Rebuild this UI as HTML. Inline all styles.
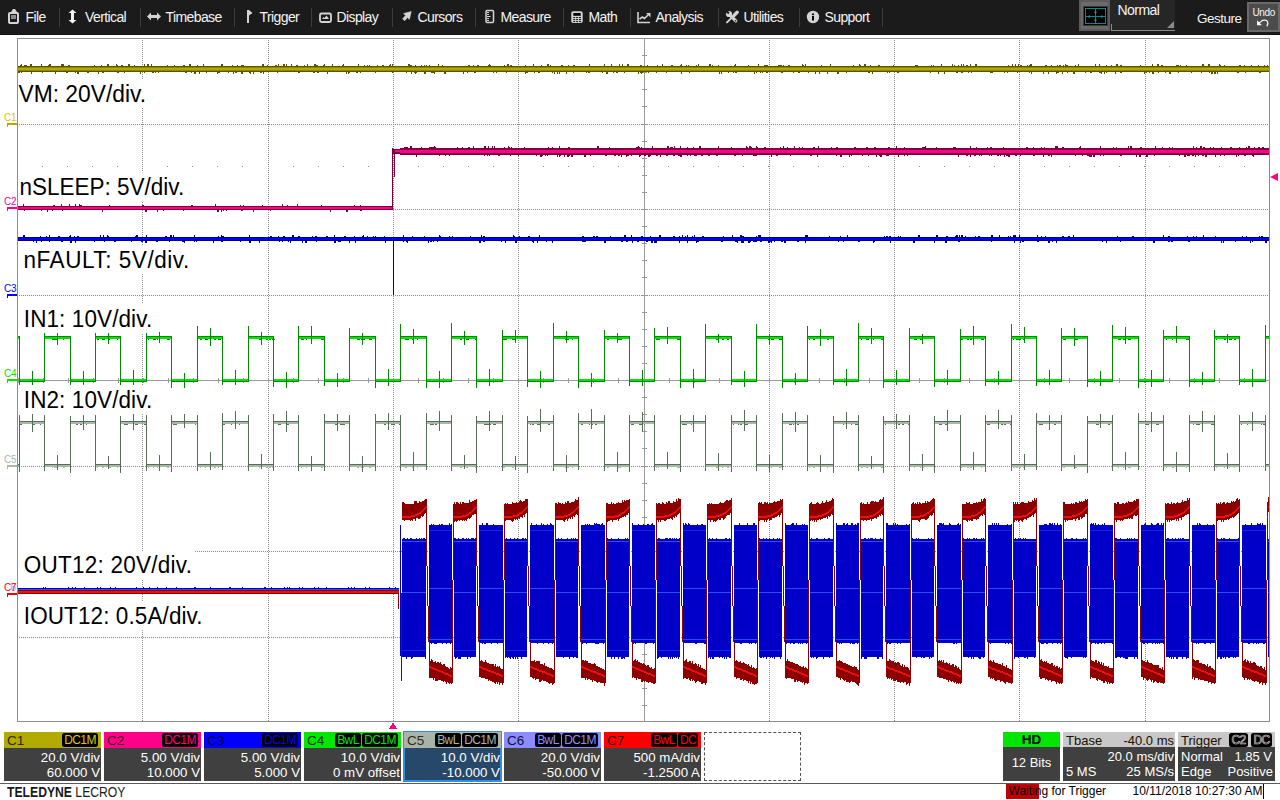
<!DOCTYPE html>
<html><head><meta charset="utf-8"><style>
*{margin:0;padding:0;box-sizing:border-box}
html,body{width:1280px;height:800px;overflow:hidden;background:#fff;font-family:"Liberation Sans",sans-serif}
#menu{position:absolute;left:0;top:0;width:1280px;height:35px;background:#1b1b1b;border-bottom:1px solid #0c1218}
.mi{position:absolute;top:10px;color:#f4f4f4;font-size:14px;line-height:14px;white-space:nowrap;letter-spacing:-0.6px}
.sep{position:absolute;top:8px;width:1px;height:19px;background:#3c3c3c}
#plot{position:absolute;left:0;top:0}
.lb{position:absolute;color:#000;line-height:1;white-space:nowrap}
.mk{position:absolute;font-size:10px;line-height:10px;left:4px;letter-spacing:-0.3px}
.box{position:absolute;top:732px;width:97px;height:49px}
.hd{position:absolute;left:0;top:0;width:100%;height:16px}
.cn{position:absolute;left:3px;top:1px;font-size:13.5px;line-height:15px}
.bd{position:absolute;top:1px;height:14px;background:#000;border-radius:2.5px;font-size:12px;line-height:14px;text-align:center;letter-spacing:-0.6px}
.v1,.v2{position:absolute;right:1px;color:#fff;font-size:13.3px;line-height:14px;white-space:nowrap}
.v1{top:18.5px} .v2{top:33.8px}
</style></head><body>
<svg id="plot" width="1280" height="800" shape-rendering="crispEdges">
<path fill="#8a8a8a" d="M142 40h1v1h-1zM142 42h1v1h-1zM142 44h1v1h-1zM142 46h1v1h-1zM142 48h1v1h-1zM142 50h1v1h-1zM142 52h1v1h-1zM142 54h1v1h-1zM142 56h1v1h-1zM142 58h1v1h-1zM142 60h1v1h-1zM142 62h1v1h-1zM142 64h1v1h-1zM142 66h1v1h-1zM142 68h1v1h-1zM142 70h1v1h-1zM142 72h1v1h-1zM142 74h1v1h-1zM142 76h1v1h-1zM142 78h1v1h-1zM142 80h1v1h-1zM142 82h1v1h-1zM142 84h1v1h-1zM142 86h1v1h-1zM142 88h1v1h-1zM142 90h1v1h-1zM142 92h1v1h-1zM142 94h1v1h-1zM142 96h1v1h-1zM142 98h1v1h-1zM142 100h1v1h-1zM142 102h1v1h-1zM142 104h1v1h-1zM142 106h1v1h-1zM142 108h1v1h-1zM142 110h1v1h-1zM142 112h1v1h-1zM142 114h1v1h-1zM142 116h1v1h-1zM142 118h1v1h-1zM142 120h1v1h-1zM142 122h1v1h-1zM142 124h1v1h-1zM142 126h1v1h-1zM142 128h1v1h-1zM142 130h1v1h-1zM142 132h1v1h-1zM142 134h1v1h-1zM142 136h1v1h-1zM142 138h1v1h-1zM142 140h1v1h-1zM142 142h1v1h-1zM142 144h1v1h-1zM142 146h1v1h-1zM142 148h1v1h-1zM142 150h1v1h-1zM142 152h1v1h-1zM142 154h1v1h-1zM142 156h1v1h-1zM142 158h1v1h-1zM142 160h1v1h-1zM142 162h1v1h-1zM142 164h1v1h-1zM142 166h1v1h-1zM142 168h1v1h-1zM142 170h1v1h-1zM142 172h1v1h-1zM142 174h1v1h-1zM142 176h1v1h-1zM142 178h1v1h-1zM142 180h1v1h-1zM142 182h1v1h-1zM142 184h1v1h-1zM142 186h1v1h-1zM142 188h1v1h-1zM142 190h1v1h-1zM142 192h1v1h-1zM142 194h1v1h-1zM142 196h1v1h-1zM142 198h1v1h-1zM142 200h1v1h-1zM142 202h1v1h-1zM142 204h1v1h-1zM142 206h1v1h-1zM142 208h1v1h-1zM142 210h1v1h-1zM142 212h1v1h-1zM142 214h1v1h-1zM142 216h1v1h-1zM142 218h1v1h-1zM142 220h1v1h-1zM142 222h1v1h-1zM142 224h1v1h-1zM142 226h1v1h-1zM142 228h1v1h-1zM142 230h1v1h-1zM142 232h1v1h-1zM142 234h1v1h-1zM142 236h1v1h-1zM142 238h1v1h-1zM142 240h1v1h-1zM142 242h1v1h-1zM142 244h1v1h-1zM142 246h1v1h-1zM142 248h1v1h-1zM142 250h1v1h-1zM142 252h1v1h-1zM142 254h1v1h-1zM142 256h1v1h-1zM142 258h1v1h-1zM142 260h1v1h-1zM142 262h1v1h-1zM142 264h1v1h-1zM142 266h1v1h-1zM142 268h1v1h-1zM142 270h1v1h-1zM142 272h1v1h-1zM142 274h1v1h-1zM142 276h1v1h-1zM142 278h1v1h-1zM142 280h1v1h-1zM142 282h1v1h-1zM142 284h1v1h-1zM142 286h1v1h-1zM142 288h1v1h-1zM142 290h1v1h-1zM142 292h1v1h-1zM142 294h1v1h-1zM142 296h1v1h-1zM142 298h1v1h-1zM142 300h1v1h-1zM142 302h1v1h-1zM142 304h1v1h-1zM142 306h1v1h-1zM142 308h1v1h-1zM142 310h1v1h-1zM142 312h1v1h-1zM142 314h1v1h-1zM142 316h1v1h-1zM142 318h1v1h-1zM142 320h1v1h-1zM142 322h1v1h-1zM142 324h1v1h-1zM142 326h1v1h-1zM142 328h1v1h-1zM142 330h1v1h-1zM142 332h1v1h-1zM142 334h1v1h-1zM142 336h1v1h-1zM142 338h1v1h-1zM142 340h1v1h-1zM142 342h1v1h-1zM142 344h1v1h-1zM142 346h1v1h-1zM142 348h1v1h-1zM142 350h1v1h-1zM142 352h1v1h-1zM142 354h1v1h-1zM142 356h1v1h-1zM142 358h1v1h-1zM142 360h1v1h-1zM142 362h1v1h-1zM142 364h1v1h-1zM142 366h1v1h-1zM142 368h1v1h-1zM142 370h1v1h-1zM142 372h1v1h-1zM142 374h1v1h-1zM142 376h1v1h-1zM142 378h1v1h-1zM142 380h1v1h-1zM142 382h1v1h-1zM142 384h1v1h-1zM142 386h1v1h-1zM142 388h1v1h-1zM142 390h1v1h-1zM142 392h1v1h-1zM142 394h1v1h-1zM142 396h1v1h-1zM142 398h1v1h-1zM142 400h1v1h-1zM142 402h1v1h-1zM142 404h1v1h-1zM142 406h1v1h-1zM142 408h1v1h-1zM142 410h1v1h-1zM142 412h1v1h-1zM142 414h1v1h-1zM142 416h1v1h-1zM142 418h1v1h-1zM142 420h1v1h-1zM142 422h1v1h-1zM142 424h1v1h-1zM142 426h1v1h-1zM142 428h1v1h-1zM142 430h1v1h-1zM142 432h1v1h-1zM142 434h1v1h-1zM142 436h1v1h-1zM142 438h1v1h-1zM142 440h1v1h-1zM142 442h1v1h-1zM142 444h1v1h-1zM142 446h1v1h-1zM142 448h1v1h-1zM142 450h1v1h-1zM142 452h1v1h-1zM142 454h1v1h-1zM142 456h1v1h-1zM142 458h1v1h-1zM142 460h1v1h-1zM142 462h1v1h-1zM142 464h1v1h-1zM142 466h1v1h-1zM142 468h1v1h-1zM142 470h1v1h-1zM142 472h1v1h-1zM142 474h1v1h-1zM142 476h1v1h-1zM142 478h1v1h-1zM142 480h1v1h-1zM142 482h1v1h-1zM142 484h1v1h-1zM142 486h1v1h-1zM142 488h1v1h-1zM142 490h1v1h-1zM142 492h1v1h-1zM142 494h1v1h-1zM142 496h1v1h-1zM142 498h1v1h-1zM142 500h1v1h-1zM142 502h1v1h-1zM142 504h1v1h-1zM142 506h1v1h-1zM142 508h1v1h-1zM142 510h1v1h-1zM142 512h1v1h-1zM142 514h1v1h-1zM142 516h1v1h-1zM142 518h1v1h-1zM142 520h1v1h-1zM142 522h1v1h-1zM142 524h1v1h-1zM142 526h1v1h-1zM142 528h1v1h-1zM142 530h1v1h-1zM142 532h1v1h-1zM142 534h1v1h-1zM142 536h1v1h-1zM142 538h1v1h-1zM142 540h1v1h-1zM142 542h1v1h-1zM142 544h1v1h-1zM142 546h1v1h-1zM142 548h1v1h-1zM142 550h1v1h-1zM142 552h1v1h-1zM142 554h1v1h-1zM142 556h1v1h-1zM142 558h1v1h-1zM142 560h1v1h-1zM142 562h1v1h-1zM142 564h1v1h-1zM142 566h1v1h-1zM142 568h1v1h-1zM142 570h1v1h-1zM142 572h1v1h-1zM142 574h1v1h-1zM142 576h1v1h-1zM142 578h1v1h-1zM142 580h1v1h-1zM142 582h1v1h-1zM142 584h1v1h-1zM142 586h1v1h-1zM142 588h1v1h-1zM142 590h1v1h-1zM142 592h1v1h-1zM142 594h1v1h-1zM142 596h1v1h-1zM142 598h1v1h-1zM142 600h1v1h-1zM142 602h1v1h-1zM142 604h1v1h-1zM142 606h1v1h-1zM142 608h1v1h-1zM142 610h1v1h-1zM142 612h1v1h-1zM142 614h1v1h-1zM142 616h1v1h-1zM142 618h1v1h-1zM142 620h1v1h-1zM142 622h1v1h-1zM142 624h1v1h-1zM142 626h1v1h-1zM142 628h1v1h-1zM142 630h1v1h-1zM142 632h1v1h-1zM142 634h1v1h-1zM142 636h1v1h-1zM142 638h1v1h-1zM142 640h1v1h-1zM142 642h1v1h-1zM142 644h1v1h-1zM142 646h1v1h-1zM142 648h1v1h-1zM142 650h1v1h-1zM142 652h1v1h-1zM142 654h1v1h-1zM142 656h1v1h-1zM142 658h1v1h-1zM142 660h1v1h-1zM142 662h1v1h-1zM142 664h1v1h-1zM142 666h1v1h-1zM142 668h1v1h-1zM142 670h1v1h-1zM142 672h1v1h-1zM142 674h1v1h-1zM142 676h1v1h-1zM142 678h1v1h-1zM142 680h1v1h-1zM142 682h1v1h-1zM142 684h1v1h-1zM142 686h1v1h-1zM142 688h1v1h-1zM142 690h1v1h-1zM142 692h1v1h-1zM142 694h1v1h-1zM142 696h1v1h-1zM142 698h1v1h-1zM142 700h1v1h-1zM142 702h1v1h-1zM142 704h1v1h-1zM142 706h1v1h-1zM142 708h1v1h-1zM142 710h1v1h-1zM142 712h1v1h-1zM142 714h1v1h-1zM142 716h1v1h-1zM142 718h1v1h-1zM142 720h1v1h-1zM268 40h1v1h-1zM268 42h1v1h-1zM268 44h1v1h-1zM268 46h1v1h-1zM268 48h1v1h-1zM268 50h1v1h-1zM268 52h1v1h-1zM268 54h1v1h-1zM268 56h1v1h-1zM268 58h1v1h-1zM268 60h1v1h-1zM268 62h1v1h-1zM268 64h1v1h-1zM268 66h1v1h-1zM268 68h1v1h-1zM268 70h1v1h-1zM268 72h1v1h-1zM268 74h1v1h-1zM268 76h1v1h-1zM268 78h1v1h-1zM268 80h1v1h-1zM268 82h1v1h-1zM268 84h1v1h-1zM268 86h1v1h-1zM268 88h1v1h-1zM268 90h1v1h-1zM268 92h1v1h-1zM268 94h1v1h-1zM268 96h1v1h-1zM268 98h1v1h-1zM268 100h1v1h-1zM268 102h1v1h-1zM268 104h1v1h-1zM268 106h1v1h-1zM268 108h1v1h-1zM268 110h1v1h-1zM268 112h1v1h-1zM268 114h1v1h-1zM268 116h1v1h-1zM268 118h1v1h-1zM268 120h1v1h-1zM268 122h1v1h-1zM268 124h1v1h-1zM268 126h1v1h-1zM268 128h1v1h-1zM268 130h1v1h-1zM268 132h1v1h-1zM268 134h1v1h-1zM268 136h1v1h-1zM268 138h1v1h-1zM268 140h1v1h-1zM268 142h1v1h-1zM268 144h1v1h-1zM268 146h1v1h-1zM268 148h1v1h-1zM268 150h1v1h-1zM268 152h1v1h-1zM268 154h1v1h-1zM268 156h1v1h-1zM268 158h1v1h-1zM268 160h1v1h-1zM268 162h1v1h-1zM268 164h1v1h-1zM268 166h1v1h-1zM268 168h1v1h-1zM268 170h1v1h-1zM268 172h1v1h-1zM268 174h1v1h-1zM268 176h1v1h-1zM268 178h1v1h-1zM268 180h1v1h-1zM268 182h1v1h-1zM268 184h1v1h-1zM268 186h1v1h-1zM268 188h1v1h-1zM268 190h1v1h-1zM268 192h1v1h-1zM268 194h1v1h-1zM268 196h1v1h-1zM268 198h1v1h-1zM268 200h1v1h-1zM268 202h1v1h-1zM268 204h1v1h-1zM268 206h1v1h-1zM268 208h1v1h-1zM268 210h1v1h-1zM268 212h1v1h-1zM268 214h1v1h-1zM268 216h1v1h-1zM268 218h1v1h-1zM268 220h1v1h-1zM268 222h1v1h-1zM268 224h1v1h-1zM268 226h1v1h-1zM268 228h1v1h-1zM268 230h1v1h-1zM268 232h1v1h-1zM268 234h1v1h-1zM268 236h1v1h-1zM268 238h1v1h-1zM268 240h1v1h-1zM268 242h1v1h-1zM268 244h1v1h-1zM268 246h1v1h-1zM268 248h1v1h-1zM268 250h1v1h-1zM268 252h1v1h-1zM268 254h1v1h-1zM268 256h1v1h-1zM268 258h1v1h-1zM268 260h1v1h-1zM268 262h1v1h-1zM268 264h1v1h-1zM268 266h1v1h-1zM268 268h1v1h-1zM268 270h1v1h-1zM268 272h1v1h-1zM268 274h1v1h-1zM268 276h1v1h-1zM268 278h1v1h-1zM268 280h1v1h-1zM268 282h1v1h-1zM268 284h1v1h-1zM268 286h1v1h-1zM268 288h1v1h-1zM268 290h1v1h-1zM268 292h1v1h-1zM268 294h1v1h-1zM268 296h1v1h-1zM268 298h1v1h-1zM268 300h1v1h-1zM268 302h1v1h-1zM268 304h1v1h-1zM268 306h1v1h-1zM268 308h1v1h-1zM268 310h1v1h-1zM268 312h1v1h-1zM268 314h1v1h-1zM268 316h1v1h-1zM268 318h1v1h-1zM268 320h1v1h-1zM268 322h1v1h-1zM268 324h1v1h-1zM268 326h1v1h-1zM268 328h1v1h-1zM268 330h1v1h-1zM268 332h1v1h-1zM268 334h1v1h-1zM268 336h1v1h-1zM268 338h1v1h-1zM268 340h1v1h-1zM268 342h1v1h-1zM268 344h1v1h-1zM268 346h1v1h-1zM268 348h1v1h-1zM268 350h1v1h-1zM268 352h1v1h-1zM268 354h1v1h-1zM268 356h1v1h-1zM268 358h1v1h-1zM268 360h1v1h-1zM268 362h1v1h-1zM268 364h1v1h-1zM268 366h1v1h-1zM268 368h1v1h-1zM268 370h1v1h-1zM268 372h1v1h-1zM268 374h1v1h-1zM268 376h1v1h-1zM268 378h1v1h-1zM268 380h1v1h-1zM268 382h1v1h-1zM268 384h1v1h-1zM268 386h1v1h-1zM268 388h1v1h-1zM268 390h1v1h-1zM268 392h1v1h-1zM268 394h1v1h-1zM268 396h1v1h-1zM268 398h1v1h-1zM268 400h1v1h-1zM268 402h1v1h-1zM268 404h1v1h-1zM268 406h1v1h-1zM268 408h1v1h-1zM268 410h1v1h-1zM268 412h1v1h-1zM268 414h1v1h-1zM268 416h1v1h-1zM268 418h1v1h-1zM268 420h1v1h-1zM268 422h1v1h-1zM268 424h1v1h-1zM268 426h1v1h-1zM268 428h1v1h-1zM268 430h1v1h-1zM268 432h1v1h-1zM268 434h1v1h-1zM268 436h1v1h-1zM268 438h1v1h-1zM268 440h1v1h-1zM268 442h1v1h-1zM268 444h1v1h-1zM268 446h1v1h-1zM268 448h1v1h-1zM268 450h1v1h-1zM268 452h1v1h-1zM268 454h1v1h-1zM268 456h1v1h-1zM268 458h1v1h-1zM268 460h1v1h-1zM268 462h1v1h-1zM268 464h1v1h-1zM268 466h1v1h-1zM268 468h1v1h-1zM268 470h1v1h-1zM268 472h1v1h-1zM268 474h1v1h-1zM268 476h1v1h-1zM268 478h1v1h-1zM268 480h1v1h-1zM268 482h1v1h-1zM268 484h1v1h-1zM268 486h1v1h-1zM268 488h1v1h-1zM268 490h1v1h-1zM268 492h1v1h-1zM268 494h1v1h-1zM268 496h1v1h-1zM268 498h1v1h-1zM268 500h1v1h-1zM268 502h1v1h-1zM268 504h1v1h-1zM268 506h1v1h-1zM268 508h1v1h-1zM268 510h1v1h-1zM268 512h1v1h-1zM268 514h1v1h-1zM268 516h1v1h-1zM268 518h1v1h-1zM268 520h1v1h-1zM268 522h1v1h-1zM268 524h1v1h-1zM268 526h1v1h-1zM268 528h1v1h-1zM268 530h1v1h-1zM268 532h1v1h-1zM268 534h1v1h-1zM268 536h1v1h-1zM268 538h1v1h-1zM268 540h1v1h-1zM268 542h1v1h-1zM268 544h1v1h-1zM268 546h1v1h-1zM268 548h1v1h-1zM268 550h1v1h-1zM268 552h1v1h-1zM268 554h1v1h-1zM268 556h1v1h-1zM268 558h1v1h-1zM268 560h1v1h-1zM268 562h1v1h-1zM268 564h1v1h-1zM268 566h1v1h-1zM268 568h1v1h-1zM268 570h1v1h-1zM268 572h1v1h-1zM268 574h1v1h-1zM268 576h1v1h-1zM268 578h1v1h-1zM268 580h1v1h-1zM268 582h1v1h-1zM268 584h1v1h-1zM268 586h1v1h-1zM268 588h1v1h-1zM268 590h1v1h-1zM268 592h1v1h-1zM268 594h1v1h-1zM268 596h1v1h-1zM268 598h1v1h-1zM268 600h1v1h-1zM268 602h1v1h-1zM268 604h1v1h-1zM268 606h1v1h-1zM268 608h1v1h-1zM268 610h1v1h-1zM268 612h1v1h-1zM268 614h1v1h-1zM268 616h1v1h-1zM268 618h1v1h-1zM268 620h1v1h-1zM268 622h1v1h-1zM268 624h1v1h-1zM268 626h1v1h-1zM268 628h1v1h-1zM268 630h1v1h-1zM268 632h1v1h-1zM268 634h1v1h-1zM268 636h1v1h-1zM268 638h1v1h-1zM268 640h1v1h-1zM268 642h1v1h-1zM268 644h1v1h-1zM268 646h1v1h-1zM268 648h1v1h-1zM268 650h1v1h-1zM268 652h1v1h-1zM268 654h1v1h-1zM268 656h1v1h-1zM268 658h1v1h-1zM268 660h1v1h-1zM268 662h1v1h-1zM268 664h1v1h-1zM268 666h1v1h-1zM268 668h1v1h-1zM268 670h1v1h-1zM268 672h1v1h-1zM268 674h1v1h-1zM268 676h1v1h-1zM268 678h1v1h-1zM268 680h1v1h-1zM268 682h1v1h-1zM268 684h1v1h-1zM268 686h1v1h-1zM268 688h1v1h-1zM268 690h1v1h-1zM268 692h1v1h-1zM268 694h1v1h-1zM268 696h1v1h-1zM268 698h1v1h-1zM268 700h1v1h-1zM268 702h1v1h-1zM268 704h1v1h-1zM268 706h1v1h-1zM268 708h1v1h-1zM268 710h1v1h-1zM268 712h1v1h-1zM268 714h1v1h-1zM268 716h1v1h-1zM268 718h1v1h-1zM268 720h1v1h-1zM393 40h1v1h-1zM393 42h1v1h-1zM393 44h1v1h-1zM393 46h1v1h-1zM393 48h1v1h-1zM393 50h1v1h-1zM393 52h1v1h-1zM393 54h1v1h-1zM393 56h1v1h-1zM393 58h1v1h-1zM393 60h1v1h-1zM393 62h1v1h-1zM393 64h1v1h-1zM393 66h1v1h-1zM393 68h1v1h-1zM393 70h1v1h-1zM393 72h1v1h-1zM393 74h1v1h-1zM393 76h1v1h-1zM393 78h1v1h-1zM393 80h1v1h-1zM393 82h1v1h-1zM393 84h1v1h-1zM393 86h1v1h-1zM393 88h1v1h-1zM393 90h1v1h-1zM393 92h1v1h-1zM393 94h1v1h-1zM393 96h1v1h-1zM393 98h1v1h-1zM393 100h1v1h-1zM393 102h1v1h-1zM393 104h1v1h-1zM393 106h1v1h-1zM393 108h1v1h-1zM393 110h1v1h-1zM393 112h1v1h-1zM393 114h1v1h-1zM393 116h1v1h-1zM393 118h1v1h-1zM393 120h1v1h-1zM393 122h1v1h-1zM393 124h1v1h-1zM393 126h1v1h-1zM393 128h1v1h-1zM393 130h1v1h-1zM393 132h1v1h-1zM393 134h1v1h-1zM393 136h1v1h-1zM393 138h1v1h-1zM393 140h1v1h-1zM393 142h1v1h-1zM393 144h1v1h-1zM393 146h1v1h-1zM393 148h1v1h-1zM393 150h1v1h-1zM393 152h1v1h-1zM393 154h1v1h-1zM393 156h1v1h-1zM393 158h1v1h-1zM393 160h1v1h-1zM393 162h1v1h-1zM393 164h1v1h-1zM393 166h1v1h-1zM393 168h1v1h-1zM393 170h1v1h-1zM393 172h1v1h-1zM393 174h1v1h-1zM393 176h1v1h-1zM393 178h1v1h-1zM393 180h1v1h-1zM393 182h1v1h-1zM393 184h1v1h-1zM393 186h1v1h-1zM393 188h1v1h-1zM393 190h1v1h-1zM393 192h1v1h-1zM393 194h1v1h-1zM393 196h1v1h-1zM393 198h1v1h-1zM393 200h1v1h-1zM393 202h1v1h-1zM393 204h1v1h-1zM393 206h1v1h-1zM393 208h1v1h-1zM393 210h1v1h-1zM393 212h1v1h-1zM393 214h1v1h-1zM393 216h1v1h-1zM393 218h1v1h-1zM393 220h1v1h-1zM393 222h1v1h-1zM393 224h1v1h-1zM393 226h1v1h-1zM393 228h1v1h-1zM393 230h1v1h-1zM393 232h1v1h-1zM393 234h1v1h-1zM393 236h1v1h-1zM393 238h1v1h-1zM393 240h1v1h-1zM393 242h1v1h-1zM393 244h1v1h-1zM393 246h1v1h-1zM393 248h1v1h-1zM393 250h1v1h-1zM393 252h1v1h-1zM393 254h1v1h-1zM393 256h1v1h-1zM393 258h1v1h-1zM393 260h1v1h-1zM393 262h1v1h-1zM393 264h1v1h-1zM393 266h1v1h-1zM393 268h1v1h-1zM393 270h1v1h-1zM393 272h1v1h-1zM393 274h1v1h-1zM393 276h1v1h-1zM393 278h1v1h-1zM393 280h1v1h-1zM393 282h1v1h-1zM393 284h1v1h-1zM393 286h1v1h-1zM393 288h1v1h-1zM393 290h1v1h-1zM393 292h1v1h-1zM393 294h1v1h-1zM393 296h1v1h-1zM393 298h1v1h-1zM393 300h1v1h-1zM393 302h1v1h-1zM393 304h1v1h-1zM393 306h1v1h-1zM393 308h1v1h-1zM393 310h1v1h-1zM393 312h1v1h-1zM393 314h1v1h-1zM393 316h1v1h-1zM393 318h1v1h-1zM393 320h1v1h-1zM393 322h1v1h-1zM393 324h1v1h-1zM393 326h1v1h-1zM393 328h1v1h-1zM393 330h1v1h-1zM393 332h1v1h-1zM393 334h1v1h-1zM393 336h1v1h-1zM393 338h1v1h-1zM393 340h1v1h-1zM393 342h1v1h-1zM393 344h1v1h-1zM393 346h1v1h-1zM393 348h1v1h-1zM393 350h1v1h-1zM393 352h1v1h-1zM393 354h1v1h-1zM393 356h1v1h-1zM393 358h1v1h-1zM393 360h1v1h-1zM393 362h1v1h-1zM393 364h1v1h-1zM393 366h1v1h-1zM393 368h1v1h-1zM393 370h1v1h-1zM393 372h1v1h-1zM393 374h1v1h-1zM393 376h1v1h-1zM393 378h1v1h-1zM393 380h1v1h-1zM393 382h1v1h-1zM393 384h1v1h-1zM393 386h1v1h-1zM393 388h1v1h-1zM393 390h1v1h-1zM393 392h1v1h-1zM393 394h1v1h-1zM393 396h1v1h-1zM393 398h1v1h-1zM393 400h1v1h-1zM393 402h1v1h-1zM393 404h1v1h-1zM393 406h1v1h-1zM393 408h1v1h-1zM393 410h1v1h-1zM393 412h1v1h-1zM393 414h1v1h-1zM393 416h1v1h-1zM393 418h1v1h-1zM393 420h1v1h-1zM393 422h1v1h-1zM393 424h1v1h-1zM393 426h1v1h-1zM393 428h1v1h-1zM393 430h1v1h-1zM393 432h1v1h-1zM393 434h1v1h-1zM393 436h1v1h-1zM393 438h1v1h-1zM393 440h1v1h-1zM393 442h1v1h-1zM393 444h1v1h-1zM393 446h1v1h-1zM393 448h1v1h-1zM393 450h1v1h-1zM393 452h1v1h-1zM393 454h1v1h-1zM393 456h1v1h-1zM393 458h1v1h-1zM393 460h1v1h-1zM393 462h1v1h-1zM393 464h1v1h-1zM393 466h1v1h-1zM393 468h1v1h-1zM393 470h1v1h-1zM393 472h1v1h-1zM393 474h1v1h-1zM393 476h1v1h-1zM393 478h1v1h-1zM393 480h1v1h-1zM393 482h1v1h-1zM393 484h1v1h-1zM393 486h1v1h-1zM393 488h1v1h-1zM393 490h1v1h-1zM393 492h1v1h-1zM393 494h1v1h-1zM393 496h1v1h-1zM393 498h1v1h-1zM393 500h1v1h-1zM393 502h1v1h-1zM393 504h1v1h-1zM393 506h1v1h-1zM393 508h1v1h-1zM393 510h1v1h-1zM393 512h1v1h-1zM393 514h1v1h-1zM393 516h1v1h-1zM393 518h1v1h-1zM393 520h1v1h-1zM393 522h1v1h-1zM393 524h1v1h-1zM393 526h1v1h-1zM393 528h1v1h-1zM393 530h1v1h-1zM393 532h1v1h-1zM393 534h1v1h-1zM393 536h1v1h-1zM393 538h1v1h-1zM393 540h1v1h-1zM393 542h1v1h-1zM393 544h1v1h-1zM393 546h1v1h-1zM393 548h1v1h-1zM393 550h1v1h-1zM393 552h1v1h-1zM393 554h1v1h-1zM393 556h1v1h-1zM393 558h1v1h-1zM393 560h1v1h-1zM393 562h1v1h-1zM393 564h1v1h-1zM393 566h1v1h-1zM393 568h1v1h-1zM393 570h1v1h-1zM393 572h1v1h-1zM393 574h1v1h-1zM393 576h1v1h-1zM393 578h1v1h-1zM393 580h1v1h-1zM393 582h1v1h-1zM393 584h1v1h-1zM393 586h1v1h-1zM393 588h1v1h-1zM393 590h1v1h-1zM393 592h1v1h-1zM393 594h1v1h-1zM393 596h1v1h-1zM393 598h1v1h-1zM393 600h1v1h-1zM393 602h1v1h-1zM393 604h1v1h-1zM393 606h1v1h-1zM393 608h1v1h-1zM393 610h1v1h-1zM393 612h1v1h-1zM393 614h1v1h-1zM393 616h1v1h-1zM393 618h1v1h-1zM393 620h1v1h-1zM393 622h1v1h-1zM393 624h1v1h-1zM393 626h1v1h-1zM393 628h1v1h-1zM393 630h1v1h-1zM393 632h1v1h-1zM393 634h1v1h-1zM393 636h1v1h-1zM393 638h1v1h-1zM393 640h1v1h-1zM393 642h1v1h-1zM393 644h1v1h-1zM393 646h1v1h-1zM393 648h1v1h-1zM393 650h1v1h-1zM393 652h1v1h-1zM393 654h1v1h-1zM393 656h1v1h-1zM393 658h1v1h-1zM393 660h1v1h-1zM393 662h1v1h-1zM393 664h1v1h-1zM393 666h1v1h-1zM393 668h1v1h-1zM393 670h1v1h-1zM393 672h1v1h-1zM393 674h1v1h-1zM393 676h1v1h-1zM393 678h1v1h-1zM393 680h1v1h-1zM393 682h1v1h-1zM393 684h1v1h-1zM393 686h1v1h-1zM393 688h1v1h-1zM393 690h1v1h-1zM393 692h1v1h-1zM393 694h1v1h-1zM393 696h1v1h-1zM393 698h1v1h-1zM393 700h1v1h-1zM393 702h1v1h-1zM393 704h1v1h-1zM393 706h1v1h-1zM393 708h1v1h-1zM393 710h1v1h-1zM393 712h1v1h-1zM393 714h1v1h-1zM393 716h1v1h-1zM393 718h1v1h-1zM393 720h1v1h-1zM518 40h1v1h-1zM518 42h1v1h-1zM518 44h1v1h-1zM518 46h1v1h-1zM518 48h1v1h-1zM518 50h1v1h-1zM518 52h1v1h-1zM518 54h1v1h-1zM518 56h1v1h-1zM518 58h1v1h-1zM518 60h1v1h-1zM518 62h1v1h-1zM518 64h1v1h-1zM518 66h1v1h-1zM518 68h1v1h-1zM518 70h1v1h-1zM518 72h1v1h-1zM518 74h1v1h-1zM518 76h1v1h-1zM518 78h1v1h-1zM518 80h1v1h-1zM518 82h1v1h-1zM518 84h1v1h-1zM518 86h1v1h-1zM518 88h1v1h-1zM518 90h1v1h-1zM518 92h1v1h-1zM518 94h1v1h-1zM518 96h1v1h-1zM518 98h1v1h-1zM518 100h1v1h-1zM518 102h1v1h-1zM518 104h1v1h-1zM518 106h1v1h-1zM518 108h1v1h-1zM518 110h1v1h-1zM518 112h1v1h-1zM518 114h1v1h-1zM518 116h1v1h-1zM518 118h1v1h-1zM518 120h1v1h-1zM518 122h1v1h-1zM518 124h1v1h-1zM518 126h1v1h-1zM518 128h1v1h-1zM518 130h1v1h-1zM518 132h1v1h-1zM518 134h1v1h-1zM518 136h1v1h-1zM518 138h1v1h-1zM518 140h1v1h-1zM518 142h1v1h-1zM518 144h1v1h-1zM518 146h1v1h-1zM518 148h1v1h-1zM518 150h1v1h-1zM518 152h1v1h-1zM518 154h1v1h-1zM518 156h1v1h-1zM518 158h1v1h-1zM518 160h1v1h-1zM518 162h1v1h-1zM518 164h1v1h-1zM518 166h1v1h-1zM518 168h1v1h-1zM518 170h1v1h-1zM518 172h1v1h-1zM518 174h1v1h-1zM518 176h1v1h-1zM518 178h1v1h-1zM518 180h1v1h-1zM518 182h1v1h-1zM518 184h1v1h-1zM518 186h1v1h-1zM518 188h1v1h-1zM518 190h1v1h-1zM518 192h1v1h-1zM518 194h1v1h-1zM518 196h1v1h-1zM518 198h1v1h-1zM518 200h1v1h-1zM518 202h1v1h-1zM518 204h1v1h-1zM518 206h1v1h-1zM518 208h1v1h-1zM518 210h1v1h-1zM518 212h1v1h-1zM518 214h1v1h-1zM518 216h1v1h-1zM518 218h1v1h-1zM518 220h1v1h-1zM518 222h1v1h-1zM518 224h1v1h-1zM518 226h1v1h-1zM518 228h1v1h-1zM518 230h1v1h-1zM518 232h1v1h-1zM518 234h1v1h-1zM518 236h1v1h-1zM518 238h1v1h-1zM518 240h1v1h-1zM518 242h1v1h-1zM518 244h1v1h-1zM518 246h1v1h-1zM518 248h1v1h-1zM518 250h1v1h-1zM518 252h1v1h-1zM518 254h1v1h-1zM518 256h1v1h-1zM518 258h1v1h-1zM518 260h1v1h-1zM518 262h1v1h-1zM518 264h1v1h-1zM518 266h1v1h-1zM518 268h1v1h-1zM518 270h1v1h-1zM518 272h1v1h-1zM518 274h1v1h-1zM518 276h1v1h-1zM518 278h1v1h-1zM518 280h1v1h-1zM518 282h1v1h-1zM518 284h1v1h-1zM518 286h1v1h-1zM518 288h1v1h-1zM518 290h1v1h-1zM518 292h1v1h-1zM518 294h1v1h-1zM518 296h1v1h-1zM518 298h1v1h-1zM518 300h1v1h-1zM518 302h1v1h-1zM518 304h1v1h-1zM518 306h1v1h-1zM518 308h1v1h-1zM518 310h1v1h-1zM518 312h1v1h-1zM518 314h1v1h-1zM518 316h1v1h-1zM518 318h1v1h-1zM518 320h1v1h-1zM518 322h1v1h-1zM518 324h1v1h-1zM518 326h1v1h-1zM518 328h1v1h-1zM518 330h1v1h-1zM518 332h1v1h-1zM518 334h1v1h-1zM518 336h1v1h-1zM518 338h1v1h-1zM518 340h1v1h-1zM518 342h1v1h-1zM518 344h1v1h-1zM518 346h1v1h-1zM518 348h1v1h-1zM518 350h1v1h-1zM518 352h1v1h-1zM518 354h1v1h-1zM518 356h1v1h-1zM518 358h1v1h-1zM518 360h1v1h-1zM518 362h1v1h-1zM518 364h1v1h-1zM518 366h1v1h-1zM518 368h1v1h-1zM518 370h1v1h-1zM518 372h1v1h-1zM518 374h1v1h-1zM518 376h1v1h-1zM518 378h1v1h-1zM518 380h1v1h-1zM518 382h1v1h-1zM518 384h1v1h-1zM518 386h1v1h-1zM518 388h1v1h-1zM518 390h1v1h-1zM518 392h1v1h-1zM518 394h1v1h-1zM518 396h1v1h-1zM518 398h1v1h-1zM518 400h1v1h-1zM518 402h1v1h-1zM518 404h1v1h-1zM518 406h1v1h-1zM518 408h1v1h-1zM518 410h1v1h-1zM518 412h1v1h-1zM518 414h1v1h-1zM518 416h1v1h-1zM518 418h1v1h-1zM518 420h1v1h-1zM518 422h1v1h-1zM518 424h1v1h-1zM518 426h1v1h-1zM518 428h1v1h-1zM518 430h1v1h-1zM518 432h1v1h-1zM518 434h1v1h-1zM518 436h1v1h-1zM518 438h1v1h-1zM518 440h1v1h-1zM518 442h1v1h-1zM518 444h1v1h-1zM518 446h1v1h-1zM518 448h1v1h-1zM518 450h1v1h-1zM518 452h1v1h-1zM518 454h1v1h-1zM518 456h1v1h-1zM518 458h1v1h-1zM518 460h1v1h-1zM518 462h1v1h-1zM518 464h1v1h-1zM518 466h1v1h-1zM518 468h1v1h-1zM518 470h1v1h-1zM518 472h1v1h-1zM518 474h1v1h-1zM518 476h1v1h-1zM518 478h1v1h-1zM518 480h1v1h-1zM518 482h1v1h-1zM518 484h1v1h-1zM518 486h1v1h-1zM518 488h1v1h-1zM518 490h1v1h-1zM518 492h1v1h-1zM518 494h1v1h-1zM518 496h1v1h-1zM518 498h1v1h-1zM518 500h1v1h-1zM518 502h1v1h-1zM518 504h1v1h-1zM518 506h1v1h-1zM518 508h1v1h-1zM518 510h1v1h-1zM518 512h1v1h-1zM518 514h1v1h-1zM518 516h1v1h-1zM518 518h1v1h-1zM518 520h1v1h-1zM518 522h1v1h-1zM518 524h1v1h-1zM518 526h1v1h-1zM518 528h1v1h-1zM518 530h1v1h-1zM518 532h1v1h-1zM518 534h1v1h-1zM518 536h1v1h-1zM518 538h1v1h-1zM518 540h1v1h-1zM518 542h1v1h-1zM518 544h1v1h-1zM518 546h1v1h-1zM518 548h1v1h-1zM518 550h1v1h-1zM518 552h1v1h-1zM518 554h1v1h-1zM518 556h1v1h-1zM518 558h1v1h-1zM518 560h1v1h-1zM518 562h1v1h-1zM518 564h1v1h-1zM518 566h1v1h-1zM518 568h1v1h-1zM518 570h1v1h-1zM518 572h1v1h-1zM518 574h1v1h-1zM518 576h1v1h-1zM518 578h1v1h-1zM518 580h1v1h-1zM518 582h1v1h-1zM518 584h1v1h-1zM518 586h1v1h-1zM518 588h1v1h-1zM518 590h1v1h-1zM518 592h1v1h-1zM518 594h1v1h-1zM518 596h1v1h-1zM518 598h1v1h-1zM518 600h1v1h-1zM518 602h1v1h-1zM518 604h1v1h-1zM518 606h1v1h-1zM518 608h1v1h-1zM518 610h1v1h-1zM518 612h1v1h-1zM518 614h1v1h-1zM518 616h1v1h-1zM518 618h1v1h-1zM518 620h1v1h-1zM518 622h1v1h-1zM518 624h1v1h-1zM518 626h1v1h-1zM518 628h1v1h-1zM518 630h1v1h-1zM518 632h1v1h-1zM518 634h1v1h-1zM518 636h1v1h-1zM518 638h1v1h-1zM518 640h1v1h-1zM518 642h1v1h-1zM518 644h1v1h-1zM518 646h1v1h-1zM518 648h1v1h-1zM518 650h1v1h-1zM518 652h1v1h-1zM518 654h1v1h-1zM518 656h1v1h-1zM518 658h1v1h-1zM518 660h1v1h-1zM518 662h1v1h-1zM518 664h1v1h-1zM518 666h1v1h-1zM518 668h1v1h-1zM518 670h1v1h-1zM518 672h1v1h-1zM518 674h1v1h-1zM518 676h1v1h-1zM518 678h1v1h-1zM518 680h1v1h-1zM518 682h1v1h-1zM518 684h1v1h-1zM518 686h1v1h-1zM518 688h1v1h-1zM518 690h1v1h-1zM518 692h1v1h-1zM518 694h1v1h-1zM518 696h1v1h-1zM518 698h1v1h-1zM518 700h1v1h-1zM518 702h1v1h-1zM518 704h1v1h-1zM518 706h1v1h-1zM518 708h1v1h-1zM518 710h1v1h-1zM518 712h1v1h-1zM518 714h1v1h-1zM518 716h1v1h-1zM518 718h1v1h-1zM518 720h1v1h-1zM769 40h1v1h-1zM769 42h1v1h-1zM769 44h1v1h-1zM769 46h1v1h-1zM769 48h1v1h-1zM769 50h1v1h-1zM769 52h1v1h-1zM769 54h1v1h-1zM769 56h1v1h-1zM769 58h1v1h-1zM769 60h1v1h-1zM769 62h1v1h-1zM769 64h1v1h-1zM769 66h1v1h-1zM769 68h1v1h-1zM769 70h1v1h-1zM769 72h1v1h-1zM769 74h1v1h-1zM769 76h1v1h-1zM769 78h1v1h-1zM769 80h1v1h-1zM769 82h1v1h-1zM769 84h1v1h-1zM769 86h1v1h-1zM769 88h1v1h-1zM769 90h1v1h-1zM769 92h1v1h-1zM769 94h1v1h-1zM769 96h1v1h-1zM769 98h1v1h-1zM769 100h1v1h-1zM769 102h1v1h-1zM769 104h1v1h-1zM769 106h1v1h-1zM769 108h1v1h-1zM769 110h1v1h-1zM769 112h1v1h-1zM769 114h1v1h-1zM769 116h1v1h-1zM769 118h1v1h-1zM769 120h1v1h-1zM769 122h1v1h-1zM769 124h1v1h-1zM769 126h1v1h-1zM769 128h1v1h-1zM769 130h1v1h-1zM769 132h1v1h-1zM769 134h1v1h-1zM769 136h1v1h-1zM769 138h1v1h-1zM769 140h1v1h-1zM769 142h1v1h-1zM769 144h1v1h-1zM769 146h1v1h-1zM769 148h1v1h-1zM769 150h1v1h-1zM769 152h1v1h-1zM769 154h1v1h-1zM769 156h1v1h-1zM769 158h1v1h-1zM769 160h1v1h-1zM769 162h1v1h-1zM769 164h1v1h-1zM769 166h1v1h-1zM769 168h1v1h-1zM769 170h1v1h-1zM769 172h1v1h-1zM769 174h1v1h-1zM769 176h1v1h-1zM769 178h1v1h-1zM769 180h1v1h-1zM769 182h1v1h-1zM769 184h1v1h-1zM769 186h1v1h-1zM769 188h1v1h-1zM769 190h1v1h-1zM769 192h1v1h-1zM769 194h1v1h-1zM769 196h1v1h-1zM769 198h1v1h-1zM769 200h1v1h-1zM769 202h1v1h-1zM769 204h1v1h-1zM769 206h1v1h-1zM769 208h1v1h-1zM769 210h1v1h-1zM769 212h1v1h-1zM769 214h1v1h-1zM769 216h1v1h-1zM769 218h1v1h-1zM769 220h1v1h-1zM769 222h1v1h-1zM769 224h1v1h-1zM769 226h1v1h-1zM769 228h1v1h-1zM769 230h1v1h-1zM769 232h1v1h-1zM769 234h1v1h-1zM769 236h1v1h-1zM769 238h1v1h-1zM769 240h1v1h-1zM769 242h1v1h-1zM769 244h1v1h-1zM769 246h1v1h-1zM769 248h1v1h-1zM769 250h1v1h-1zM769 252h1v1h-1zM769 254h1v1h-1zM769 256h1v1h-1zM769 258h1v1h-1zM769 260h1v1h-1zM769 262h1v1h-1zM769 264h1v1h-1zM769 266h1v1h-1zM769 268h1v1h-1zM769 270h1v1h-1zM769 272h1v1h-1zM769 274h1v1h-1zM769 276h1v1h-1zM769 278h1v1h-1zM769 280h1v1h-1zM769 282h1v1h-1zM769 284h1v1h-1zM769 286h1v1h-1zM769 288h1v1h-1zM769 290h1v1h-1zM769 292h1v1h-1zM769 294h1v1h-1zM769 296h1v1h-1zM769 298h1v1h-1zM769 300h1v1h-1zM769 302h1v1h-1zM769 304h1v1h-1zM769 306h1v1h-1zM769 308h1v1h-1zM769 310h1v1h-1zM769 312h1v1h-1zM769 314h1v1h-1zM769 316h1v1h-1zM769 318h1v1h-1zM769 320h1v1h-1zM769 322h1v1h-1zM769 324h1v1h-1zM769 326h1v1h-1zM769 328h1v1h-1zM769 330h1v1h-1zM769 332h1v1h-1zM769 334h1v1h-1zM769 336h1v1h-1zM769 338h1v1h-1zM769 340h1v1h-1zM769 342h1v1h-1zM769 344h1v1h-1zM769 346h1v1h-1zM769 348h1v1h-1zM769 350h1v1h-1zM769 352h1v1h-1zM769 354h1v1h-1zM769 356h1v1h-1zM769 358h1v1h-1zM769 360h1v1h-1zM769 362h1v1h-1zM769 364h1v1h-1zM769 366h1v1h-1zM769 368h1v1h-1zM769 370h1v1h-1zM769 372h1v1h-1zM769 374h1v1h-1zM769 376h1v1h-1zM769 378h1v1h-1zM769 380h1v1h-1zM769 382h1v1h-1zM769 384h1v1h-1zM769 386h1v1h-1zM769 388h1v1h-1zM769 390h1v1h-1zM769 392h1v1h-1zM769 394h1v1h-1zM769 396h1v1h-1zM769 398h1v1h-1zM769 400h1v1h-1zM769 402h1v1h-1zM769 404h1v1h-1zM769 406h1v1h-1zM769 408h1v1h-1zM769 410h1v1h-1zM769 412h1v1h-1zM769 414h1v1h-1zM769 416h1v1h-1zM769 418h1v1h-1zM769 420h1v1h-1zM769 422h1v1h-1zM769 424h1v1h-1zM769 426h1v1h-1zM769 428h1v1h-1zM769 430h1v1h-1zM769 432h1v1h-1zM769 434h1v1h-1zM769 436h1v1h-1zM769 438h1v1h-1zM769 440h1v1h-1zM769 442h1v1h-1zM769 444h1v1h-1zM769 446h1v1h-1zM769 448h1v1h-1zM769 450h1v1h-1zM769 452h1v1h-1zM769 454h1v1h-1zM769 456h1v1h-1zM769 458h1v1h-1zM769 460h1v1h-1zM769 462h1v1h-1zM769 464h1v1h-1zM769 466h1v1h-1zM769 468h1v1h-1zM769 470h1v1h-1zM769 472h1v1h-1zM769 474h1v1h-1zM769 476h1v1h-1zM769 478h1v1h-1zM769 480h1v1h-1zM769 482h1v1h-1zM769 484h1v1h-1zM769 486h1v1h-1zM769 488h1v1h-1zM769 490h1v1h-1zM769 492h1v1h-1zM769 494h1v1h-1zM769 496h1v1h-1zM769 498h1v1h-1zM769 500h1v1h-1zM769 502h1v1h-1zM769 504h1v1h-1zM769 506h1v1h-1zM769 508h1v1h-1zM769 510h1v1h-1zM769 512h1v1h-1zM769 514h1v1h-1zM769 516h1v1h-1zM769 518h1v1h-1zM769 520h1v1h-1zM769 522h1v1h-1zM769 524h1v1h-1zM769 526h1v1h-1zM769 528h1v1h-1zM769 530h1v1h-1zM769 532h1v1h-1zM769 534h1v1h-1zM769 536h1v1h-1zM769 538h1v1h-1zM769 540h1v1h-1zM769 542h1v1h-1zM769 544h1v1h-1zM769 546h1v1h-1zM769 548h1v1h-1zM769 550h1v1h-1zM769 552h1v1h-1zM769 554h1v1h-1zM769 556h1v1h-1zM769 558h1v1h-1zM769 560h1v1h-1zM769 562h1v1h-1zM769 564h1v1h-1zM769 566h1v1h-1zM769 568h1v1h-1zM769 570h1v1h-1zM769 572h1v1h-1zM769 574h1v1h-1zM769 576h1v1h-1zM769 578h1v1h-1zM769 580h1v1h-1zM769 582h1v1h-1zM769 584h1v1h-1zM769 586h1v1h-1zM769 588h1v1h-1zM769 590h1v1h-1zM769 592h1v1h-1zM769 594h1v1h-1zM769 596h1v1h-1zM769 598h1v1h-1zM769 600h1v1h-1zM769 602h1v1h-1zM769 604h1v1h-1zM769 606h1v1h-1zM769 608h1v1h-1zM769 610h1v1h-1zM769 612h1v1h-1zM769 614h1v1h-1zM769 616h1v1h-1zM769 618h1v1h-1zM769 620h1v1h-1zM769 622h1v1h-1zM769 624h1v1h-1zM769 626h1v1h-1zM769 628h1v1h-1zM769 630h1v1h-1zM769 632h1v1h-1zM769 634h1v1h-1zM769 636h1v1h-1zM769 638h1v1h-1zM769 640h1v1h-1zM769 642h1v1h-1zM769 644h1v1h-1zM769 646h1v1h-1zM769 648h1v1h-1zM769 650h1v1h-1zM769 652h1v1h-1zM769 654h1v1h-1zM769 656h1v1h-1zM769 658h1v1h-1zM769 660h1v1h-1zM769 662h1v1h-1zM769 664h1v1h-1zM769 666h1v1h-1zM769 668h1v1h-1zM769 670h1v1h-1zM769 672h1v1h-1zM769 674h1v1h-1zM769 676h1v1h-1zM769 678h1v1h-1zM769 680h1v1h-1zM769 682h1v1h-1zM769 684h1v1h-1zM769 686h1v1h-1zM769 688h1v1h-1zM769 690h1v1h-1zM769 692h1v1h-1zM769 694h1v1h-1zM769 696h1v1h-1zM769 698h1v1h-1zM769 700h1v1h-1zM769 702h1v1h-1zM769 704h1v1h-1zM769 706h1v1h-1zM769 708h1v1h-1zM769 710h1v1h-1zM769 712h1v1h-1zM769 714h1v1h-1zM769 716h1v1h-1zM769 718h1v1h-1zM769 720h1v1h-1zM894 40h1v1h-1zM894 42h1v1h-1zM894 44h1v1h-1zM894 46h1v1h-1zM894 48h1v1h-1zM894 50h1v1h-1zM894 52h1v1h-1zM894 54h1v1h-1zM894 56h1v1h-1zM894 58h1v1h-1zM894 60h1v1h-1zM894 62h1v1h-1zM894 64h1v1h-1zM894 66h1v1h-1zM894 68h1v1h-1zM894 70h1v1h-1zM894 72h1v1h-1zM894 74h1v1h-1zM894 76h1v1h-1zM894 78h1v1h-1zM894 80h1v1h-1zM894 82h1v1h-1zM894 84h1v1h-1zM894 86h1v1h-1zM894 88h1v1h-1zM894 90h1v1h-1zM894 92h1v1h-1zM894 94h1v1h-1zM894 96h1v1h-1zM894 98h1v1h-1zM894 100h1v1h-1zM894 102h1v1h-1zM894 104h1v1h-1zM894 106h1v1h-1zM894 108h1v1h-1zM894 110h1v1h-1zM894 112h1v1h-1zM894 114h1v1h-1zM894 116h1v1h-1zM894 118h1v1h-1zM894 120h1v1h-1zM894 122h1v1h-1zM894 124h1v1h-1zM894 126h1v1h-1zM894 128h1v1h-1zM894 130h1v1h-1zM894 132h1v1h-1zM894 134h1v1h-1zM894 136h1v1h-1zM894 138h1v1h-1zM894 140h1v1h-1zM894 142h1v1h-1zM894 144h1v1h-1zM894 146h1v1h-1zM894 148h1v1h-1zM894 150h1v1h-1zM894 152h1v1h-1zM894 154h1v1h-1zM894 156h1v1h-1zM894 158h1v1h-1zM894 160h1v1h-1zM894 162h1v1h-1zM894 164h1v1h-1zM894 166h1v1h-1zM894 168h1v1h-1zM894 170h1v1h-1zM894 172h1v1h-1zM894 174h1v1h-1zM894 176h1v1h-1zM894 178h1v1h-1zM894 180h1v1h-1zM894 182h1v1h-1zM894 184h1v1h-1zM894 186h1v1h-1zM894 188h1v1h-1zM894 190h1v1h-1zM894 192h1v1h-1zM894 194h1v1h-1zM894 196h1v1h-1zM894 198h1v1h-1zM894 200h1v1h-1zM894 202h1v1h-1zM894 204h1v1h-1zM894 206h1v1h-1zM894 208h1v1h-1zM894 210h1v1h-1zM894 212h1v1h-1zM894 214h1v1h-1zM894 216h1v1h-1zM894 218h1v1h-1zM894 220h1v1h-1zM894 222h1v1h-1zM894 224h1v1h-1zM894 226h1v1h-1zM894 228h1v1h-1zM894 230h1v1h-1zM894 232h1v1h-1zM894 234h1v1h-1zM894 236h1v1h-1zM894 238h1v1h-1zM894 240h1v1h-1zM894 242h1v1h-1zM894 244h1v1h-1zM894 246h1v1h-1zM894 248h1v1h-1zM894 250h1v1h-1zM894 252h1v1h-1zM894 254h1v1h-1zM894 256h1v1h-1zM894 258h1v1h-1zM894 260h1v1h-1zM894 262h1v1h-1zM894 264h1v1h-1zM894 266h1v1h-1zM894 268h1v1h-1zM894 270h1v1h-1zM894 272h1v1h-1zM894 274h1v1h-1zM894 276h1v1h-1zM894 278h1v1h-1zM894 280h1v1h-1zM894 282h1v1h-1zM894 284h1v1h-1zM894 286h1v1h-1zM894 288h1v1h-1zM894 290h1v1h-1zM894 292h1v1h-1zM894 294h1v1h-1zM894 296h1v1h-1zM894 298h1v1h-1zM894 300h1v1h-1zM894 302h1v1h-1zM894 304h1v1h-1zM894 306h1v1h-1zM894 308h1v1h-1zM894 310h1v1h-1zM894 312h1v1h-1zM894 314h1v1h-1zM894 316h1v1h-1zM894 318h1v1h-1zM894 320h1v1h-1zM894 322h1v1h-1zM894 324h1v1h-1zM894 326h1v1h-1zM894 328h1v1h-1zM894 330h1v1h-1zM894 332h1v1h-1zM894 334h1v1h-1zM894 336h1v1h-1zM894 338h1v1h-1zM894 340h1v1h-1zM894 342h1v1h-1zM894 344h1v1h-1zM894 346h1v1h-1zM894 348h1v1h-1zM894 350h1v1h-1zM894 352h1v1h-1zM894 354h1v1h-1zM894 356h1v1h-1zM894 358h1v1h-1zM894 360h1v1h-1zM894 362h1v1h-1zM894 364h1v1h-1zM894 366h1v1h-1zM894 368h1v1h-1zM894 370h1v1h-1zM894 372h1v1h-1zM894 374h1v1h-1zM894 376h1v1h-1zM894 378h1v1h-1zM894 380h1v1h-1zM894 382h1v1h-1zM894 384h1v1h-1zM894 386h1v1h-1zM894 388h1v1h-1zM894 390h1v1h-1zM894 392h1v1h-1zM894 394h1v1h-1zM894 396h1v1h-1zM894 398h1v1h-1zM894 400h1v1h-1zM894 402h1v1h-1zM894 404h1v1h-1zM894 406h1v1h-1zM894 408h1v1h-1zM894 410h1v1h-1zM894 412h1v1h-1zM894 414h1v1h-1zM894 416h1v1h-1zM894 418h1v1h-1zM894 420h1v1h-1zM894 422h1v1h-1zM894 424h1v1h-1zM894 426h1v1h-1zM894 428h1v1h-1zM894 430h1v1h-1zM894 432h1v1h-1zM894 434h1v1h-1zM894 436h1v1h-1zM894 438h1v1h-1zM894 440h1v1h-1zM894 442h1v1h-1zM894 444h1v1h-1zM894 446h1v1h-1zM894 448h1v1h-1zM894 450h1v1h-1zM894 452h1v1h-1zM894 454h1v1h-1zM894 456h1v1h-1zM894 458h1v1h-1zM894 460h1v1h-1zM894 462h1v1h-1zM894 464h1v1h-1zM894 466h1v1h-1zM894 468h1v1h-1zM894 470h1v1h-1zM894 472h1v1h-1zM894 474h1v1h-1zM894 476h1v1h-1zM894 478h1v1h-1zM894 480h1v1h-1zM894 482h1v1h-1zM894 484h1v1h-1zM894 486h1v1h-1zM894 488h1v1h-1zM894 490h1v1h-1zM894 492h1v1h-1zM894 494h1v1h-1zM894 496h1v1h-1zM894 498h1v1h-1zM894 500h1v1h-1zM894 502h1v1h-1zM894 504h1v1h-1zM894 506h1v1h-1zM894 508h1v1h-1zM894 510h1v1h-1zM894 512h1v1h-1zM894 514h1v1h-1zM894 516h1v1h-1zM894 518h1v1h-1zM894 520h1v1h-1zM894 522h1v1h-1zM894 524h1v1h-1zM894 526h1v1h-1zM894 528h1v1h-1zM894 530h1v1h-1zM894 532h1v1h-1zM894 534h1v1h-1zM894 536h1v1h-1zM894 538h1v1h-1zM894 540h1v1h-1zM894 542h1v1h-1zM894 544h1v1h-1zM894 546h1v1h-1zM894 548h1v1h-1zM894 550h1v1h-1zM894 552h1v1h-1zM894 554h1v1h-1zM894 556h1v1h-1zM894 558h1v1h-1zM894 560h1v1h-1zM894 562h1v1h-1zM894 564h1v1h-1zM894 566h1v1h-1zM894 568h1v1h-1zM894 570h1v1h-1zM894 572h1v1h-1zM894 574h1v1h-1zM894 576h1v1h-1zM894 578h1v1h-1zM894 580h1v1h-1zM894 582h1v1h-1zM894 584h1v1h-1zM894 586h1v1h-1zM894 588h1v1h-1zM894 590h1v1h-1zM894 592h1v1h-1zM894 594h1v1h-1zM894 596h1v1h-1zM894 598h1v1h-1zM894 600h1v1h-1zM894 602h1v1h-1zM894 604h1v1h-1zM894 606h1v1h-1zM894 608h1v1h-1zM894 610h1v1h-1zM894 612h1v1h-1zM894 614h1v1h-1zM894 616h1v1h-1zM894 618h1v1h-1zM894 620h1v1h-1zM894 622h1v1h-1zM894 624h1v1h-1zM894 626h1v1h-1zM894 628h1v1h-1zM894 630h1v1h-1zM894 632h1v1h-1zM894 634h1v1h-1zM894 636h1v1h-1zM894 638h1v1h-1zM894 640h1v1h-1zM894 642h1v1h-1zM894 644h1v1h-1zM894 646h1v1h-1zM894 648h1v1h-1zM894 650h1v1h-1zM894 652h1v1h-1zM894 654h1v1h-1zM894 656h1v1h-1zM894 658h1v1h-1zM894 660h1v1h-1zM894 662h1v1h-1zM894 664h1v1h-1zM894 666h1v1h-1zM894 668h1v1h-1zM894 670h1v1h-1zM894 672h1v1h-1zM894 674h1v1h-1zM894 676h1v1h-1zM894 678h1v1h-1zM894 680h1v1h-1zM894 682h1v1h-1zM894 684h1v1h-1zM894 686h1v1h-1zM894 688h1v1h-1zM894 690h1v1h-1zM894 692h1v1h-1zM894 694h1v1h-1zM894 696h1v1h-1zM894 698h1v1h-1zM894 700h1v1h-1zM894 702h1v1h-1zM894 704h1v1h-1zM894 706h1v1h-1zM894 708h1v1h-1zM894 710h1v1h-1zM894 712h1v1h-1zM894 714h1v1h-1zM894 716h1v1h-1zM894 718h1v1h-1zM894 720h1v1h-1zM1019 40h1v1h-1zM1019 42h1v1h-1zM1019 44h1v1h-1zM1019 46h1v1h-1zM1019 48h1v1h-1zM1019 50h1v1h-1zM1019 52h1v1h-1zM1019 54h1v1h-1zM1019 56h1v1h-1zM1019 58h1v1h-1zM1019 60h1v1h-1zM1019 62h1v1h-1zM1019 64h1v1h-1zM1019 66h1v1h-1zM1019 68h1v1h-1zM1019 70h1v1h-1zM1019 72h1v1h-1zM1019 74h1v1h-1zM1019 76h1v1h-1zM1019 78h1v1h-1zM1019 80h1v1h-1zM1019 82h1v1h-1zM1019 84h1v1h-1zM1019 86h1v1h-1zM1019 88h1v1h-1zM1019 90h1v1h-1zM1019 92h1v1h-1zM1019 94h1v1h-1zM1019 96h1v1h-1zM1019 98h1v1h-1zM1019 100h1v1h-1zM1019 102h1v1h-1zM1019 104h1v1h-1zM1019 106h1v1h-1zM1019 108h1v1h-1zM1019 110h1v1h-1zM1019 112h1v1h-1zM1019 114h1v1h-1zM1019 116h1v1h-1zM1019 118h1v1h-1zM1019 120h1v1h-1zM1019 122h1v1h-1zM1019 124h1v1h-1zM1019 126h1v1h-1zM1019 128h1v1h-1zM1019 130h1v1h-1zM1019 132h1v1h-1zM1019 134h1v1h-1zM1019 136h1v1h-1zM1019 138h1v1h-1zM1019 140h1v1h-1zM1019 142h1v1h-1zM1019 144h1v1h-1zM1019 146h1v1h-1zM1019 148h1v1h-1zM1019 150h1v1h-1zM1019 152h1v1h-1zM1019 154h1v1h-1zM1019 156h1v1h-1zM1019 158h1v1h-1zM1019 160h1v1h-1zM1019 162h1v1h-1zM1019 164h1v1h-1zM1019 166h1v1h-1zM1019 168h1v1h-1zM1019 170h1v1h-1zM1019 172h1v1h-1zM1019 174h1v1h-1zM1019 176h1v1h-1zM1019 178h1v1h-1zM1019 180h1v1h-1zM1019 182h1v1h-1zM1019 184h1v1h-1zM1019 186h1v1h-1zM1019 188h1v1h-1zM1019 190h1v1h-1zM1019 192h1v1h-1zM1019 194h1v1h-1zM1019 196h1v1h-1zM1019 198h1v1h-1zM1019 200h1v1h-1zM1019 202h1v1h-1zM1019 204h1v1h-1zM1019 206h1v1h-1zM1019 208h1v1h-1zM1019 210h1v1h-1zM1019 212h1v1h-1zM1019 214h1v1h-1zM1019 216h1v1h-1zM1019 218h1v1h-1zM1019 220h1v1h-1zM1019 222h1v1h-1zM1019 224h1v1h-1zM1019 226h1v1h-1zM1019 228h1v1h-1zM1019 230h1v1h-1zM1019 232h1v1h-1zM1019 234h1v1h-1zM1019 236h1v1h-1zM1019 238h1v1h-1zM1019 240h1v1h-1zM1019 242h1v1h-1zM1019 244h1v1h-1zM1019 246h1v1h-1zM1019 248h1v1h-1zM1019 250h1v1h-1zM1019 252h1v1h-1zM1019 254h1v1h-1zM1019 256h1v1h-1zM1019 258h1v1h-1zM1019 260h1v1h-1zM1019 262h1v1h-1zM1019 264h1v1h-1zM1019 266h1v1h-1zM1019 268h1v1h-1zM1019 270h1v1h-1zM1019 272h1v1h-1zM1019 274h1v1h-1zM1019 276h1v1h-1zM1019 278h1v1h-1zM1019 280h1v1h-1zM1019 282h1v1h-1zM1019 284h1v1h-1zM1019 286h1v1h-1zM1019 288h1v1h-1zM1019 290h1v1h-1zM1019 292h1v1h-1zM1019 294h1v1h-1zM1019 296h1v1h-1zM1019 298h1v1h-1zM1019 300h1v1h-1zM1019 302h1v1h-1zM1019 304h1v1h-1zM1019 306h1v1h-1zM1019 308h1v1h-1zM1019 310h1v1h-1zM1019 312h1v1h-1zM1019 314h1v1h-1zM1019 316h1v1h-1zM1019 318h1v1h-1zM1019 320h1v1h-1zM1019 322h1v1h-1zM1019 324h1v1h-1zM1019 326h1v1h-1zM1019 328h1v1h-1zM1019 330h1v1h-1zM1019 332h1v1h-1zM1019 334h1v1h-1zM1019 336h1v1h-1zM1019 338h1v1h-1zM1019 340h1v1h-1zM1019 342h1v1h-1zM1019 344h1v1h-1zM1019 346h1v1h-1zM1019 348h1v1h-1zM1019 350h1v1h-1zM1019 352h1v1h-1zM1019 354h1v1h-1zM1019 356h1v1h-1zM1019 358h1v1h-1zM1019 360h1v1h-1zM1019 362h1v1h-1zM1019 364h1v1h-1zM1019 366h1v1h-1zM1019 368h1v1h-1zM1019 370h1v1h-1zM1019 372h1v1h-1zM1019 374h1v1h-1zM1019 376h1v1h-1zM1019 378h1v1h-1zM1019 380h1v1h-1zM1019 382h1v1h-1zM1019 384h1v1h-1zM1019 386h1v1h-1zM1019 388h1v1h-1zM1019 390h1v1h-1zM1019 392h1v1h-1zM1019 394h1v1h-1zM1019 396h1v1h-1zM1019 398h1v1h-1zM1019 400h1v1h-1zM1019 402h1v1h-1zM1019 404h1v1h-1zM1019 406h1v1h-1zM1019 408h1v1h-1zM1019 410h1v1h-1zM1019 412h1v1h-1zM1019 414h1v1h-1zM1019 416h1v1h-1zM1019 418h1v1h-1zM1019 420h1v1h-1zM1019 422h1v1h-1zM1019 424h1v1h-1zM1019 426h1v1h-1zM1019 428h1v1h-1zM1019 430h1v1h-1zM1019 432h1v1h-1zM1019 434h1v1h-1zM1019 436h1v1h-1zM1019 438h1v1h-1zM1019 440h1v1h-1zM1019 442h1v1h-1zM1019 444h1v1h-1zM1019 446h1v1h-1zM1019 448h1v1h-1zM1019 450h1v1h-1zM1019 452h1v1h-1zM1019 454h1v1h-1zM1019 456h1v1h-1zM1019 458h1v1h-1zM1019 460h1v1h-1zM1019 462h1v1h-1zM1019 464h1v1h-1zM1019 466h1v1h-1zM1019 468h1v1h-1zM1019 470h1v1h-1zM1019 472h1v1h-1zM1019 474h1v1h-1zM1019 476h1v1h-1zM1019 478h1v1h-1zM1019 480h1v1h-1zM1019 482h1v1h-1zM1019 484h1v1h-1zM1019 486h1v1h-1zM1019 488h1v1h-1zM1019 490h1v1h-1zM1019 492h1v1h-1zM1019 494h1v1h-1zM1019 496h1v1h-1zM1019 498h1v1h-1zM1019 500h1v1h-1zM1019 502h1v1h-1zM1019 504h1v1h-1zM1019 506h1v1h-1zM1019 508h1v1h-1zM1019 510h1v1h-1zM1019 512h1v1h-1zM1019 514h1v1h-1zM1019 516h1v1h-1zM1019 518h1v1h-1zM1019 520h1v1h-1zM1019 522h1v1h-1zM1019 524h1v1h-1zM1019 526h1v1h-1zM1019 528h1v1h-1zM1019 530h1v1h-1zM1019 532h1v1h-1zM1019 534h1v1h-1zM1019 536h1v1h-1zM1019 538h1v1h-1zM1019 540h1v1h-1zM1019 542h1v1h-1zM1019 544h1v1h-1zM1019 546h1v1h-1zM1019 548h1v1h-1zM1019 550h1v1h-1zM1019 552h1v1h-1zM1019 554h1v1h-1zM1019 556h1v1h-1zM1019 558h1v1h-1zM1019 560h1v1h-1zM1019 562h1v1h-1zM1019 564h1v1h-1zM1019 566h1v1h-1zM1019 568h1v1h-1zM1019 570h1v1h-1zM1019 572h1v1h-1zM1019 574h1v1h-1zM1019 576h1v1h-1zM1019 578h1v1h-1zM1019 580h1v1h-1zM1019 582h1v1h-1zM1019 584h1v1h-1zM1019 586h1v1h-1zM1019 588h1v1h-1zM1019 590h1v1h-1zM1019 592h1v1h-1zM1019 594h1v1h-1zM1019 596h1v1h-1zM1019 598h1v1h-1zM1019 600h1v1h-1zM1019 602h1v1h-1zM1019 604h1v1h-1zM1019 606h1v1h-1zM1019 608h1v1h-1zM1019 610h1v1h-1zM1019 612h1v1h-1zM1019 614h1v1h-1zM1019 616h1v1h-1zM1019 618h1v1h-1zM1019 620h1v1h-1zM1019 622h1v1h-1zM1019 624h1v1h-1zM1019 626h1v1h-1zM1019 628h1v1h-1zM1019 630h1v1h-1zM1019 632h1v1h-1zM1019 634h1v1h-1zM1019 636h1v1h-1zM1019 638h1v1h-1zM1019 640h1v1h-1zM1019 642h1v1h-1zM1019 644h1v1h-1zM1019 646h1v1h-1zM1019 648h1v1h-1zM1019 650h1v1h-1zM1019 652h1v1h-1zM1019 654h1v1h-1zM1019 656h1v1h-1zM1019 658h1v1h-1zM1019 660h1v1h-1zM1019 662h1v1h-1zM1019 664h1v1h-1zM1019 666h1v1h-1zM1019 668h1v1h-1zM1019 670h1v1h-1zM1019 672h1v1h-1zM1019 674h1v1h-1zM1019 676h1v1h-1zM1019 678h1v1h-1zM1019 680h1v1h-1zM1019 682h1v1h-1zM1019 684h1v1h-1zM1019 686h1v1h-1zM1019 688h1v1h-1zM1019 690h1v1h-1zM1019 692h1v1h-1zM1019 694h1v1h-1zM1019 696h1v1h-1zM1019 698h1v1h-1zM1019 700h1v1h-1zM1019 702h1v1h-1zM1019 704h1v1h-1zM1019 706h1v1h-1zM1019 708h1v1h-1zM1019 710h1v1h-1zM1019 712h1v1h-1zM1019 714h1v1h-1zM1019 716h1v1h-1zM1019 718h1v1h-1zM1019 720h1v1h-1zM1145 40h1v1h-1zM1145 42h1v1h-1zM1145 44h1v1h-1zM1145 46h1v1h-1zM1145 48h1v1h-1zM1145 50h1v1h-1zM1145 52h1v1h-1zM1145 54h1v1h-1zM1145 56h1v1h-1zM1145 58h1v1h-1zM1145 60h1v1h-1zM1145 62h1v1h-1zM1145 64h1v1h-1zM1145 66h1v1h-1zM1145 68h1v1h-1zM1145 70h1v1h-1zM1145 72h1v1h-1zM1145 74h1v1h-1zM1145 76h1v1h-1zM1145 78h1v1h-1zM1145 80h1v1h-1zM1145 82h1v1h-1zM1145 84h1v1h-1zM1145 86h1v1h-1zM1145 88h1v1h-1zM1145 90h1v1h-1zM1145 92h1v1h-1zM1145 94h1v1h-1zM1145 96h1v1h-1zM1145 98h1v1h-1zM1145 100h1v1h-1zM1145 102h1v1h-1zM1145 104h1v1h-1zM1145 106h1v1h-1zM1145 108h1v1h-1zM1145 110h1v1h-1zM1145 112h1v1h-1zM1145 114h1v1h-1zM1145 116h1v1h-1zM1145 118h1v1h-1zM1145 120h1v1h-1zM1145 122h1v1h-1zM1145 124h1v1h-1zM1145 126h1v1h-1zM1145 128h1v1h-1zM1145 130h1v1h-1zM1145 132h1v1h-1zM1145 134h1v1h-1zM1145 136h1v1h-1zM1145 138h1v1h-1zM1145 140h1v1h-1zM1145 142h1v1h-1zM1145 144h1v1h-1zM1145 146h1v1h-1zM1145 148h1v1h-1zM1145 150h1v1h-1zM1145 152h1v1h-1zM1145 154h1v1h-1zM1145 156h1v1h-1zM1145 158h1v1h-1zM1145 160h1v1h-1zM1145 162h1v1h-1zM1145 164h1v1h-1zM1145 166h1v1h-1zM1145 168h1v1h-1zM1145 170h1v1h-1zM1145 172h1v1h-1zM1145 174h1v1h-1zM1145 176h1v1h-1zM1145 178h1v1h-1zM1145 180h1v1h-1zM1145 182h1v1h-1zM1145 184h1v1h-1zM1145 186h1v1h-1zM1145 188h1v1h-1zM1145 190h1v1h-1zM1145 192h1v1h-1zM1145 194h1v1h-1zM1145 196h1v1h-1zM1145 198h1v1h-1zM1145 200h1v1h-1zM1145 202h1v1h-1zM1145 204h1v1h-1zM1145 206h1v1h-1zM1145 208h1v1h-1zM1145 210h1v1h-1zM1145 212h1v1h-1zM1145 214h1v1h-1zM1145 216h1v1h-1zM1145 218h1v1h-1zM1145 220h1v1h-1zM1145 222h1v1h-1zM1145 224h1v1h-1zM1145 226h1v1h-1zM1145 228h1v1h-1zM1145 230h1v1h-1zM1145 232h1v1h-1zM1145 234h1v1h-1zM1145 236h1v1h-1zM1145 238h1v1h-1zM1145 240h1v1h-1zM1145 242h1v1h-1zM1145 244h1v1h-1zM1145 246h1v1h-1zM1145 248h1v1h-1zM1145 250h1v1h-1zM1145 252h1v1h-1zM1145 254h1v1h-1zM1145 256h1v1h-1zM1145 258h1v1h-1zM1145 260h1v1h-1zM1145 262h1v1h-1zM1145 264h1v1h-1zM1145 266h1v1h-1zM1145 268h1v1h-1zM1145 270h1v1h-1zM1145 272h1v1h-1zM1145 274h1v1h-1zM1145 276h1v1h-1zM1145 278h1v1h-1zM1145 280h1v1h-1zM1145 282h1v1h-1zM1145 284h1v1h-1zM1145 286h1v1h-1zM1145 288h1v1h-1zM1145 290h1v1h-1zM1145 292h1v1h-1zM1145 294h1v1h-1zM1145 296h1v1h-1zM1145 298h1v1h-1zM1145 300h1v1h-1zM1145 302h1v1h-1zM1145 304h1v1h-1zM1145 306h1v1h-1zM1145 308h1v1h-1zM1145 310h1v1h-1zM1145 312h1v1h-1zM1145 314h1v1h-1zM1145 316h1v1h-1zM1145 318h1v1h-1zM1145 320h1v1h-1zM1145 322h1v1h-1zM1145 324h1v1h-1zM1145 326h1v1h-1zM1145 328h1v1h-1zM1145 330h1v1h-1zM1145 332h1v1h-1zM1145 334h1v1h-1zM1145 336h1v1h-1zM1145 338h1v1h-1zM1145 340h1v1h-1zM1145 342h1v1h-1zM1145 344h1v1h-1zM1145 346h1v1h-1zM1145 348h1v1h-1zM1145 350h1v1h-1zM1145 352h1v1h-1zM1145 354h1v1h-1zM1145 356h1v1h-1zM1145 358h1v1h-1zM1145 360h1v1h-1zM1145 362h1v1h-1zM1145 364h1v1h-1zM1145 366h1v1h-1zM1145 368h1v1h-1zM1145 370h1v1h-1zM1145 372h1v1h-1zM1145 374h1v1h-1zM1145 376h1v1h-1zM1145 378h1v1h-1zM1145 380h1v1h-1zM1145 382h1v1h-1zM1145 384h1v1h-1zM1145 386h1v1h-1zM1145 388h1v1h-1zM1145 390h1v1h-1zM1145 392h1v1h-1zM1145 394h1v1h-1zM1145 396h1v1h-1zM1145 398h1v1h-1zM1145 400h1v1h-1zM1145 402h1v1h-1zM1145 404h1v1h-1zM1145 406h1v1h-1zM1145 408h1v1h-1zM1145 410h1v1h-1zM1145 412h1v1h-1zM1145 414h1v1h-1zM1145 416h1v1h-1zM1145 418h1v1h-1zM1145 420h1v1h-1zM1145 422h1v1h-1zM1145 424h1v1h-1zM1145 426h1v1h-1zM1145 428h1v1h-1zM1145 430h1v1h-1zM1145 432h1v1h-1zM1145 434h1v1h-1zM1145 436h1v1h-1zM1145 438h1v1h-1zM1145 440h1v1h-1zM1145 442h1v1h-1zM1145 444h1v1h-1zM1145 446h1v1h-1zM1145 448h1v1h-1zM1145 450h1v1h-1zM1145 452h1v1h-1zM1145 454h1v1h-1zM1145 456h1v1h-1zM1145 458h1v1h-1zM1145 460h1v1h-1zM1145 462h1v1h-1zM1145 464h1v1h-1zM1145 466h1v1h-1zM1145 468h1v1h-1zM1145 470h1v1h-1zM1145 472h1v1h-1zM1145 474h1v1h-1zM1145 476h1v1h-1zM1145 478h1v1h-1zM1145 480h1v1h-1zM1145 482h1v1h-1zM1145 484h1v1h-1zM1145 486h1v1h-1zM1145 488h1v1h-1zM1145 490h1v1h-1zM1145 492h1v1h-1zM1145 494h1v1h-1zM1145 496h1v1h-1zM1145 498h1v1h-1zM1145 500h1v1h-1zM1145 502h1v1h-1zM1145 504h1v1h-1zM1145 506h1v1h-1zM1145 508h1v1h-1zM1145 510h1v1h-1zM1145 512h1v1h-1zM1145 514h1v1h-1zM1145 516h1v1h-1zM1145 518h1v1h-1zM1145 520h1v1h-1zM1145 522h1v1h-1zM1145 524h1v1h-1zM1145 526h1v1h-1zM1145 528h1v1h-1zM1145 530h1v1h-1zM1145 532h1v1h-1zM1145 534h1v1h-1zM1145 536h1v1h-1zM1145 538h1v1h-1zM1145 540h1v1h-1zM1145 542h1v1h-1zM1145 544h1v1h-1zM1145 546h1v1h-1zM1145 548h1v1h-1zM1145 550h1v1h-1zM1145 552h1v1h-1zM1145 554h1v1h-1zM1145 556h1v1h-1zM1145 558h1v1h-1zM1145 560h1v1h-1zM1145 562h1v1h-1zM1145 564h1v1h-1zM1145 566h1v1h-1zM1145 568h1v1h-1zM1145 570h1v1h-1zM1145 572h1v1h-1zM1145 574h1v1h-1zM1145 576h1v1h-1zM1145 578h1v1h-1zM1145 580h1v1h-1zM1145 582h1v1h-1zM1145 584h1v1h-1zM1145 586h1v1h-1zM1145 588h1v1h-1zM1145 590h1v1h-1zM1145 592h1v1h-1zM1145 594h1v1h-1zM1145 596h1v1h-1zM1145 598h1v1h-1zM1145 600h1v1h-1zM1145 602h1v1h-1zM1145 604h1v1h-1zM1145 606h1v1h-1zM1145 608h1v1h-1zM1145 610h1v1h-1zM1145 612h1v1h-1zM1145 614h1v1h-1zM1145 616h1v1h-1zM1145 618h1v1h-1zM1145 620h1v1h-1zM1145 622h1v1h-1zM1145 624h1v1h-1zM1145 626h1v1h-1zM1145 628h1v1h-1zM1145 630h1v1h-1zM1145 632h1v1h-1zM1145 634h1v1h-1zM1145 636h1v1h-1zM1145 638h1v1h-1zM1145 640h1v1h-1zM1145 642h1v1h-1zM1145 644h1v1h-1zM1145 646h1v1h-1zM1145 648h1v1h-1zM1145 650h1v1h-1zM1145 652h1v1h-1zM1145 654h1v1h-1zM1145 656h1v1h-1zM1145 658h1v1h-1zM1145 660h1v1h-1zM1145 662h1v1h-1zM1145 664h1v1h-1zM1145 666h1v1h-1zM1145 668h1v1h-1zM1145 670h1v1h-1zM1145 672h1v1h-1zM1145 674h1v1h-1zM1145 676h1v1h-1zM1145 678h1v1h-1zM1145 680h1v1h-1zM1145 682h1v1h-1zM1145 684h1v1h-1zM1145 686h1v1h-1zM1145 688h1v1h-1zM1145 690h1v1h-1zM1145 692h1v1h-1zM1145 694h1v1h-1zM1145 696h1v1h-1zM1145 698h1v1h-1zM1145 700h1v1h-1zM1145 702h1v1h-1zM1145 704h1v1h-1zM1145 706h1v1h-1zM1145 708h1v1h-1zM1145 710h1v1h-1zM1145 712h1v1h-1zM1145 714h1v1h-1zM1145 716h1v1h-1zM1145 718h1v1h-1zM1145 720h1v1h-1zM19 124h1v1h-1zM21 124h1v1h-1zM23 124h1v1h-1zM25 124h1v1h-1zM27 124h1v1h-1zM29 124h1v1h-1zM31 124h1v1h-1zM33 124h1v1h-1zM35 124h1v1h-1zM37 124h1v1h-1zM39 124h1v1h-1zM41 124h1v1h-1zM43 124h1v1h-1zM45 124h1v1h-1zM47 124h1v1h-1zM49 124h1v1h-1zM51 124h1v1h-1zM53 124h1v1h-1zM55 124h1v1h-1zM57 124h1v1h-1zM59 124h1v1h-1zM61 124h1v1h-1zM63 124h1v1h-1zM65 124h1v1h-1zM67 124h1v1h-1zM69 124h1v1h-1zM71 124h1v1h-1zM73 124h1v1h-1zM75 124h1v1h-1zM77 124h1v1h-1zM79 124h1v1h-1zM81 124h1v1h-1zM83 124h1v1h-1zM85 124h1v1h-1zM87 124h1v1h-1zM89 124h1v1h-1zM91 124h1v1h-1zM93 124h1v1h-1zM95 124h1v1h-1zM97 124h1v1h-1zM99 124h1v1h-1zM101 124h1v1h-1zM103 124h1v1h-1zM105 124h1v1h-1zM107 124h1v1h-1zM109 124h1v1h-1zM111 124h1v1h-1zM113 124h1v1h-1zM115 124h1v1h-1zM117 124h1v1h-1zM119 124h1v1h-1zM121 124h1v1h-1zM123 124h1v1h-1zM125 124h1v1h-1zM127 124h1v1h-1zM129 124h1v1h-1zM131 124h1v1h-1zM133 124h1v1h-1zM135 124h1v1h-1zM137 124h1v1h-1zM139 124h1v1h-1zM141 124h1v1h-1zM143 124h1v1h-1zM145 124h1v1h-1zM147 124h1v1h-1zM149 124h1v1h-1zM151 124h1v1h-1zM153 124h1v1h-1zM155 124h1v1h-1zM157 124h1v1h-1zM159 124h1v1h-1zM161 124h1v1h-1zM163 124h1v1h-1zM165 124h1v1h-1zM167 124h1v1h-1zM169 124h1v1h-1zM171 124h1v1h-1zM173 124h1v1h-1zM175 124h1v1h-1zM177 124h1v1h-1zM179 124h1v1h-1zM181 124h1v1h-1zM183 124h1v1h-1zM185 124h1v1h-1zM187 124h1v1h-1zM189 124h1v1h-1zM191 124h1v1h-1zM193 124h1v1h-1zM195 124h1v1h-1zM197 124h1v1h-1zM199 124h1v1h-1zM201 124h1v1h-1zM203 124h1v1h-1zM205 124h1v1h-1zM207 124h1v1h-1zM209 124h1v1h-1zM211 124h1v1h-1zM213 124h1v1h-1zM215 124h1v1h-1zM217 124h1v1h-1zM219 124h1v1h-1zM221 124h1v1h-1zM223 124h1v1h-1zM225 124h1v1h-1zM227 124h1v1h-1zM229 124h1v1h-1zM231 124h1v1h-1zM233 124h1v1h-1zM235 124h1v1h-1zM237 124h1v1h-1zM239 124h1v1h-1zM241 124h1v1h-1zM243 124h1v1h-1zM245 124h1v1h-1zM247 124h1v1h-1zM249 124h1v1h-1zM251 124h1v1h-1zM253 124h1v1h-1zM255 124h1v1h-1zM257 124h1v1h-1zM259 124h1v1h-1zM261 124h1v1h-1zM263 124h1v1h-1zM265 124h1v1h-1zM267 124h1v1h-1zM269 124h1v1h-1zM271 124h1v1h-1zM273 124h1v1h-1zM275 124h1v1h-1zM277 124h1v1h-1zM279 124h1v1h-1zM281 124h1v1h-1zM283 124h1v1h-1zM285 124h1v1h-1zM287 124h1v1h-1zM289 124h1v1h-1zM291 124h1v1h-1zM293 124h1v1h-1zM295 124h1v1h-1zM297 124h1v1h-1zM299 124h1v1h-1zM301 124h1v1h-1zM303 124h1v1h-1zM305 124h1v1h-1zM307 124h1v1h-1zM309 124h1v1h-1zM311 124h1v1h-1zM313 124h1v1h-1zM315 124h1v1h-1zM317 124h1v1h-1zM319 124h1v1h-1zM321 124h1v1h-1zM323 124h1v1h-1zM325 124h1v1h-1zM327 124h1v1h-1zM329 124h1v1h-1zM331 124h1v1h-1zM333 124h1v1h-1zM335 124h1v1h-1zM337 124h1v1h-1zM339 124h1v1h-1zM341 124h1v1h-1zM343 124h1v1h-1zM345 124h1v1h-1zM347 124h1v1h-1zM349 124h1v1h-1zM351 124h1v1h-1zM353 124h1v1h-1zM355 124h1v1h-1zM357 124h1v1h-1zM359 124h1v1h-1zM361 124h1v1h-1zM363 124h1v1h-1zM365 124h1v1h-1zM367 124h1v1h-1zM369 124h1v1h-1zM371 124h1v1h-1zM373 124h1v1h-1zM375 124h1v1h-1zM377 124h1v1h-1zM379 124h1v1h-1zM381 124h1v1h-1zM383 124h1v1h-1zM385 124h1v1h-1zM387 124h1v1h-1zM389 124h1v1h-1zM391 124h1v1h-1zM393 124h1v1h-1zM395 124h1v1h-1zM397 124h1v1h-1zM399 124h1v1h-1zM401 124h1v1h-1zM403 124h1v1h-1zM405 124h1v1h-1zM407 124h1v1h-1zM409 124h1v1h-1zM411 124h1v1h-1zM413 124h1v1h-1zM415 124h1v1h-1zM417 124h1v1h-1zM419 124h1v1h-1zM421 124h1v1h-1zM423 124h1v1h-1zM425 124h1v1h-1zM427 124h1v1h-1zM429 124h1v1h-1zM431 124h1v1h-1zM433 124h1v1h-1zM435 124h1v1h-1zM437 124h1v1h-1zM439 124h1v1h-1zM441 124h1v1h-1zM443 124h1v1h-1zM445 124h1v1h-1zM447 124h1v1h-1zM449 124h1v1h-1zM451 124h1v1h-1zM453 124h1v1h-1zM455 124h1v1h-1zM457 124h1v1h-1zM459 124h1v1h-1zM461 124h1v1h-1zM463 124h1v1h-1zM465 124h1v1h-1zM467 124h1v1h-1zM469 124h1v1h-1zM471 124h1v1h-1zM473 124h1v1h-1zM475 124h1v1h-1zM477 124h1v1h-1zM479 124h1v1h-1zM481 124h1v1h-1zM483 124h1v1h-1zM485 124h1v1h-1zM487 124h1v1h-1zM489 124h1v1h-1zM491 124h1v1h-1zM493 124h1v1h-1zM495 124h1v1h-1zM497 124h1v1h-1zM499 124h1v1h-1zM501 124h1v1h-1zM503 124h1v1h-1zM505 124h1v1h-1zM507 124h1v1h-1zM509 124h1v1h-1zM511 124h1v1h-1zM513 124h1v1h-1zM515 124h1v1h-1zM517 124h1v1h-1zM519 124h1v1h-1zM521 124h1v1h-1zM523 124h1v1h-1zM525 124h1v1h-1zM527 124h1v1h-1zM529 124h1v1h-1zM531 124h1v1h-1zM533 124h1v1h-1zM535 124h1v1h-1zM537 124h1v1h-1zM539 124h1v1h-1zM541 124h1v1h-1zM543 124h1v1h-1zM545 124h1v1h-1zM547 124h1v1h-1zM549 124h1v1h-1zM551 124h1v1h-1zM553 124h1v1h-1zM555 124h1v1h-1zM557 124h1v1h-1zM559 124h1v1h-1zM561 124h1v1h-1zM563 124h1v1h-1zM565 124h1v1h-1zM567 124h1v1h-1zM569 124h1v1h-1zM571 124h1v1h-1zM573 124h1v1h-1zM575 124h1v1h-1zM577 124h1v1h-1zM579 124h1v1h-1zM581 124h1v1h-1zM583 124h1v1h-1zM585 124h1v1h-1zM587 124h1v1h-1zM589 124h1v1h-1zM591 124h1v1h-1zM593 124h1v1h-1zM595 124h1v1h-1zM597 124h1v1h-1zM599 124h1v1h-1zM601 124h1v1h-1zM603 124h1v1h-1zM605 124h1v1h-1zM607 124h1v1h-1zM609 124h1v1h-1zM611 124h1v1h-1zM613 124h1v1h-1zM615 124h1v1h-1zM617 124h1v1h-1zM619 124h1v1h-1zM621 124h1v1h-1zM623 124h1v1h-1zM625 124h1v1h-1zM627 124h1v1h-1zM629 124h1v1h-1zM631 124h1v1h-1zM633 124h1v1h-1zM635 124h1v1h-1zM637 124h1v1h-1zM639 124h1v1h-1zM641 124h1v1h-1zM643 124h1v1h-1zM645 124h1v1h-1zM647 124h1v1h-1zM649 124h1v1h-1zM651 124h1v1h-1zM653 124h1v1h-1zM655 124h1v1h-1zM657 124h1v1h-1zM659 124h1v1h-1zM661 124h1v1h-1zM663 124h1v1h-1zM665 124h1v1h-1zM667 124h1v1h-1zM669 124h1v1h-1zM671 124h1v1h-1zM673 124h1v1h-1zM675 124h1v1h-1zM677 124h1v1h-1zM679 124h1v1h-1zM681 124h1v1h-1zM683 124h1v1h-1zM685 124h1v1h-1zM687 124h1v1h-1zM689 124h1v1h-1zM691 124h1v1h-1zM693 124h1v1h-1zM695 124h1v1h-1zM697 124h1v1h-1zM699 124h1v1h-1zM701 124h1v1h-1zM703 124h1v1h-1zM705 124h1v1h-1zM707 124h1v1h-1zM709 124h1v1h-1zM711 124h1v1h-1zM713 124h1v1h-1zM715 124h1v1h-1zM717 124h1v1h-1zM719 124h1v1h-1zM721 124h1v1h-1zM723 124h1v1h-1zM725 124h1v1h-1zM727 124h1v1h-1zM729 124h1v1h-1zM731 124h1v1h-1zM733 124h1v1h-1zM735 124h1v1h-1zM737 124h1v1h-1zM739 124h1v1h-1zM741 124h1v1h-1zM743 124h1v1h-1zM745 124h1v1h-1zM747 124h1v1h-1zM749 124h1v1h-1zM751 124h1v1h-1zM753 124h1v1h-1zM755 124h1v1h-1zM757 124h1v1h-1zM759 124h1v1h-1zM761 124h1v1h-1zM763 124h1v1h-1zM765 124h1v1h-1zM767 124h1v1h-1zM769 124h1v1h-1zM771 124h1v1h-1zM773 124h1v1h-1zM775 124h1v1h-1zM777 124h1v1h-1zM779 124h1v1h-1zM781 124h1v1h-1zM783 124h1v1h-1zM785 124h1v1h-1zM787 124h1v1h-1zM789 124h1v1h-1zM791 124h1v1h-1zM793 124h1v1h-1zM795 124h1v1h-1zM797 124h1v1h-1zM799 124h1v1h-1zM801 124h1v1h-1zM803 124h1v1h-1zM805 124h1v1h-1zM807 124h1v1h-1zM809 124h1v1h-1zM811 124h1v1h-1zM813 124h1v1h-1zM815 124h1v1h-1zM817 124h1v1h-1zM819 124h1v1h-1zM821 124h1v1h-1zM823 124h1v1h-1zM825 124h1v1h-1zM827 124h1v1h-1zM829 124h1v1h-1zM831 124h1v1h-1zM833 124h1v1h-1zM835 124h1v1h-1zM837 124h1v1h-1zM839 124h1v1h-1zM841 124h1v1h-1zM843 124h1v1h-1zM845 124h1v1h-1zM847 124h1v1h-1zM849 124h1v1h-1zM851 124h1v1h-1zM853 124h1v1h-1zM855 124h1v1h-1zM857 124h1v1h-1zM859 124h1v1h-1zM861 124h1v1h-1zM863 124h1v1h-1zM865 124h1v1h-1zM867 124h1v1h-1zM869 124h1v1h-1zM871 124h1v1h-1zM873 124h1v1h-1zM875 124h1v1h-1zM877 124h1v1h-1zM879 124h1v1h-1zM881 124h1v1h-1zM883 124h1v1h-1zM885 124h1v1h-1zM887 124h1v1h-1zM889 124h1v1h-1zM891 124h1v1h-1zM893 124h1v1h-1zM895 124h1v1h-1zM897 124h1v1h-1zM899 124h1v1h-1zM901 124h1v1h-1zM903 124h1v1h-1zM905 124h1v1h-1zM907 124h1v1h-1zM909 124h1v1h-1zM911 124h1v1h-1zM913 124h1v1h-1zM915 124h1v1h-1zM917 124h1v1h-1zM919 124h1v1h-1zM921 124h1v1h-1zM923 124h1v1h-1zM925 124h1v1h-1zM927 124h1v1h-1zM929 124h1v1h-1zM931 124h1v1h-1zM933 124h1v1h-1zM935 124h1v1h-1zM937 124h1v1h-1zM939 124h1v1h-1zM941 124h1v1h-1zM943 124h1v1h-1zM945 124h1v1h-1zM947 124h1v1h-1zM949 124h1v1h-1zM951 124h1v1h-1zM953 124h1v1h-1zM955 124h1v1h-1zM957 124h1v1h-1zM959 124h1v1h-1zM961 124h1v1h-1zM963 124h1v1h-1zM965 124h1v1h-1zM967 124h1v1h-1zM969 124h1v1h-1zM971 124h1v1h-1zM973 124h1v1h-1zM975 124h1v1h-1zM977 124h1v1h-1zM979 124h1v1h-1zM981 124h1v1h-1zM983 124h1v1h-1zM985 124h1v1h-1zM987 124h1v1h-1zM989 124h1v1h-1zM991 124h1v1h-1zM993 124h1v1h-1zM995 124h1v1h-1zM997 124h1v1h-1zM999 124h1v1h-1zM1001 124h1v1h-1zM1003 124h1v1h-1zM1005 124h1v1h-1zM1007 124h1v1h-1zM1009 124h1v1h-1zM1011 124h1v1h-1zM1013 124h1v1h-1zM1015 124h1v1h-1zM1017 124h1v1h-1zM1019 124h1v1h-1zM1021 124h1v1h-1zM1023 124h1v1h-1zM1025 124h1v1h-1zM1027 124h1v1h-1zM1029 124h1v1h-1zM1031 124h1v1h-1zM1033 124h1v1h-1zM1035 124h1v1h-1zM1037 124h1v1h-1zM1039 124h1v1h-1zM1041 124h1v1h-1zM1043 124h1v1h-1zM1045 124h1v1h-1zM1047 124h1v1h-1zM1049 124h1v1h-1zM1051 124h1v1h-1zM1053 124h1v1h-1zM1055 124h1v1h-1zM1057 124h1v1h-1zM1059 124h1v1h-1zM1061 124h1v1h-1zM1063 124h1v1h-1zM1065 124h1v1h-1zM1067 124h1v1h-1zM1069 124h1v1h-1zM1071 124h1v1h-1zM1073 124h1v1h-1zM1075 124h1v1h-1zM1077 124h1v1h-1zM1079 124h1v1h-1zM1081 124h1v1h-1zM1083 124h1v1h-1zM1085 124h1v1h-1zM1087 124h1v1h-1zM1089 124h1v1h-1zM1091 124h1v1h-1zM1093 124h1v1h-1zM1095 124h1v1h-1zM1097 124h1v1h-1zM1099 124h1v1h-1zM1101 124h1v1h-1zM1103 124h1v1h-1zM1105 124h1v1h-1zM1107 124h1v1h-1zM1109 124h1v1h-1zM1111 124h1v1h-1zM1113 124h1v1h-1zM1115 124h1v1h-1zM1117 124h1v1h-1zM1119 124h1v1h-1zM1121 124h1v1h-1zM1123 124h1v1h-1zM1125 124h1v1h-1zM1127 124h1v1h-1zM1129 124h1v1h-1zM1131 124h1v1h-1zM1133 124h1v1h-1zM1135 124h1v1h-1zM1137 124h1v1h-1zM1139 124h1v1h-1zM1141 124h1v1h-1zM1143 124h1v1h-1zM1145 124h1v1h-1zM1147 124h1v1h-1zM1149 124h1v1h-1zM1151 124h1v1h-1zM1153 124h1v1h-1zM1155 124h1v1h-1zM1157 124h1v1h-1zM1159 124h1v1h-1zM1161 124h1v1h-1zM1163 124h1v1h-1zM1165 124h1v1h-1zM1167 124h1v1h-1zM1169 124h1v1h-1zM1171 124h1v1h-1zM1173 124h1v1h-1zM1175 124h1v1h-1zM1177 124h1v1h-1zM1179 124h1v1h-1zM1181 124h1v1h-1zM1183 124h1v1h-1zM1185 124h1v1h-1zM1187 124h1v1h-1zM1189 124h1v1h-1zM1191 124h1v1h-1zM1193 124h1v1h-1zM1195 124h1v1h-1zM1197 124h1v1h-1zM1199 124h1v1h-1zM1201 124h1v1h-1zM1203 124h1v1h-1zM1205 124h1v1h-1zM1207 124h1v1h-1zM1209 124h1v1h-1zM1211 124h1v1h-1zM1213 124h1v1h-1zM1215 124h1v1h-1zM1217 124h1v1h-1zM1219 124h1v1h-1zM1221 124h1v1h-1zM1223 124h1v1h-1zM1225 124h1v1h-1zM1227 124h1v1h-1zM1229 124h1v1h-1zM1231 124h1v1h-1zM1233 124h1v1h-1zM1235 124h1v1h-1zM1237 124h1v1h-1zM1239 124h1v1h-1zM1241 124h1v1h-1zM1243 124h1v1h-1zM1245 124h1v1h-1zM1247 124h1v1h-1zM1249 124h1v1h-1zM1251 124h1v1h-1zM1253 124h1v1h-1zM1255 124h1v1h-1zM1257 124h1v1h-1zM1259 124h1v1h-1zM1261 124h1v1h-1zM1263 124h1v1h-1zM1265 124h1v1h-1zM1267 124h1v1h-1zM19 209h1v1h-1zM21 209h1v1h-1zM23 209h1v1h-1zM25 209h1v1h-1zM27 209h1v1h-1zM29 209h1v1h-1zM31 209h1v1h-1zM33 209h1v1h-1zM35 209h1v1h-1zM37 209h1v1h-1zM39 209h1v1h-1zM41 209h1v1h-1zM43 209h1v1h-1zM45 209h1v1h-1zM47 209h1v1h-1zM49 209h1v1h-1zM51 209h1v1h-1zM53 209h1v1h-1zM55 209h1v1h-1zM57 209h1v1h-1zM59 209h1v1h-1zM61 209h1v1h-1zM63 209h1v1h-1zM65 209h1v1h-1zM67 209h1v1h-1zM69 209h1v1h-1zM71 209h1v1h-1zM73 209h1v1h-1zM75 209h1v1h-1zM77 209h1v1h-1zM79 209h1v1h-1zM81 209h1v1h-1zM83 209h1v1h-1zM85 209h1v1h-1zM87 209h1v1h-1zM89 209h1v1h-1zM91 209h1v1h-1zM93 209h1v1h-1zM95 209h1v1h-1zM97 209h1v1h-1zM99 209h1v1h-1zM101 209h1v1h-1zM103 209h1v1h-1zM105 209h1v1h-1zM107 209h1v1h-1zM109 209h1v1h-1zM111 209h1v1h-1zM113 209h1v1h-1zM115 209h1v1h-1zM117 209h1v1h-1zM119 209h1v1h-1zM121 209h1v1h-1zM123 209h1v1h-1zM125 209h1v1h-1zM127 209h1v1h-1zM129 209h1v1h-1zM131 209h1v1h-1zM133 209h1v1h-1zM135 209h1v1h-1zM137 209h1v1h-1zM139 209h1v1h-1zM141 209h1v1h-1zM143 209h1v1h-1zM145 209h1v1h-1zM147 209h1v1h-1zM149 209h1v1h-1zM151 209h1v1h-1zM153 209h1v1h-1zM155 209h1v1h-1zM157 209h1v1h-1zM159 209h1v1h-1zM161 209h1v1h-1zM163 209h1v1h-1zM165 209h1v1h-1zM167 209h1v1h-1zM169 209h1v1h-1zM171 209h1v1h-1zM173 209h1v1h-1zM175 209h1v1h-1zM177 209h1v1h-1zM179 209h1v1h-1zM181 209h1v1h-1zM183 209h1v1h-1zM185 209h1v1h-1zM187 209h1v1h-1zM189 209h1v1h-1zM191 209h1v1h-1zM193 209h1v1h-1zM195 209h1v1h-1zM197 209h1v1h-1zM199 209h1v1h-1zM201 209h1v1h-1zM203 209h1v1h-1zM205 209h1v1h-1zM207 209h1v1h-1zM209 209h1v1h-1zM211 209h1v1h-1zM213 209h1v1h-1zM215 209h1v1h-1zM217 209h1v1h-1zM219 209h1v1h-1zM221 209h1v1h-1zM223 209h1v1h-1zM225 209h1v1h-1zM227 209h1v1h-1zM229 209h1v1h-1zM231 209h1v1h-1zM233 209h1v1h-1zM235 209h1v1h-1zM237 209h1v1h-1zM239 209h1v1h-1zM241 209h1v1h-1zM243 209h1v1h-1zM245 209h1v1h-1zM247 209h1v1h-1zM249 209h1v1h-1zM251 209h1v1h-1zM253 209h1v1h-1zM255 209h1v1h-1zM257 209h1v1h-1zM259 209h1v1h-1zM261 209h1v1h-1zM263 209h1v1h-1zM265 209h1v1h-1zM267 209h1v1h-1zM269 209h1v1h-1zM271 209h1v1h-1zM273 209h1v1h-1zM275 209h1v1h-1zM277 209h1v1h-1zM279 209h1v1h-1zM281 209h1v1h-1zM283 209h1v1h-1zM285 209h1v1h-1zM287 209h1v1h-1zM289 209h1v1h-1zM291 209h1v1h-1zM293 209h1v1h-1zM295 209h1v1h-1zM297 209h1v1h-1zM299 209h1v1h-1zM301 209h1v1h-1zM303 209h1v1h-1zM305 209h1v1h-1zM307 209h1v1h-1zM309 209h1v1h-1zM311 209h1v1h-1zM313 209h1v1h-1zM315 209h1v1h-1zM317 209h1v1h-1zM319 209h1v1h-1zM321 209h1v1h-1zM323 209h1v1h-1zM325 209h1v1h-1zM327 209h1v1h-1zM329 209h1v1h-1zM331 209h1v1h-1zM333 209h1v1h-1zM335 209h1v1h-1zM337 209h1v1h-1zM339 209h1v1h-1zM341 209h1v1h-1zM343 209h1v1h-1zM345 209h1v1h-1zM347 209h1v1h-1zM349 209h1v1h-1zM351 209h1v1h-1zM353 209h1v1h-1zM355 209h1v1h-1zM357 209h1v1h-1zM359 209h1v1h-1zM361 209h1v1h-1zM363 209h1v1h-1zM365 209h1v1h-1zM367 209h1v1h-1zM369 209h1v1h-1zM371 209h1v1h-1zM373 209h1v1h-1zM375 209h1v1h-1zM377 209h1v1h-1zM379 209h1v1h-1zM381 209h1v1h-1zM383 209h1v1h-1zM385 209h1v1h-1zM387 209h1v1h-1zM389 209h1v1h-1zM391 209h1v1h-1zM393 209h1v1h-1zM395 209h1v1h-1zM397 209h1v1h-1zM399 209h1v1h-1zM401 209h1v1h-1zM403 209h1v1h-1zM405 209h1v1h-1zM407 209h1v1h-1zM409 209h1v1h-1zM411 209h1v1h-1zM413 209h1v1h-1zM415 209h1v1h-1zM417 209h1v1h-1zM419 209h1v1h-1zM421 209h1v1h-1zM423 209h1v1h-1zM425 209h1v1h-1zM427 209h1v1h-1zM429 209h1v1h-1zM431 209h1v1h-1zM433 209h1v1h-1zM435 209h1v1h-1zM437 209h1v1h-1zM439 209h1v1h-1zM441 209h1v1h-1zM443 209h1v1h-1zM445 209h1v1h-1zM447 209h1v1h-1zM449 209h1v1h-1zM451 209h1v1h-1zM453 209h1v1h-1zM455 209h1v1h-1zM457 209h1v1h-1zM459 209h1v1h-1zM461 209h1v1h-1zM463 209h1v1h-1zM465 209h1v1h-1zM467 209h1v1h-1zM469 209h1v1h-1zM471 209h1v1h-1zM473 209h1v1h-1zM475 209h1v1h-1zM477 209h1v1h-1zM479 209h1v1h-1zM481 209h1v1h-1zM483 209h1v1h-1zM485 209h1v1h-1zM487 209h1v1h-1zM489 209h1v1h-1zM491 209h1v1h-1zM493 209h1v1h-1zM495 209h1v1h-1zM497 209h1v1h-1zM499 209h1v1h-1zM501 209h1v1h-1zM503 209h1v1h-1zM505 209h1v1h-1zM507 209h1v1h-1zM509 209h1v1h-1zM511 209h1v1h-1zM513 209h1v1h-1zM515 209h1v1h-1zM517 209h1v1h-1zM519 209h1v1h-1zM521 209h1v1h-1zM523 209h1v1h-1zM525 209h1v1h-1zM527 209h1v1h-1zM529 209h1v1h-1zM531 209h1v1h-1zM533 209h1v1h-1zM535 209h1v1h-1zM537 209h1v1h-1zM539 209h1v1h-1zM541 209h1v1h-1zM543 209h1v1h-1zM545 209h1v1h-1zM547 209h1v1h-1zM549 209h1v1h-1zM551 209h1v1h-1zM553 209h1v1h-1zM555 209h1v1h-1zM557 209h1v1h-1zM559 209h1v1h-1zM561 209h1v1h-1zM563 209h1v1h-1zM565 209h1v1h-1zM567 209h1v1h-1zM569 209h1v1h-1zM571 209h1v1h-1zM573 209h1v1h-1zM575 209h1v1h-1zM577 209h1v1h-1zM579 209h1v1h-1zM581 209h1v1h-1zM583 209h1v1h-1zM585 209h1v1h-1zM587 209h1v1h-1zM589 209h1v1h-1zM591 209h1v1h-1zM593 209h1v1h-1zM595 209h1v1h-1zM597 209h1v1h-1zM599 209h1v1h-1zM601 209h1v1h-1zM603 209h1v1h-1zM605 209h1v1h-1zM607 209h1v1h-1zM609 209h1v1h-1zM611 209h1v1h-1zM613 209h1v1h-1zM615 209h1v1h-1zM617 209h1v1h-1zM619 209h1v1h-1zM621 209h1v1h-1zM623 209h1v1h-1zM625 209h1v1h-1zM627 209h1v1h-1zM629 209h1v1h-1zM631 209h1v1h-1zM633 209h1v1h-1zM635 209h1v1h-1zM637 209h1v1h-1zM639 209h1v1h-1zM641 209h1v1h-1zM643 209h1v1h-1zM645 209h1v1h-1zM647 209h1v1h-1zM649 209h1v1h-1zM651 209h1v1h-1zM653 209h1v1h-1zM655 209h1v1h-1zM657 209h1v1h-1zM659 209h1v1h-1zM661 209h1v1h-1zM663 209h1v1h-1zM665 209h1v1h-1zM667 209h1v1h-1zM669 209h1v1h-1zM671 209h1v1h-1zM673 209h1v1h-1zM675 209h1v1h-1zM677 209h1v1h-1zM679 209h1v1h-1zM681 209h1v1h-1zM683 209h1v1h-1zM685 209h1v1h-1zM687 209h1v1h-1zM689 209h1v1h-1zM691 209h1v1h-1zM693 209h1v1h-1zM695 209h1v1h-1zM697 209h1v1h-1zM699 209h1v1h-1zM701 209h1v1h-1zM703 209h1v1h-1zM705 209h1v1h-1zM707 209h1v1h-1zM709 209h1v1h-1zM711 209h1v1h-1zM713 209h1v1h-1zM715 209h1v1h-1zM717 209h1v1h-1zM719 209h1v1h-1zM721 209h1v1h-1zM723 209h1v1h-1zM725 209h1v1h-1zM727 209h1v1h-1zM729 209h1v1h-1zM731 209h1v1h-1zM733 209h1v1h-1zM735 209h1v1h-1zM737 209h1v1h-1zM739 209h1v1h-1zM741 209h1v1h-1zM743 209h1v1h-1zM745 209h1v1h-1zM747 209h1v1h-1zM749 209h1v1h-1zM751 209h1v1h-1zM753 209h1v1h-1zM755 209h1v1h-1zM757 209h1v1h-1zM759 209h1v1h-1zM761 209h1v1h-1zM763 209h1v1h-1zM765 209h1v1h-1zM767 209h1v1h-1zM769 209h1v1h-1zM771 209h1v1h-1zM773 209h1v1h-1zM775 209h1v1h-1zM777 209h1v1h-1zM779 209h1v1h-1zM781 209h1v1h-1zM783 209h1v1h-1zM785 209h1v1h-1zM787 209h1v1h-1zM789 209h1v1h-1zM791 209h1v1h-1zM793 209h1v1h-1zM795 209h1v1h-1zM797 209h1v1h-1zM799 209h1v1h-1zM801 209h1v1h-1zM803 209h1v1h-1zM805 209h1v1h-1zM807 209h1v1h-1zM809 209h1v1h-1zM811 209h1v1h-1zM813 209h1v1h-1zM815 209h1v1h-1zM817 209h1v1h-1zM819 209h1v1h-1zM821 209h1v1h-1zM823 209h1v1h-1zM825 209h1v1h-1zM827 209h1v1h-1zM829 209h1v1h-1zM831 209h1v1h-1zM833 209h1v1h-1zM835 209h1v1h-1zM837 209h1v1h-1zM839 209h1v1h-1zM841 209h1v1h-1zM843 209h1v1h-1zM845 209h1v1h-1zM847 209h1v1h-1zM849 209h1v1h-1zM851 209h1v1h-1zM853 209h1v1h-1zM855 209h1v1h-1zM857 209h1v1h-1zM859 209h1v1h-1zM861 209h1v1h-1zM863 209h1v1h-1zM865 209h1v1h-1zM867 209h1v1h-1zM869 209h1v1h-1zM871 209h1v1h-1zM873 209h1v1h-1zM875 209h1v1h-1zM877 209h1v1h-1zM879 209h1v1h-1zM881 209h1v1h-1zM883 209h1v1h-1zM885 209h1v1h-1zM887 209h1v1h-1zM889 209h1v1h-1zM891 209h1v1h-1zM893 209h1v1h-1zM895 209h1v1h-1zM897 209h1v1h-1zM899 209h1v1h-1zM901 209h1v1h-1zM903 209h1v1h-1zM905 209h1v1h-1zM907 209h1v1h-1zM909 209h1v1h-1zM911 209h1v1h-1zM913 209h1v1h-1zM915 209h1v1h-1zM917 209h1v1h-1zM919 209h1v1h-1zM921 209h1v1h-1zM923 209h1v1h-1zM925 209h1v1h-1zM927 209h1v1h-1zM929 209h1v1h-1zM931 209h1v1h-1zM933 209h1v1h-1zM935 209h1v1h-1zM937 209h1v1h-1zM939 209h1v1h-1zM941 209h1v1h-1zM943 209h1v1h-1zM945 209h1v1h-1zM947 209h1v1h-1zM949 209h1v1h-1zM951 209h1v1h-1zM953 209h1v1h-1zM955 209h1v1h-1zM957 209h1v1h-1zM959 209h1v1h-1zM961 209h1v1h-1zM963 209h1v1h-1zM965 209h1v1h-1zM967 209h1v1h-1zM969 209h1v1h-1zM971 209h1v1h-1zM973 209h1v1h-1zM975 209h1v1h-1zM977 209h1v1h-1zM979 209h1v1h-1zM981 209h1v1h-1zM983 209h1v1h-1zM985 209h1v1h-1zM987 209h1v1h-1zM989 209h1v1h-1zM991 209h1v1h-1zM993 209h1v1h-1zM995 209h1v1h-1zM997 209h1v1h-1zM999 209h1v1h-1zM1001 209h1v1h-1zM1003 209h1v1h-1zM1005 209h1v1h-1zM1007 209h1v1h-1zM1009 209h1v1h-1zM1011 209h1v1h-1zM1013 209h1v1h-1zM1015 209h1v1h-1zM1017 209h1v1h-1zM1019 209h1v1h-1zM1021 209h1v1h-1zM1023 209h1v1h-1zM1025 209h1v1h-1zM1027 209h1v1h-1zM1029 209h1v1h-1zM1031 209h1v1h-1zM1033 209h1v1h-1zM1035 209h1v1h-1zM1037 209h1v1h-1zM1039 209h1v1h-1zM1041 209h1v1h-1zM1043 209h1v1h-1zM1045 209h1v1h-1zM1047 209h1v1h-1zM1049 209h1v1h-1zM1051 209h1v1h-1zM1053 209h1v1h-1zM1055 209h1v1h-1zM1057 209h1v1h-1zM1059 209h1v1h-1zM1061 209h1v1h-1zM1063 209h1v1h-1zM1065 209h1v1h-1zM1067 209h1v1h-1zM1069 209h1v1h-1zM1071 209h1v1h-1zM1073 209h1v1h-1zM1075 209h1v1h-1zM1077 209h1v1h-1zM1079 209h1v1h-1zM1081 209h1v1h-1zM1083 209h1v1h-1zM1085 209h1v1h-1zM1087 209h1v1h-1zM1089 209h1v1h-1zM1091 209h1v1h-1zM1093 209h1v1h-1zM1095 209h1v1h-1zM1097 209h1v1h-1zM1099 209h1v1h-1zM1101 209h1v1h-1zM1103 209h1v1h-1zM1105 209h1v1h-1zM1107 209h1v1h-1zM1109 209h1v1h-1zM1111 209h1v1h-1zM1113 209h1v1h-1zM1115 209h1v1h-1zM1117 209h1v1h-1zM1119 209h1v1h-1zM1121 209h1v1h-1zM1123 209h1v1h-1zM1125 209h1v1h-1zM1127 209h1v1h-1zM1129 209h1v1h-1zM1131 209h1v1h-1zM1133 209h1v1h-1zM1135 209h1v1h-1zM1137 209h1v1h-1zM1139 209h1v1h-1zM1141 209h1v1h-1zM1143 209h1v1h-1zM1145 209h1v1h-1zM1147 209h1v1h-1zM1149 209h1v1h-1zM1151 209h1v1h-1zM1153 209h1v1h-1zM1155 209h1v1h-1zM1157 209h1v1h-1zM1159 209h1v1h-1zM1161 209h1v1h-1zM1163 209h1v1h-1zM1165 209h1v1h-1zM1167 209h1v1h-1zM1169 209h1v1h-1zM1171 209h1v1h-1zM1173 209h1v1h-1zM1175 209h1v1h-1zM1177 209h1v1h-1zM1179 209h1v1h-1zM1181 209h1v1h-1zM1183 209h1v1h-1zM1185 209h1v1h-1zM1187 209h1v1h-1zM1189 209h1v1h-1zM1191 209h1v1h-1zM1193 209h1v1h-1zM1195 209h1v1h-1zM1197 209h1v1h-1zM1199 209h1v1h-1zM1201 209h1v1h-1zM1203 209h1v1h-1zM1205 209h1v1h-1zM1207 209h1v1h-1zM1209 209h1v1h-1zM1211 209h1v1h-1zM1213 209h1v1h-1zM1215 209h1v1h-1zM1217 209h1v1h-1zM1219 209h1v1h-1zM1221 209h1v1h-1zM1223 209h1v1h-1zM1225 209h1v1h-1zM1227 209h1v1h-1zM1229 209h1v1h-1zM1231 209h1v1h-1zM1233 209h1v1h-1zM1235 209h1v1h-1zM1237 209h1v1h-1zM1239 209h1v1h-1zM1241 209h1v1h-1zM1243 209h1v1h-1zM1245 209h1v1h-1zM1247 209h1v1h-1zM1249 209h1v1h-1zM1251 209h1v1h-1zM1253 209h1v1h-1zM1255 209h1v1h-1zM1257 209h1v1h-1zM1259 209h1v1h-1zM1261 209h1v1h-1zM1263 209h1v1h-1zM1265 209h1v1h-1zM1267 209h1v1h-1zM19 295h1v1h-1zM21 295h1v1h-1zM23 295h1v1h-1zM25 295h1v1h-1zM27 295h1v1h-1zM29 295h1v1h-1zM31 295h1v1h-1zM33 295h1v1h-1zM35 295h1v1h-1zM37 295h1v1h-1zM39 295h1v1h-1zM41 295h1v1h-1zM43 295h1v1h-1zM45 295h1v1h-1zM47 295h1v1h-1zM49 295h1v1h-1zM51 295h1v1h-1zM53 295h1v1h-1zM55 295h1v1h-1zM57 295h1v1h-1zM59 295h1v1h-1zM61 295h1v1h-1zM63 295h1v1h-1zM65 295h1v1h-1zM67 295h1v1h-1zM69 295h1v1h-1zM71 295h1v1h-1zM73 295h1v1h-1zM75 295h1v1h-1zM77 295h1v1h-1zM79 295h1v1h-1zM81 295h1v1h-1zM83 295h1v1h-1zM85 295h1v1h-1zM87 295h1v1h-1zM89 295h1v1h-1zM91 295h1v1h-1zM93 295h1v1h-1zM95 295h1v1h-1zM97 295h1v1h-1zM99 295h1v1h-1zM101 295h1v1h-1zM103 295h1v1h-1zM105 295h1v1h-1zM107 295h1v1h-1zM109 295h1v1h-1zM111 295h1v1h-1zM113 295h1v1h-1zM115 295h1v1h-1zM117 295h1v1h-1zM119 295h1v1h-1zM121 295h1v1h-1zM123 295h1v1h-1zM125 295h1v1h-1zM127 295h1v1h-1zM129 295h1v1h-1zM131 295h1v1h-1zM133 295h1v1h-1zM135 295h1v1h-1zM137 295h1v1h-1zM139 295h1v1h-1zM141 295h1v1h-1zM143 295h1v1h-1zM145 295h1v1h-1zM147 295h1v1h-1zM149 295h1v1h-1zM151 295h1v1h-1zM153 295h1v1h-1zM155 295h1v1h-1zM157 295h1v1h-1zM159 295h1v1h-1zM161 295h1v1h-1zM163 295h1v1h-1zM165 295h1v1h-1zM167 295h1v1h-1zM169 295h1v1h-1zM171 295h1v1h-1zM173 295h1v1h-1zM175 295h1v1h-1zM177 295h1v1h-1zM179 295h1v1h-1zM181 295h1v1h-1zM183 295h1v1h-1zM185 295h1v1h-1zM187 295h1v1h-1zM189 295h1v1h-1zM191 295h1v1h-1zM193 295h1v1h-1zM195 295h1v1h-1zM197 295h1v1h-1zM199 295h1v1h-1zM201 295h1v1h-1zM203 295h1v1h-1zM205 295h1v1h-1zM207 295h1v1h-1zM209 295h1v1h-1zM211 295h1v1h-1zM213 295h1v1h-1zM215 295h1v1h-1zM217 295h1v1h-1zM219 295h1v1h-1zM221 295h1v1h-1zM223 295h1v1h-1zM225 295h1v1h-1zM227 295h1v1h-1zM229 295h1v1h-1zM231 295h1v1h-1zM233 295h1v1h-1zM235 295h1v1h-1zM237 295h1v1h-1zM239 295h1v1h-1zM241 295h1v1h-1zM243 295h1v1h-1zM245 295h1v1h-1zM247 295h1v1h-1zM249 295h1v1h-1zM251 295h1v1h-1zM253 295h1v1h-1zM255 295h1v1h-1zM257 295h1v1h-1zM259 295h1v1h-1zM261 295h1v1h-1zM263 295h1v1h-1zM265 295h1v1h-1zM267 295h1v1h-1zM269 295h1v1h-1zM271 295h1v1h-1zM273 295h1v1h-1zM275 295h1v1h-1zM277 295h1v1h-1zM279 295h1v1h-1zM281 295h1v1h-1zM283 295h1v1h-1zM285 295h1v1h-1zM287 295h1v1h-1zM289 295h1v1h-1zM291 295h1v1h-1zM293 295h1v1h-1zM295 295h1v1h-1zM297 295h1v1h-1zM299 295h1v1h-1zM301 295h1v1h-1zM303 295h1v1h-1zM305 295h1v1h-1zM307 295h1v1h-1zM309 295h1v1h-1zM311 295h1v1h-1zM313 295h1v1h-1zM315 295h1v1h-1zM317 295h1v1h-1zM319 295h1v1h-1zM321 295h1v1h-1zM323 295h1v1h-1zM325 295h1v1h-1zM327 295h1v1h-1zM329 295h1v1h-1zM331 295h1v1h-1zM333 295h1v1h-1zM335 295h1v1h-1zM337 295h1v1h-1zM339 295h1v1h-1zM341 295h1v1h-1zM343 295h1v1h-1zM345 295h1v1h-1zM347 295h1v1h-1zM349 295h1v1h-1zM351 295h1v1h-1zM353 295h1v1h-1zM355 295h1v1h-1zM357 295h1v1h-1zM359 295h1v1h-1zM361 295h1v1h-1zM363 295h1v1h-1zM365 295h1v1h-1zM367 295h1v1h-1zM369 295h1v1h-1zM371 295h1v1h-1zM373 295h1v1h-1zM375 295h1v1h-1zM377 295h1v1h-1zM379 295h1v1h-1zM381 295h1v1h-1zM383 295h1v1h-1zM385 295h1v1h-1zM387 295h1v1h-1zM389 295h1v1h-1zM391 295h1v1h-1zM393 295h1v1h-1zM395 295h1v1h-1zM397 295h1v1h-1zM399 295h1v1h-1zM401 295h1v1h-1zM403 295h1v1h-1zM405 295h1v1h-1zM407 295h1v1h-1zM409 295h1v1h-1zM411 295h1v1h-1zM413 295h1v1h-1zM415 295h1v1h-1zM417 295h1v1h-1zM419 295h1v1h-1zM421 295h1v1h-1zM423 295h1v1h-1zM425 295h1v1h-1zM427 295h1v1h-1zM429 295h1v1h-1zM431 295h1v1h-1zM433 295h1v1h-1zM435 295h1v1h-1zM437 295h1v1h-1zM439 295h1v1h-1zM441 295h1v1h-1zM443 295h1v1h-1zM445 295h1v1h-1zM447 295h1v1h-1zM449 295h1v1h-1zM451 295h1v1h-1zM453 295h1v1h-1zM455 295h1v1h-1zM457 295h1v1h-1zM459 295h1v1h-1zM461 295h1v1h-1zM463 295h1v1h-1zM465 295h1v1h-1zM467 295h1v1h-1zM469 295h1v1h-1zM471 295h1v1h-1zM473 295h1v1h-1zM475 295h1v1h-1zM477 295h1v1h-1zM479 295h1v1h-1zM481 295h1v1h-1zM483 295h1v1h-1zM485 295h1v1h-1zM487 295h1v1h-1zM489 295h1v1h-1zM491 295h1v1h-1zM493 295h1v1h-1zM495 295h1v1h-1zM497 295h1v1h-1zM499 295h1v1h-1zM501 295h1v1h-1zM503 295h1v1h-1zM505 295h1v1h-1zM507 295h1v1h-1zM509 295h1v1h-1zM511 295h1v1h-1zM513 295h1v1h-1zM515 295h1v1h-1zM517 295h1v1h-1zM519 295h1v1h-1zM521 295h1v1h-1zM523 295h1v1h-1zM525 295h1v1h-1zM527 295h1v1h-1zM529 295h1v1h-1zM531 295h1v1h-1zM533 295h1v1h-1zM535 295h1v1h-1zM537 295h1v1h-1zM539 295h1v1h-1zM541 295h1v1h-1zM543 295h1v1h-1zM545 295h1v1h-1zM547 295h1v1h-1zM549 295h1v1h-1zM551 295h1v1h-1zM553 295h1v1h-1zM555 295h1v1h-1zM557 295h1v1h-1zM559 295h1v1h-1zM561 295h1v1h-1zM563 295h1v1h-1zM565 295h1v1h-1zM567 295h1v1h-1zM569 295h1v1h-1zM571 295h1v1h-1zM573 295h1v1h-1zM575 295h1v1h-1zM577 295h1v1h-1zM579 295h1v1h-1zM581 295h1v1h-1zM583 295h1v1h-1zM585 295h1v1h-1zM587 295h1v1h-1zM589 295h1v1h-1zM591 295h1v1h-1zM593 295h1v1h-1zM595 295h1v1h-1zM597 295h1v1h-1zM599 295h1v1h-1zM601 295h1v1h-1zM603 295h1v1h-1zM605 295h1v1h-1zM607 295h1v1h-1zM609 295h1v1h-1zM611 295h1v1h-1zM613 295h1v1h-1zM615 295h1v1h-1zM617 295h1v1h-1zM619 295h1v1h-1zM621 295h1v1h-1zM623 295h1v1h-1zM625 295h1v1h-1zM627 295h1v1h-1zM629 295h1v1h-1zM631 295h1v1h-1zM633 295h1v1h-1zM635 295h1v1h-1zM637 295h1v1h-1zM639 295h1v1h-1zM641 295h1v1h-1zM643 295h1v1h-1zM645 295h1v1h-1zM647 295h1v1h-1zM649 295h1v1h-1zM651 295h1v1h-1zM653 295h1v1h-1zM655 295h1v1h-1zM657 295h1v1h-1zM659 295h1v1h-1zM661 295h1v1h-1zM663 295h1v1h-1zM665 295h1v1h-1zM667 295h1v1h-1zM669 295h1v1h-1zM671 295h1v1h-1zM673 295h1v1h-1zM675 295h1v1h-1zM677 295h1v1h-1zM679 295h1v1h-1zM681 295h1v1h-1zM683 295h1v1h-1zM685 295h1v1h-1zM687 295h1v1h-1zM689 295h1v1h-1zM691 295h1v1h-1zM693 295h1v1h-1zM695 295h1v1h-1zM697 295h1v1h-1zM699 295h1v1h-1zM701 295h1v1h-1zM703 295h1v1h-1zM705 295h1v1h-1zM707 295h1v1h-1zM709 295h1v1h-1zM711 295h1v1h-1zM713 295h1v1h-1zM715 295h1v1h-1zM717 295h1v1h-1zM719 295h1v1h-1zM721 295h1v1h-1zM723 295h1v1h-1zM725 295h1v1h-1zM727 295h1v1h-1zM729 295h1v1h-1zM731 295h1v1h-1zM733 295h1v1h-1zM735 295h1v1h-1zM737 295h1v1h-1zM739 295h1v1h-1zM741 295h1v1h-1zM743 295h1v1h-1zM745 295h1v1h-1zM747 295h1v1h-1zM749 295h1v1h-1zM751 295h1v1h-1zM753 295h1v1h-1zM755 295h1v1h-1zM757 295h1v1h-1zM759 295h1v1h-1zM761 295h1v1h-1zM763 295h1v1h-1zM765 295h1v1h-1zM767 295h1v1h-1zM769 295h1v1h-1zM771 295h1v1h-1zM773 295h1v1h-1zM775 295h1v1h-1zM777 295h1v1h-1zM779 295h1v1h-1zM781 295h1v1h-1zM783 295h1v1h-1zM785 295h1v1h-1zM787 295h1v1h-1zM789 295h1v1h-1zM791 295h1v1h-1zM793 295h1v1h-1zM795 295h1v1h-1zM797 295h1v1h-1zM799 295h1v1h-1zM801 295h1v1h-1zM803 295h1v1h-1zM805 295h1v1h-1zM807 295h1v1h-1zM809 295h1v1h-1zM811 295h1v1h-1zM813 295h1v1h-1zM815 295h1v1h-1zM817 295h1v1h-1zM819 295h1v1h-1zM821 295h1v1h-1zM823 295h1v1h-1zM825 295h1v1h-1zM827 295h1v1h-1zM829 295h1v1h-1zM831 295h1v1h-1zM833 295h1v1h-1zM835 295h1v1h-1zM837 295h1v1h-1zM839 295h1v1h-1zM841 295h1v1h-1zM843 295h1v1h-1zM845 295h1v1h-1zM847 295h1v1h-1zM849 295h1v1h-1zM851 295h1v1h-1zM853 295h1v1h-1zM855 295h1v1h-1zM857 295h1v1h-1zM859 295h1v1h-1zM861 295h1v1h-1zM863 295h1v1h-1zM865 295h1v1h-1zM867 295h1v1h-1zM869 295h1v1h-1zM871 295h1v1h-1zM873 295h1v1h-1zM875 295h1v1h-1zM877 295h1v1h-1zM879 295h1v1h-1zM881 295h1v1h-1zM883 295h1v1h-1zM885 295h1v1h-1zM887 295h1v1h-1zM889 295h1v1h-1zM891 295h1v1h-1zM893 295h1v1h-1zM895 295h1v1h-1zM897 295h1v1h-1zM899 295h1v1h-1zM901 295h1v1h-1zM903 295h1v1h-1zM905 295h1v1h-1zM907 295h1v1h-1zM909 295h1v1h-1zM911 295h1v1h-1zM913 295h1v1h-1zM915 295h1v1h-1zM917 295h1v1h-1zM919 295h1v1h-1zM921 295h1v1h-1zM923 295h1v1h-1zM925 295h1v1h-1zM927 295h1v1h-1zM929 295h1v1h-1zM931 295h1v1h-1zM933 295h1v1h-1zM935 295h1v1h-1zM937 295h1v1h-1zM939 295h1v1h-1zM941 295h1v1h-1zM943 295h1v1h-1zM945 295h1v1h-1zM947 295h1v1h-1zM949 295h1v1h-1zM951 295h1v1h-1zM953 295h1v1h-1zM955 295h1v1h-1zM957 295h1v1h-1zM959 295h1v1h-1zM961 295h1v1h-1zM963 295h1v1h-1zM965 295h1v1h-1zM967 295h1v1h-1zM969 295h1v1h-1zM971 295h1v1h-1zM973 295h1v1h-1zM975 295h1v1h-1zM977 295h1v1h-1zM979 295h1v1h-1zM981 295h1v1h-1zM983 295h1v1h-1zM985 295h1v1h-1zM987 295h1v1h-1zM989 295h1v1h-1zM991 295h1v1h-1zM993 295h1v1h-1zM995 295h1v1h-1zM997 295h1v1h-1zM999 295h1v1h-1zM1001 295h1v1h-1zM1003 295h1v1h-1zM1005 295h1v1h-1zM1007 295h1v1h-1zM1009 295h1v1h-1zM1011 295h1v1h-1zM1013 295h1v1h-1zM1015 295h1v1h-1zM1017 295h1v1h-1zM1019 295h1v1h-1zM1021 295h1v1h-1zM1023 295h1v1h-1zM1025 295h1v1h-1zM1027 295h1v1h-1zM1029 295h1v1h-1zM1031 295h1v1h-1zM1033 295h1v1h-1zM1035 295h1v1h-1zM1037 295h1v1h-1zM1039 295h1v1h-1zM1041 295h1v1h-1zM1043 295h1v1h-1zM1045 295h1v1h-1zM1047 295h1v1h-1zM1049 295h1v1h-1zM1051 295h1v1h-1zM1053 295h1v1h-1zM1055 295h1v1h-1zM1057 295h1v1h-1zM1059 295h1v1h-1zM1061 295h1v1h-1zM1063 295h1v1h-1zM1065 295h1v1h-1zM1067 295h1v1h-1zM1069 295h1v1h-1zM1071 295h1v1h-1zM1073 295h1v1h-1zM1075 295h1v1h-1zM1077 295h1v1h-1zM1079 295h1v1h-1zM1081 295h1v1h-1zM1083 295h1v1h-1zM1085 295h1v1h-1zM1087 295h1v1h-1zM1089 295h1v1h-1zM1091 295h1v1h-1zM1093 295h1v1h-1zM1095 295h1v1h-1zM1097 295h1v1h-1zM1099 295h1v1h-1zM1101 295h1v1h-1zM1103 295h1v1h-1zM1105 295h1v1h-1zM1107 295h1v1h-1zM1109 295h1v1h-1zM1111 295h1v1h-1zM1113 295h1v1h-1zM1115 295h1v1h-1zM1117 295h1v1h-1zM1119 295h1v1h-1zM1121 295h1v1h-1zM1123 295h1v1h-1zM1125 295h1v1h-1zM1127 295h1v1h-1zM1129 295h1v1h-1zM1131 295h1v1h-1zM1133 295h1v1h-1zM1135 295h1v1h-1zM1137 295h1v1h-1zM1139 295h1v1h-1zM1141 295h1v1h-1zM1143 295h1v1h-1zM1145 295h1v1h-1zM1147 295h1v1h-1zM1149 295h1v1h-1zM1151 295h1v1h-1zM1153 295h1v1h-1zM1155 295h1v1h-1zM1157 295h1v1h-1zM1159 295h1v1h-1zM1161 295h1v1h-1zM1163 295h1v1h-1zM1165 295h1v1h-1zM1167 295h1v1h-1zM1169 295h1v1h-1zM1171 295h1v1h-1zM1173 295h1v1h-1zM1175 295h1v1h-1zM1177 295h1v1h-1zM1179 295h1v1h-1zM1181 295h1v1h-1zM1183 295h1v1h-1zM1185 295h1v1h-1zM1187 295h1v1h-1zM1189 295h1v1h-1zM1191 295h1v1h-1zM1193 295h1v1h-1zM1195 295h1v1h-1zM1197 295h1v1h-1zM1199 295h1v1h-1zM1201 295h1v1h-1zM1203 295h1v1h-1zM1205 295h1v1h-1zM1207 295h1v1h-1zM1209 295h1v1h-1zM1211 295h1v1h-1zM1213 295h1v1h-1zM1215 295h1v1h-1zM1217 295h1v1h-1zM1219 295h1v1h-1zM1221 295h1v1h-1zM1223 295h1v1h-1zM1225 295h1v1h-1zM1227 295h1v1h-1zM1229 295h1v1h-1zM1231 295h1v1h-1zM1233 295h1v1h-1zM1235 295h1v1h-1zM1237 295h1v1h-1zM1239 295h1v1h-1zM1241 295h1v1h-1zM1243 295h1v1h-1zM1245 295h1v1h-1zM1247 295h1v1h-1zM1249 295h1v1h-1zM1251 295h1v1h-1zM1253 295h1v1h-1zM1255 295h1v1h-1zM1257 295h1v1h-1zM1259 295h1v1h-1zM1261 295h1v1h-1zM1263 295h1v1h-1zM1265 295h1v1h-1zM1267 295h1v1h-1zM19 466h1v1h-1zM21 466h1v1h-1zM23 466h1v1h-1zM25 466h1v1h-1zM27 466h1v1h-1zM29 466h1v1h-1zM31 466h1v1h-1zM33 466h1v1h-1zM35 466h1v1h-1zM37 466h1v1h-1zM39 466h1v1h-1zM41 466h1v1h-1zM43 466h1v1h-1zM45 466h1v1h-1zM47 466h1v1h-1zM49 466h1v1h-1zM51 466h1v1h-1zM53 466h1v1h-1zM55 466h1v1h-1zM57 466h1v1h-1zM59 466h1v1h-1zM61 466h1v1h-1zM63 466h1v1h-1zM65 466h1v1h-1zM67 466h1v1h-1zM69 466h1v1h-1zM71 466h1v1h-1zM73 466h1v1h-1zM75 466h1v1h-1zM77 466h1v1h-1zM79 466h1v1h-1zM81 466h1v1h-1zM83 466h1v1h-1zM85 466h1v1h-1zM87 466h1v1h-1zM89 466h1v1h-1zM91 466h1v1h-1zM93 466h1v1h-1zM95 466h1v1h-1zM97 466h1v1h-1zM99 466h1v1h-1zM101 466h1v1h-1zM103 466h1v1h-1zM105 466h1v1h-1zM107 466h1v1h-1zM109 466h1v1h-1zM111 466h1v1h-1zM113 466h1v1h-1zM115 466h1v1h-1zM117 466h1v1h-1zM119 466h1v1h-1zM121 466h1v1h-1zM123 466h1v1h-1zM125 466h1v1h-1zM127 466h1v1h-1zM129 466h1v1h-1zM131 466h1v1h-1zM133 466h1v1h-1zM135 466h1v1h-1zM137 466h1v1h-1zM139 466h1v1h-1zM141 466h1v1h-1zM143 466h1v1h-1zM145 466h1v1h-1zM147 466h1v1h-1zM149 466h1v1h-1zM151 466h1v1h-1zM153 466h1v1h-1zM155 466h1v1h-1zM157 466h1v1h-1zM159 466h1v1h-1zM161 466h1v1h-1zM163 466h1v1h-1zM165 466h1v1h-1zM167 466h1v1h-1zM169 466h1v1h-1zM171 466h1v1h-1zM173 466h1v1h-1zM175 466h1v1h-1zM177 466h1v1h-1zM179 466h1v1h-1zM181 466h1v1h-1zM183 466h1v1h-1zM185 466h1v1h-1zM187 466h1v1h-1zM189 466h1v1h-1zM191 466h1v1h-1zM193 466h1v1h-1zM195 466h1v1h-1zM197 466h1v1h-1zM199 466h1v1h-1zM201 466h1v1h-1zM203 466h1v1h-1zM205 466h1v1h-1zM207 466h1v1h-1zM209 466h1v1h-1zM211 466h1v1h-1zM213 466h1v1h-1zM215 466h1v1h-1zM217 466h1v1h-1zM219 466h1v1h-1zM221 466h1v1h-1zM223 466h1v1h-1zM225 466h1v1h-1zM227 466h1v1h-1zM229 466h1v1h-1zM231 466h1v1h-1zM233 466h1v1h-1zM235 466h1v1h-1zM237 466h1v1h-1zM239 466h1v1h-1zM241 466h1v1h-1zM243 466h1v1h-1zM245 466h1v1h-1zM247 466h1v1h-1zM249 466h1v1h-1zM251 466h1v1h-1zM253 466h1v1h-1zM255 466h1v1h-1zM257 466h1v1h-1zM259 466h1v1h-1zM261 466h1v1h-1zM263 466h1v1h-1zM265 466h1v1h-1zM267 466h1v1h-1zM269 466h1v1h-1zM271 466h1v1h-1zM273 466h1v1h-1zM275 466h1v1h-1zM277 466h1v1h-1zM279 466h1v1h-1zM281 466h1v1h-1zM283 466h1v1h-1zM285 466h1v1h-1zM287 466h1v1h-1zM289 466h1v1h-1zM291 466h1v1h-1zM293 466h1v1h-1zM295 466h1v1h-1zM297 466h1v1h-1zM299 466h1v1h-1zM301 466h1v1h-1zM303 466h1v1h-1zM305 466h1v1h-1zM307 466h1v1h-1zM309 466h1v1h-1zM311 466h1v1h-1zM313 466h1v1h-1zM315 466h1v1h-1zM317 466h1v1h-1zM319 466h1v1h-1zM321 466h1v1h-1zM323 466h1v1h-1zM325 466h1v1h-1zM327 466h1v1h-1zM329 466h1v1h-1zM331 466h1v1h-1zM333 466h1v1h-1zM335 466h1v1h-1zM337 466h1v1h-1zM339 466h1v1h-1zM341 466h1v1h-1zM343 466h1v1h-1zM345 466h1v1h-1zM347 466h1v1h-1zM349 466h1v1h-1zM351 466h1v1h-1zM353 466h1v1h-1zM355 466h1v1h-1zM357 466h1v1h-1zM359 466h1v1h-1zM361 466h1v1h-1zM363 466h1v1h-1zM365 466h1v1h-1zM367 466h1v1h-1zM369 466h1v1h-1zM371 466h1v1h-1zM373 466h1v1h-1zM375 466h1v1h-1zM377 466h1v1h-1zM379 466h1v1h-1zM381 466h1v1h-1zM383 466h1v1h-1zM385 466h1v1h-1zM387 466h1v1h-1zM389 466h1v1h-1zM391 466h1v1h-1zM393 466h1v1h-1zM395 466h1v1h-1zM397 466h1v1h-1zM399 466h1v1h-1zM401 466h1v1h-1zM403 466h1v1h-1zM405 466h1v1h-1zM407 466h1v1h-1zM409 466h1v1h-1zM411 466h1v1h-1zM413 466h1v1h-1zM415 466h1v1h-1zM417 466h1v1h-1zM419 466h1v1h-1zM421 466h1v1h-1zM423 466h1v1h-1zM425 466h1v1h-1zM427 466h1v1h-1zM429 466h1v1h-1zM431 466h1v1h-1zM433 466h1v1h-1zM435 466h1v1h-1zM437 466h1v1h-1zM439 466h1v1h-1zM441 466h1v1h-1zM443 466h1v1h-1zM445 466h1v1h-1zM447 466h1v1h-1zM449 466h1v1h-1zM451 466h1v1h-1zM453 466h1v1h-1zM455 466h1v1h-1zM457 466h1v1h-1zM459 466h1v1h-1zM461 466h1v1h-1zM463 466h1v1h-1zM465 466h1v1h-1zM467 466h1v1h-1zM469 466h1v1h-1zM471 466h1v1h-1zM473 466h1v1h-1zM475 466h1v1h-1zM477 466h1v1h-1zM479 466h1v1h-1zM481 466h1v1h-1zM483 466h1v1h-1zM485 466h1v1h-1zM487 466h1v1h-1zM489 466h1v1h-1zM491 466h1v1h-1zM493 466h1v1h-1zM495 466h1v1h-1zM497 466h1v1h-1zM499 466h1v1h-1zM501 466h1v1h-1zM503 466h1v1h-1zM505 466h1v1h-1zM507 466h1v1h-1zM509 466h1v1h-1zM511 466h1v1h-1zM513 466h1v1h-1zM515 466h1v1h-1zM517 466h1v1h-1zM519 466h1v1h-1zM521 466h1v1h-1zM523 466h1v1h-1zM525 466h1v1h-1zM527 466h1v1h-1zM529 466h1v1h-1zM531 466h1v1h-1zM533 466h1v1h-1zM535 466h1v1h-1zM537 466h1v1h-1zM539 466h1v1h-1zM541 466h1v1h-1zM543 466h1v1h-1zM545 466h1v1h-1zM547 466h1v1h-1zM549 466h1v1h-1zM551 466h1v1h-1zM553 466h1v1h-1zM555 466h1v1h-1zM557 466h1v1h-1zM559 466h1v1h-1zM561 466h1v1h-1zM563 466h1v1h-1zM565 466h1v1h-1zM567 466h1v1h-1zM569 466h1v1h-1zM571 466h1v1h-1zM573 466h1v1h-1zM575 466h1v1h-1zM577 466h1v1h-1zM579 466h1v1h-1zM581 466h1v1h-1zM583 466h1v1h-1zM585 466h1v1h-1zM587 466h1v1h-1zM589 466h1v1h-1zM591 466h1v1h-1zM593 466h1v1h-1zM595 466h1v1h-1zM597 466h1v1h-1zM599 466h1v1h-1zM601 466h1v1h-1zM603 466h1v1h-1zM605 466h1v1h-1zM607 466h1v1h-1zM609 466h1v1h-1zM611 466h1v1h-1zM613 466h1v1h-1zM615 466h1v1h-1zM617 466h1v1h-1zM619 466h1v1h-1zM621 466h1v1h-1zM623 466h1v1h-1zM625 466h1v1h-1zM627 466h1v1h-1zM629 466h1v1h-1zM631 466h1v1h-1zM633 466h1v1h-1zM635 466h1v1h-1zM637 466h1v1h-1zM639 466h1v1h-1zM641 466h1v1h-1zM643 466h1v1h-1zM645 466h1v1h-1zM647 466h1v1h-1zM649 466h1v1h-1zM651 466h1v1h-1zM653 466h1v1h-1zM655 466h1v1h-1zM657 466h1v1h-1zM659 466h1v1h-1zM661 466h1v1h-1zM663 466h1v1h-1zM665 466h1v1h-1zM667 466h1v1h-1zM669 466h1v1h-1zM671 466h1v1h-1zM673 466h1v1h-1zM675 466h1v1h-1zM677 466h1v1h-1zM679 466h1v1h-1zM681 466h1v1h-1zM683 466h1v1h-1zM685 466h1v1h-1zM687 466h1v1h-1zM689 466h1v1h-1zM691 466h1v1h-1zM693 466h1v1h-1zM695 466h1v1h-1zM697 466h1v1h-1zM699 466h1v1h-1zM701 466h1v1h-1zM703 466h1v1h-1zM705 466h1v1h-1zM707 466h1v1h-1zM709 466h1v1h-1zM711 466h1v1h-1zM713 466h1v1h-1zM715 466h1v1h-1zM717 466h1v1h-1zM719 466h1v1h-1zM721 466h1v1h-1zM723 466h1v1h-1zM725 466h1v1h-1zM727 466h1v1h-1zM729 466h1v1h-1zM731 466h1v1h-1zM733 466h1v1h-1zM735 466h1v1h-1zM737 466h1v1h-1zM739 466h1v1h-1zM741 466h1v1h-1zM743 466h1v1h-1zM745 466h1v1h-1zM747 466h1v1h-1zM749 466h1v1h-1zM751 466h1v1h-1zM753 466h1v1h-1zM755 466h1v1h-1zM757 466h1v1h-1zM759 466h1v1h-1zM761 466h1v1h-1zM763 466h1v1h-1zM765 466h1v1h-1zM767 466h1v1h-1zM769 466h1v1h-1zM771 466h1v1h-1zM773 466h1v1h-1zM775 466h1v1h-1zM777 466h1v1h-1zM779 466h1v1h-1zM781 466h1v1h-1zM783 466h1v1h-1zM785 466h1v1h-1zM787 466h1v1h-1zM789 466h1v1h-1zM791 466h1v1h-1zM793 466h1v1h-1zM795 466h1v1h-1zM797 466h1v1h-1zM799 466h1v1h-1zM801 466h1v1h-1zM803 466h1v1h-1zM805 466h1v1h-1zM807 466h1v1h-1zM809 466h1v1h-1zM811 466h1v1h-1zM813 466h1v1h-1zM815 466h1v1h-1zM817 466h1v1h-1zM819 466h1v1h-1zM821 466h1v1h-1zM823 466h1v1h-1zM825 466h1v1h-1zM827 466h1v1h-1zM829 466h1v1h-1zM831 466h1v1h-1zM833 466h1v1h-1zM835 466h1v1h-1zM837 466h1v1h-1zM839 466h1v1h-1zM841 466h1v1h-1zM843 466h1v1h-1zM845 466h1v1h-1zM847 466h1v1h-1zM849 466h1v1h-1zM851 466h1v1h-1zM853 466h1v1h-1zM855 466h1v1h-1zM857 466h1v1h-1zM859 466h1v1h-1zM861 466h1v1h-1zM863 466h1v1h-1zM865 466h1v1h-1zM867 466h1v1h-1zM869 466h1v1h-1zM871 466h1v1h-1zM873 466h1v1h-1zM875 466h1v1h-1zM877 466h1v1h-1zM879 466h1v1h-1zM881 466h1v1h-1zM883 466h1v1h-1zM885 466h1v1h-1zM887 466h1v1h-1zM889 466h1v1h-1zM891 466h1v1h-1zM893 466h1v1h-1zM895 466h1v1h-1zM897 466h1v1h-1zM899 466h1v1h-1zM901 466h1v1h-1zM903 466h1v1h-1zM905 466h1v1h-1zM907 466h1v1h-1zM909 466h1v1h-1zM911 466h1v1h-1zM913 466h1v1h-1zM915 466h1v1h-1zM917 466h1v1h-1zM919 466h1v1h-1zM921 466h1v1h-1zM923 466h1v1h-1zM925 466h1v1h-1zM927 466h1v1h-1zM929 466h1v1h-1zM931 466h1v1h-1zM933 466h1v1h-1zM935 466h1v1h-1zM937 466h1v1h-1zM939 466h1v1h-1zM941 466h1v1h-1zM943 466h1v1h-1zM945 466h1v1h-1zM947 466h1v1h-1zM949 466h1v1h-1zM951 466h1v1h-1zM953 466h1v1h-1zM955 466h1v1h-1zM957 466h1v1h-1zM959 466h1v1h-1zM961 466h1v1h-1zM963 466h1v1h-1zM965 466h1v1h-1zM967 466h1v1h-1zM969 466h1v1h-1zM971 466h1v1h-1zM973 466h1v1h-1zM975 466h1v1h-1zM977 466h1v1h-1zM979 466h1v1h-1zM981 466h1v1h-1zM983 466h1v1h-1zM985 466h1v1h-1zM987 466h1v1h-1zM989 466h1v1h-1zM991 466h1v1h-1zM993 466h1v1h-1zM995 466h1v1h-1zM997 466h1v1h-1zM999 466h1v1h-1zM1001 466h1v1h-1zM1003 466h1v1h-1zM1005 466h1v1h-1zM1007 466h1v1h-1zM1009 466h1v1h-1zM1011 466h1v1h-1zM1013 466h1v1h-1zM1015 466h1v1h-1zM1017 466h1v1h-1zM1019 466h1v1h-1zM1021 466h1v1h-1zM1023 466h1v1h-1zM1025 466h1v1h-1zM1027 466h1v1h-1zM1029 466h1v1h-1zM1031 466h1v1h-1zM1033 466h1v1h-1zM1035 466h1v1h-1zM1037 466h1v1h-1zM1039 466h1v1h-1zM1041 466h1v1h-1zM1043 466h1v1h-1zM1045 466h1v1h-1zM1047 466h1v1h-1zM1049 466h1v1h-1zM1051 466h1v1h-1zM1053 466h1v1h-1zM1055 466h1v1h-1zM1057 466h1v1h-1zM1059 466h1v1h-1zM1061 466h1v1h-1zM1063 466h1v1h-1zM1065 466h1v1h-1zM1067 466h1v1h-1zM1069 466h1v1h-1zM1071 466h1v1h-1zM1073 466h1v1h-1zM1075 466h1v1h-1zM1077 466h1v1h-1zM1079 466h1v1h-1zM1081 466h1v1h-1zM1083 466h1v1h-1zM1085 466h1v1h-1zM1087 466h1v1h-1zM1089 466h1v1h-1zM1091 466h1v1h-1zM1093 466h1v1h-1zM1095 466h1v1h-1zM1097 466h1v1h-1zM1099 466h1v1h-1zM1101 466h1v1h-1zM1103 466h1v1h-1zM1105 466h1v1h-1zM1107 466h1v1h-1zM1109 466h1v1h-1zM1111 466h1v1h-1zM1113 466h1v1h-1zM1115 466h1v1h-1zM1117 466h1v1h-1zM1119 466h1v1h-1zM1121 466h1v1h-1zM1123 466h1v1h-1zM1125 466h1v1h-1zM1127 466h1v1h-1zM1129 466h1v1h-1zM1131 466h1v1h-1zM1133 466h1v1h-1zM1135 466h1v1h-1zM1137 466h1v1h-1zM1139 466h1v1h-1zM1141 466h1v1h-1zM1143 466h1v1h-1zM1145 466h1v1h-1zM1147 466h1v1h-1zM1149 466h1v1h-1zM1151 466h1v1h-1zM1153 466h1v1h-1zM1155 466h1v1h-1zM1157 466h1v1h-1zM1159 466h1v1h-1zM1161 466h1v1h-1zM1163 466h1v1h-1zM1165 466h1v1h-1zM1167 466h1v1h-1zM1169 466h1v1h-1zM1171 466h1v1h-1zM1173 466h1v1h-1zM1175 466h1v1h-1zM1177 466h1v1h-1zM1179 466h1v1h-1zM1181 466h1v1h-1zM1183 466h1v1h-1zM1185 466h1v1h-1zM1187 466h1v1h-1zM1189 466h1v1h-1zM1191 466h1v1h-1zM1193 466h1v1h-1zM1195 466h1v1h-1zM1197 466h1v1h-1zM1199 466h1v1h-1zM1201 466h1v1h-1zM1203 466h1v1h-1zM1205 466h1v1h-1zM1207 466h1v1h-1zM1209 466h1v1h-1zM1211 466h1v1h-1zM1213 466h1v1h-1zM1215 466h1v1h-1zM1217 466h1v1h-1zM1219 466h1v1h-1zM1221 466h1v1h-1zM1223 466h1v1h-1zM1225 466h1v1h-1zM1227 466h1v1h-1zM1229 466h1v1h-1zM1231 466h1v1h-1zM1233 466h1v1h-1zM1235 466h1v1h-1zM1237 466h1v1h-1zM1239 466h1v1h-1zM1241 466h1v1h-1zM1243 466h1v1h-1zM1245 466h1v1h-1zM1247 466h1v1h-1zM1249 466h1v1h-1zM1251 466h1v1h-1zM1253 466h1v1h-1zM1255 466h1v1h-1zM1257 466h1v1h-1zM1259 466h1v1h-1zM1261 466h1v1h-1zM1263 466h1v1h-1zM1265 466h1v1h-1zM1267 466h1v1h-1zM19 551h1v1h-1zM21 551h1v1h-1zM23 551h1v1h-1zM25 551h1v1h-1zM27 551h1v1h-1zM29 551h1v1h-1zM31 551h1v1h-1zM33 551h1v1h-1zM35 551h1v1h-1zM37 551h1v1h-1zM39 551h1v1h-1zM41 551h1v1h-1zM43 551h1v1h-1zM45 551h1v1h-1zM47 551h1v1h-1zM49 551h1v1h-1zM51 551h1v1h-1zM53 551h1v1h-1zM55 551h1v1h-1zM57 551h1v1h-1zM59 551h1v1h-1zM61 551h1v1h-1zM63 551h1v1h-1zM65 551h1v1h-1zM67 551h1v1h-1zM69 551h1v1h-1zM71 551h1v1h-1zM73 551h1v1h-1zM75 551h1v1h-1zM77 551h1v1h-1zM79 551h1v1h-1zM81 551h1v1h-1zM83 551h1v1h-1zM85 551h1v1h-1zM87 551h1v1h-1zM89 551h1v1h-1zM91 551h1v1h-1zM93 551h1v1h-1zM95 551h1v1h-1zM97 551h1v1h-1zM99 551h1v1h-1zM101 551h1v1h-1zM103 551h1v1h-1zM105 551h1v1h-1zM107 551h1v1h-1zM109 551h1v1h-1zM111 551h1v1h-1zM113 551h1v1h-1zM115 551h1v1h-1zM117 551h1v1h-1zM119 551h1v1h-1zM121 551h1v1h-1zM123 551h1v1h-1zM125 551h1v1h-1zM127 551h1v1h-1zM129 551h1v1h-1zM131 551h1v1h-1zM133 551h1v1h-1zM135 551h1v1h-1zM137 551h1v1h-1zM139 551h1v1h-1zM141 551h1v1h-1zM143 551h1v1h-1zM145 551h1v1h-1zM147 551h1v1h-1zM149 551h1v1h-1zM151 551h1v1h-1zM153 551h1v1h-1zM155 551h1v1h-1zM157 551h1v1h-1zM159 551h1v1h-1zM161 551h1v1h-1zM163 551h1v1h-1zM165 551h1v1h-1zM167 551h1v1h-1zM169 551h1v1h-1zM171 551h1v1h-1zM173 551h1v1h-1zM175 551h1v1h-1zM177 551h1v1h-1zM179 551h1v1h-1zM181 551h1v1h-1zM183 551h1v1h-1zM185 551h1v1h-1zM187 551h1v1h-1zM189 551h1v1h-1zM191 551h1v1h-1zM193 551h1v1h-1zM195 551h1v1h-1zM197 551h1v1h-1zM199 551h1v1h-1zM201 551h1v1h-1zM203 551h1v1h-1zM205 551h1v1h-1zM207 551h1v1h-1zM209 551h1v1h-1zM211 551h1v1h-1zM213 551h1v1h-1zM215 551h1v1h-1zM217 551h1v1h-1zM219 551h1v1h-1zM221 551h1v1h-1zM223 551h1v1h-1zM225 551h1v1h-1zM227 551h1v1h-1zM229 551h1v1h-1zM231 551h1v1h-1zM233 551h1v1h-1zM235 551h1v1h-1zM237 551h1v1h-1zM239 551h1v1h-1zM241 551h1v1h-1zM243 551h1v1h-1zM245 551h1v1h-1zM247 551h1v1h-1zM249 551h1v1h-1zM251 551h1v1h-1zM253 551h1v1h-1zM255 551h1v1h-1zM257 551h1v1h-1zM259 551h1v1h-1zM261 551h1v1h-1zM263 551h1v1h-1zM265 551h1v1h-1zM267 551h1v1h-1zM269 551h1v1h-1zM271 551h1v1h-1zM273 551h1v1h-1zM275 551h1v1h-1zM277 551h1v1h-1zM279 551h1v1h-1zM281 551h1v1h-1zM283 551h1v1h-1zM285 551h1v1h-1zM287 551h1v1h-1zM289 551h1v1h-1zM291 551h1v1h-1zM293 551h1v1h-1zM295 551h1v1h-1zM297 551h1v1h-1zM299 551h1v1h-1zM301 551h1v1h-1zM303 551h1v1h-1zM305 551h1v1h-1zM307 551h1v1h-1zM309 551h1v1h-1zM311 551h1v1h-1zM313 551h1v1h-1zM315 551h1v1h-1zM317 551h1v1h-1zM319 551h1v1h-1zM321 551h1v1h-1zM323 551h1v1h-1zM325 551h1v1h-1zM327 551h1v1h-1zM329 551h1v1h-1zM331 551h1v1h-1zM333 551h1v1h-1zM335 551h1v1h-1zM337 551h1v1h-1zM339 551h1v1h-1zM341 551h1v1h-1zM343 551h1v1h-1zM345 551h1v1h-1zM347 551h1v1h-1zM349 551h1v1h-1zM351 551h1v1h-1zM353 551h1v1h-1zM355 551h1v1h-1zM357 551h1v1h-1zM359 551h1v1h-1zM361 551h1v1h-1zM363 551h1v1h-1zM365 551h1v1h-1zM367 551h1v1h-1zM369 551h1v1h-1zM371 551h1v1h-1zM373 551h1v1h-1zM375 551h1v1h-1zM377 551h1v1h-1zM379 551h1v1h-1zM381 551h1v1h-1zM383 551h1v1h-1zM385 551h1v1h-1zM387 551h1v1h-1zM389 551h1v1h-1zM391 551h1v1h-1zM393 551h1v1h-1zM395 551h1v1h-1zM397 551h1v1h-1zM399 551h1v1h-1zM401 551h1v1h-1zM403 551h1v1h-1zM405 551h1v1h-1zM407 551h1v1h-1zM409 551h1v1h-1zM411 551h1v1h-1zM413 551h1v1h-1zM415 551h1v1h-1zM417 551h1v1h-1zM419 551h1v1h-1zM421 551h1v1h-1zM423 551h1v1h-1zM425 551h1v1h-1zM427 551h1v1h-1zM429 551h1v1h-1zM431 551h1v1h-1zM433 551h1v1h-1zM435 551h1v1h-1zM437 551h1v1h-1zM439 551h1v1h-1zM441 551h1v1h-1zM443 551h1v1h-1zM445 551h1v1h-1zM447 551h1v1h-1zM449 551h1v1h-1zM451 551h1v1h-1zM453 551h1v1h-1zM455 551h1v1h-1zM457 551h1v1h-1zM459 551h1v1h-1zM461 551h1v1h-1zM463 551h1v1h-1zM465 551h1v1h-1zM467 551h1v1h-1zM469 551h1v1h-1zM471 551h1v1h-1zM473 551h1v1h-1zM475 551h1v1h-1zM477 551h1v1h-1zM479 551h1v1h-1zM481 551h1v1h-1zM483 551h1v1h-1zM485 551h1v1h-1zM487 551h1v1h-1zM489 551h1v1h-1zM491 551h1v1h-1zM493 551h1v1h-1zM495 551h1v1h-1zM497 551h1v1h-1zM499 551h1v1h-1zM501 551h1v1h-1zM503 551h1v1h-1zM505 551h1v1h-1zM507 551h1v1h-1zM509 551h1v1h-1zM511 551h1v1h-1zM513 551h1v1h-1zM515 551h1v1h-1zM517 551h1v1h-1zM519 551h1v1h-1zM521 551h1v1h-1zM523 551h1v1h-1zM525 551h1v1h-1zM527 551h1v1h-1zM529 551h1v1h-1zM531 551h1v1h-1zM533 551h1v1h-1zM535 551h1v1h-1zM537 551h1v1h-1zM539 551h1v1h-1zM541 551h1v1h-1zM543 551h1v1h-1zM545 551h1v1h-1zM547 551h1v1h-1zM549 551h1v1h-1zM551 551h1v1h-1zM553 551h1v1h-1zM555 551h1v1h-1zM557 551h1v1h-1zM559 551h1v1h-1zM561 551h1v1h-1zM563 551h1v1h-1zM565 551h1v1h-1zM567 551h1v1h-1zM569 551h1v1h-1zM571 551h1v1h-1zM573 551h1v1h-1zM575 551h1v1h-1zM577 551h1v1h-1zM579 551h1v1h-1zM581 551h1v1h-1zM583 551h1v1h-1zM585 551h1v1h-1zM587 551h1v1h-1zM589 551h1v1h-1zM591 551h1v1h-1zM593 551h1v1h-1zM595 551h1v1h-1zM597 551h1v1h-1zM599 551h1v1h-1zM601 551h1v1h-1zM603 551h1v1h-1zM605 551h1v1h-1zM607 551h1v1h-1zM609 551h1v1h-1zM611 551h1v1h-1zM613 551h1v1h-1zM615 551h1v1h-1zM617 551h1v1h-1zM619 551h1v1h-1zM621 551h1v1h-1zM623 551h1v1h-1zM625 551h1v1h-1zM627 551h1v1h-1zM629 551h1v1h-1zM631 551h1v1h-1zM633 551h1v1h-1zM635 551h1v1h-1zM637 551h1v1h-1zM639 551h1v1h-1zM641 551h1v1h-1zM643 551h1v1h-1zM645 551h1v1h-1zM647 551h1v1h-1zM649 551h1v1h-1zM651 551h1v1h-1zM653 551h1v1h-1zM655 551h1v1h-1zM657 551h1v1h-1zM659 551h1v1h-1zM661 551h1v1h-1zM663 551h1v1h-1zM665 551h1v1h-1zM667 551h1v1h-1zM669 551h1v1h-1zM671 551h1v1h-1zM673 551h1v1h-1zM675 551h1v1h-1zM677 551h1v1h-1zM679 551h1v1h-1zM681 551h1v1h-1zM683 551h1v1h-1zM685 551h1v1h-1zM687 551h1v1h-1zM689 551h1v1h-1zM691 551h1v1h-1zM693 551h1v1h-1zM695 551h1v1h-1zM697 551h1v1h-1zM699 551h1v1h-1zM701 551h1v1h-1zM703 551h1v1h-1zM705 551h1v1h-1zM707 551h1v1h-1zM709 551h1v1h-1zM711 551h1v1h-1zM713 551h1v1h-1zM715 551h1v1h-1zM717 551h1v1h-1zM719 551h1v1h-1zM721 551h1v1h-1zM723 551h1v1h-1zM725 551h1v1h-1zM727 551h1v1h-1zM729 551h1v1h-1zM731 551h1v1h-1zM733 551h1v1h-1zM735 551h1v1h-1zM737 551h1v1h-1zM739 551h1v1h-1zM741 551h1v1h-1zM743 551h1v1h-1zM745 551h1v1h-1zM747 551h1v1h-1zM749 551h1v1h-1zM751 551h1v1h-1zM753 551h1v1h-1zM755 551h1v1h-1zM757 551h1v1h-1zM759 551h1v1h-1zM761 551h1v1h-1zM763 551h1v1h-1zM765 551h1v1h-1zM767 551h1v1h-1zM769 551h1v1h-1zM771 551h1v1h-1zM773 551h1v1h-1zM775 551h1v1h-1zM777 551h1v1h-1zM779 551h1v1h-1zM781 551h1v1h-1zM783 551h1v1h-1zM785 551h1v1h-1zM787 551h1v1h-1zM789 551h1v1h-1zM791 551h1v1h-1zM793 551h1v1h-1zM795 551h1v1h-1zM797 551h1v1h-1zM799 551h1v1h-1zM801 551h1v1h-1zM803 551h1v1h-1zM805 551h1v1h-1zM807 551h1v1h-1zM809 551h1v1h-1zM811 551h1v1h-1zM813 551h1v1h-1zM815 551h1v1h-1zM817 551h1v1h-1zM819 551h1v1h-1zM821 551h1v1h-1zM823 551h1v1h-1zM825 551h1v1h-1zM827 551h1v1h-1zM829 551h1v1h-1zM831 551h1v1h-1zM833 551h1v1h-1zM835 551h1v1h-1zM837 551h1v1h-1zM839 551h1v1h-1zM841 551h1v1h-1zM843 551h1v1h-1zM845 551h1v1h-1zM847 551h1v1h-1zM849 551h1v1h-1zM851 551h1v1h-1zM853 551h1v1h-1zM855 551h1v1h-1zM857 551h1v1h-1zM859 551h1v1h-1zM861 551h1v1h-1zM863 551h1v1h-1zM865 551h1v1h-1zM867 551h1v1h-1zM869 551h1v1h-1zM871 551h1v1h-1zM873 551h1v1h-1zM875 551h1v1h-1zM877 551h1v1h-1zM879 551h1v1h-1zM881 551h1v1h-1zM883 551h1v1h-1zM885 551h1v1h-1zM887 551h1v1h-1zM889 551h1v1h-1zM891 551h1v1h-1zM893 551h1v1h-1zM895 551h1v1h-1zM897 551h1v1h-1zM899 551h1v1h-1zM901 551h1v1h-1zM903 551h1v1h-1zM905 551h1v1h-1zM907 551h1v1h-1zM909 551h1v1h-1zM911 551h1v1h-1zM913 551h1v1h-1zM915 551h1v1h-1zM917 551h1v1h-1zM919 551h1v1h-1zM921 551h1v1h-1zM923 551h1v1h-1zM925 551h1v1h-1zM927 551h1v1h-1zM929 551h1v1h-1zM931 551h1v1h-1zM933 551h1v1h-1zM935 551h1v1h-1zM937 551h1v1h-1zM939 551h1v1h-1zM941 551h1v1h-1zM943 551h1v1h-1zM945 551h1v1h-1zM947 551h1v1h-1zM949 551h1v1h-1zM951 551h1v1h-1zM953 551h1v1h-1zM955 551h1v1h-1zM957 551h1v1h-1zM959 551h1v1h-1zM961 551h1v1h-1zM963 551h1v1h-1zM965 551h1v1h-1zM967 551h1v1h-1zM969 551h1v1h-1zM971 551h1v1h-1zM973 551h1v1h-1zM975 551h1v1h-1zM977 551h1v1h-1zM979 551h1v1h-1zM981 551h1v1h-1zM983 551h1v1h-1zM985 551h1v1h-1zM987 551h1v1h-1zM989 551h1v1h-1zM991 551h1v1h-1zM993 551h1v1h-1zM995 551h1v1h-1zM997 551h1v1h-1zM999 551h1v1h-1zM1001 551h1v1h-1zM1003 551h1v1h-1zM1005 551h1v1h-1zM1007 551h1v1h-1zM1009 551h1v1h-1zM1011 551h1v1h-1zM1013 551h1v1h-1zM1015 551h1v1h-1zM1017 551h1v1h-1zM1019 551h1v1h-1zM1021 551h1v1h-1zM1023 551h1v1h-1zM1025 551h1v1h-1zM1027 551h1v1h-1zM1029 551h1v1h-1zM1031 551h1v1h-1zM1033 551h1v1h-1zM1035 551h1v1h-1zM1037 551h1v1h-1zM1039 551h1v1h-1zM1041 551h1v1h-1zM1043 551h1v1h-1zM1045 551h1v1h-1zM1047 551h1v1h-1zM1049 551h1v1h-1zM1051 551h1v1h-1zM1053 551h1v1h-1zM1055 551h1v1h-1zM1057 551h1v1h-1zM1059 551h1v1h-1zM1061 551h1v1h-1zM1063 551h1v1h-1zM1065 551h1v1h-1zM1067 551h1v1h-1zM1069 551h1v1h-1zM1071 551h1v1h-1zM1073 551h1v1h-1zM1075 551h1v1h-1zM1077 551h1v1h-1zM1079 551h1v1h-1zM1081 551h1v1h-1zM1083 551h1v1h-1zM1085 551h1v1h-1zM1087 551h1v1h-1zM1089 551h1v1h-1zM1091 551h1v1h-1zM1093 551h1v1h-1zM1095 551h1v1h-1zM1097 551h1v1h-1zM1099 551h1v1h-1zM1101 551h1v1h-1zM1103 551h1v1h-1zM1105 551h1v1h-1zM1107 551h1v1h-1zM1109 551h1v1h-1zM1111 551h1v1h-1zM1113 551h1v1h-1zM1115 551h1v1h-1zM1117 551h1v1h-1zM1119 551h1v1h-1zM1121 551h1v1h-1zM1123 551h1v1h-1zM1125 551h1v1h-1zM1127 551h1v1h-1zM1129 551h1v1h-1zM1131 551h1v1h-1zM1133 551h1v1h-1zM1135 551h1v1h-1zM1137 551h1v1h-1zM1139 551h1v1h-1zM1141 551h1v1h-1zM1143 551h1v1h-1zM1145 551h1v1h-1zM1147 551h1v1h-1zM1149 551h1v1h-1zM1151 551h1v1h-1zM1153 551h1v1h-1zM1155 551h1v1h-1zM1157 551h1v1h-1zM1159 551h1v1h-1zM1161 551h1v1h-1zM1163 551h1v1h-1zM1165 551h1v1h-1zM1167 551h1v1h-1zM1169 551h1v1h-1zM1171 551h1v1h-1zM1173 551h1v1h-1zM1175 551h1v1h-1zM1177 551h1v1h-1zM1179 551h1v1h-1zM1181 551h1v1h-1zM1183 551h1v1h-1zM1185 551h1v1h-1zM1187 551h1v1h-1zM1189 551h1v1h-1zM1191 551h1v1h-1zM1193 551h1v1h-1zM1195 551h1v1h-1zM1197 551h1v1h-1zM1199 551h1v1h-1zM1201 551h1v1h-1zM1203 551h1v1h-1zM1205 551h1v1h-1zM1207 551h1v1h-1zM1209 551h1v1h-1zM1211 551h1v1h-1zM1213 551h1v1h-1zM1215 551h1v1h-1zM1217 551h1v1h-1zM1219 551h1v1h-1zM1221 551h1v1h-1zM1223 551h1v1h-1zM1225 551h1v1h-1zM1227 551h1v1h-1zM1229 551h1v1h-1zM1231 551h1v1h-1zM1233 551h1v1h-1zM1235 551h1v1h-1zM1237 551h1v1h-1zM1239 551h1v1h-1zM1241 551h1v1h-1zM1243 551h1v1h-1zM1245 551h1v1h-1zM1247 551h1v1h-1zM1249 551h1v1h-1zM1251 551h1v1h-1zM1253 551h1v1h-1zM1255 551h1v1h-1zM1257 551h1v1h-1zM1259 551h1v1h-1zM1261 551h1v1h-1zM1263 551h1v1h-1zM1265 551h1v1h-1zM1267 551h1v1h-1zM19 637h1v1h-1zM21 637h1v1h-1zM23 637h1v1h-1zM25 637h1v1h-1zM27 637h1v1h-1zM29 637h1v1h-1zM31 637h1v1h-1zM33 637h1v1h-1zM35 637h1v1h-1zM37 637h1v1h-1zM39 637h1v1h-1zM41 637h1v1h-1zM43 637h1v1h-1zM45 637h1v1h-1zM47 637h1v1h-1zM49 637h1v1h-1zM51 637h1v1h-1zM53 637h1v1h-1zM55 637h1v1h-1zM57 637h1v1h-1zM59 637h1v1h-1zM61 637h1v1h-1zM63 637h1v1h-1zM65 637h1v1h-1zM67 637h1v1h-1zM69 637h1v1h-1zM71 637h1v1h-1zM73 637h1v1h-1zM75 637h1v1h-1zM77 637h1v1h-1zM79 637h1v1h-1zM81 637h1v1h-1zM83 637h1v1h-1zM85 637h1v1h-1zM87 637h1v1h-1zM89 637h1v1h-1zM91 637h1v1h-1zM93 637h1v1h-1zM95 637h1v1h-1zM97 637h1v1h-1zM99 637h1v1h-1zM101 637h1v1h-1zM103 637h1v1h-1zM105 637h1v1h-1zM107 637h1v1h-1zM109 637h1v1h-1zM111 637h1v1h-1zM113 637h1v1h-1zM115 637h1v1h-1zM117 637h1v1h-1zM119 637h1v1h-1zM121 637h1v1h-1zM123 637h1v1h-1zM125 637h1v1h-1zM127 637h1v1h-1zM129 637h1v1h-1zM131 637h1v1h-1zM133 637h1v1h-1zM135 637h1v1h-1zM137 637h1v1h-1zM139 637h1v1h-1zM141 637h1v1h-1zM143 637h1v1h-1zM145 637h1v1h-1zM147 637h1v1h-1zM149 637h1v1h-1zM151 637h1v1h-1zM153 637h1v1h-1zM155 637h1v1h-1zM157 637h1v1h-1zM159 637h1v1h-1zM161 637h1v1h-1zM163 637h1v1h-1zM165 637h1v1h-1zM167 637h1v1h-1zM169 637h1v1h-1zM171 637h1v1h-1zM173 637h1v1h-1zM175 637h1v1h-1zM177 637h1v1h-1zM179 637h1v1h-1zM181 637h1v1h-1zM183 637h1v1h-1zM185 637h1v1h-1zM187 637h1v1h-1zM189 637h1v1h-1zM191 637h1v1h-1zM193 637h1v1h-1zM195 637h1v1h-1zM197 637h1v1h-1zM199 637h1v1h-1zM201 637h1v1h-1zM203 637h1v1h-1zM205 637h1v1h-1zM207 637h1v1h-1zM209 637h1v1h-1zM211 637h1v1h-1zM213 637h1v1h-1zM215 637h1v1h-1zM217 637h1v1h-1zM219 637h1v1h-1zM221 637h1v1h-1zM223 637h1v1h-1zM225 637h1v1h-1zM227 637h1v1h-1zM229 637h1v1h-1zM231 637h1v1h-1zM233 637h1v1h-1zM235 637h1v1h-1zM237 637h1v1h-1zM239 637h1v1h-1zM241 637h1v1h-1zM243 637h1v1h-1zM245 637h1v1h-1zM247 637h1v1h-1zM249 637h1v1h-1zM251 637h1v1h-1zM253 637h1v1h-1zM255 637h1v1h-1zM257 637h1v1h-1zM259 637h1v1h-1zM261 637h1v1h-1zM263 637h1v1h-1zM265 637h1v1h-1zM267 637h1v1h-1zM269 637h1v1h-1zM271 637h1v1h-1zM273 637h1v1h-1zM275 637h1v1h-1zM277 637h1v1h-1zM279 637h1v1h-1zM281 637h1v1h-1zM283 637h1v1h-1zM285 637h1v1h-1zM287 637h1v1h-1zM289 637h1v1h-1zM291 637h1v1h-1zM293 637h1v1h-1zM295 637h1v1h-1zM297 637h1v1h-1zM299 637h1v1h-1zM301 637h1v1h-1zM303 637h1v1h-1zM305 637h1v1h-1zM307 637h1v1h-1zM309 637h1v1h-1zM311 637h1v1h-1zM313 637h1v1h-1zM315 637h1v1h-1zM317 637h1v1h-1zM319 637h1v1h-1zM321 637h1v1h-1zM323 637h1v1h-1zM325 637h1v1h-1zM327 637h1v1h-1zM329 637h1v1h-1zM331 637h1v1h-1zM333 637h1v1h-1zM335 637h1v1h-1zM337 637h1v1h-1zM339 637h1v1h-1zM341 637h1v1h-1zM343 637h1v1h-1zM345 637h1v1h-1zM347 637h1v1h-1zM349 637h1v1h-1zM351 637h1v1h-1zM353 637h1v1h-1zM355 637h1v1h-1zM357 637h1v1h-1zM359 637h1v1h-1zM361 637h1v1h-1zM363 637h1v1h-1zM365 637h1v1h-1zM367 637h1v1h-1zM369 637h1v1h-1zM371 637h1v1h-1zM373 637h1v1h-1zM375 637h1v1h-1zM377 637h1v1h-1zM379 637h1v1h-1zM381 637h1v1h-1zM383 637h1v1h-1zM385 637h1v1h-1zM387 637h1v1h-1zM389 637h1v1h-1zM391 637h1v1h-1zM393 637h1v1h-1zM395 637h1v1h-1zM397 637h1v1h-1zM399 637h1v1h-1zM401 637h1v1h-1zM403 637h1v1h-1zM405 637h1v1h-1zM407 637h1v1h-1zM409 637h1v1h-1zM411 637h1v1h-1zM413 637h1v1h-1zM415 637h1v1h-1zM417 637h1v1h-1zM419 637h1v1h-1zM421 637h1v1h-1zM423 637h1v1h-1zM425 637h1v1h-1zM427 637h1v1h-1zM429 637h1v1h-1zM431 637h1v1h-1zM433 637h1v1h-1zM435 637h1v1h-1zM437 637h1v1h-1zM439 637h1v1h-1zM441 637h1v1h-1zM443 637h1v1h-1zM445 637h1v1h-1zM447 637h1v1h-1zM449 637h1v1h-1zM451 637h1v1h-1zM453 637h1v1h-1zM455 637h1v1h-1zM457 637h1v1h-1zM459 637h1v1h-1zM461 637h1v1h-1zM463 637h1v1h-1zM465 637h1v1h-1zM467 637h1v1h-1zM469 637h1v1h-1zM471 637h1v1h-1zM473 637h1v1h-1zM475 637h1v1h-1zM477 637h1v1h-1zM479 637h1v1h-1zM481 637h1v1h-1zM483 637h1v1h-1zM485 637h1v1h-1zM487 637h1v1h-1zM489 637h1v1h-1zM491 637h1v1h-1zM493 637h1v1h-1zM495 637h1v1h-1zM497 637h1v1h-1zM499 637h1v1h-1zM501 637h1v1h-1zM503 637h1v1h-1zM505 637h1v1h-1zM507 637h1v1h-1zM509 637h1v1h-1zM511 637h1v1h-1zM513 637h1v1h-1zM515 637h1v1h-1zM517 637h1v1h-1zM519 637h1v1h-1zM521 637h1v1h-1zM523 637h1v1h-1zM525 637h1v1h-1zM527 637h1v1h-1zM529 637h1v1h-1zM531 637h1v1h-1zM533 637h1v1h-1zM535 637h1v1h-1zM537 637h1v1h-1zM539 637h1v1h-1zM541 637h1v1h-1zM543 637h1v1h-1zM545 637h1v1h-1zM547 637h1v1h-1zM549 637h1v1h-1zM551 637h1v1h-1zM553 637h1v1h-1zM555 637h1v1h-1zM557 637h1v1h-1zM559 637h1v1h-1zM561 637h1v1h-1zM563 637h1v1h-1zM565 637h1v1h-1zM567 637h1v1h-1zM569 637h1v1h-1zM571 637h1v1h-1zM573 637h1v1h-1zM575 637h1v1h-1zM577 637h1v1h-1zM579 637h1v1h-1zM581 637h1v1h-1zM583 637h1v1h-1zM585 637h1v1h-1zM587 637h1v1h-1zM589 637h1v1h-1zM591 637h1v1h-1zM593 637h1v1h-1zM595 637h1v1h-1zM597 637h1v1h-1zM599 637h1v1h-1zM601 637h1v1h-1zM603 637h1v1h-1zM605 637h1v1h-1zM607 637h1v1h-1zM609 637h1v1h-1zM611 637h1v1h-1zM613 637h1v1h-1zM615 637h1v1h-1zM617 637h1v1h-1zM619 637h1v1h-1zM621 637h1v1h-1zM623 637h1v1h-1zM625 637h1v1h-1zM627 637h1v1h-1zM629 637h1v1h-1zM631 637h1v1h-1zM633 637h1v1h-1zM635 637h1v1h-1zM637 637h1v1h-1zM639 637h1v1h-1zM641 637h1v1h-1zM643 637h1v1h-1zM645 637h1v1h-1zM647 637h1v1h-1zM649 637h1v1h-1zM651 637h1v1h-1zM653 637h1v1h-1zM655 637h1v1h-1zM657 637h1v1h-1zM659 637h1v1h-1zM661 637h1v1h-1zM663 637h1v1h-1zM665 637h1v1h-1zM667 637h1v1h-1zM669 637h1v1h-1zM671 637h1v1h-1zM673 637h1v1h-1zM675 637h1v1h-1zM677 637h1v1h-1zM679 637h1v1h-1zM681 637h1v1h-1zM683 637h1v1h-1zM685 637h1v1h-1zM687 637h1v1h-1zM689 637h1v1h-1zM691 637h1v1h-1zM693 637h1v1h-1zM695 637h1v1h-1zM697 637h1v1h-1zM699 637h1v1h-1zM701 637h1v1h-1zM703 637h1v1h-1zM705 637h1v1h-1zM707 637h1v1h-1zM709 637h1v1h-1zM711 637h1v1h-1zM713 637h1v1h-1zM715 637h1v1h-1zM717 637h1v1h-1zM719 637h1v1h-1zM721 637h1v1h-1zM723 637h1v1h-1zM725 637h1v1h-1zM727 637h1v1h-1zM729 637h1v1h-1zM731 637h1v1h-1zM733 637h1v1h-1zM735 637h1v1h-1zM737 637h1v1h-1zM739 637h1v1h-1zM741 637h1v1h-1zM743 637h1v1h-1zM745 637h1v1h-1zM747 637h1v1h-1zM749 637h1v1h-1zM751 637h1v1h-1zM753 637h1v1h-1zM755 637h1v1h-1zM757 637h1v1h-1zM759 637h1v1h-1zM761 637h1v1h-1zM763 637h1v1h-1zM765 637h1v1h-1zM767 637h1v1h-1zM769 637h1v1h-1zM771 637h1v1h-1zM773 637h1v1h-1zM775 637h1v1h-1zM777 637h1v1h-1zM779 637h1v1h-1zM781 637h1v1h-1zM783 637h1v1h-1zM785 637h1v1h-1zM787 637h1v1h-1zM789 637h1v1h-1zM791 637h1v1h-1zM793 637h1v1h-1zM795 637h1v1h-1zM797 637h1v1h-1zM799 637h1v1h-1zM801 637h1v1h-1zM803 637h1v1h-1zM805 637h1v1h-1zM807 637h1v1h-1zM809 637h1v1h-1zM811 637h1v1h-1zM813 637h1v1h-1zM815 637h1v1h-1zM817 637h1v1h-1zM819 637h1v1h-1zM821 637h1v1h-1zM823 637h1v1h-1zM825 637h1v1h-1zM827 637h1v1h-1zM829 637h1v1h-1zM831 637h1v1h-1zM833 637h1v1h-1zM835 637h1v1h-1zM837 637h1v1h-1zM839 637h1v1h-1zM841 637h1v1h-1zM843 637h1v1h-1zM845 637h1v1h-1zM847 637h1v1h-1zM849 637h1v1h-1zM851 637h1v1h-1zM853 637h1v1h-1zM855 637h1v1h-1zM857 637h1v1h-1zM859 637h1v1h-1zM861 637h1v1h-1zM863 637h1v1h-1zM865 637h1v1h-1zM867 637h1v1h-1zM869 637h1v1h-1zM871 637h1v1h-1zM873 637h1v1h-1zM875 637h1v1h-1zM877 637h1v1h-1zM879 637h1v1h-1zM881 637h1v1h-1zM883 637h1v1h-1zM885 637h1v1h-1zM887 637h1v1h-1zM889 637h1v1h-1zM891 637h1v1h-1zM893 637h1v1h-1zM895 637h1v1h-1zM897 637h1v1h-1zM899 637h1v1h-1zM901 637h1v1h-1zM903 637h1v1h-1zM905 637h1v1h-1zM907 637h1v1h-1zM909 637h1v1h-1zM911 637h1v1h-1zM913 637h1v1h-1zM915 637h1v1h-1zM917 637h1v1h-1zM919 637h1v1h-1zM921 637h1v1h-1zM923 637h1v1h-1zM925 637h1v1h-1zM927 637h1v1h-1zM929 637h1v1h-1zM931 637h1v1h-1zM933 637h1v1h-1zM935 637h1v1h-1zM937 637h1v1h-1zM939 637h1v1h-1zM941 637h1v1h-1zM943 637h1v1h-1zM945 637h1v1h-1zM947 637h1v1h-1zM949 637h1v1h-1zM951 637h1v1h-1zM953 637h1v1h-1zM955 637h1v1h-1zM957 637h1v1h-1zM959 637h1v1h-1zM961 637h1v1h-1zM963 637h1v1h-1zM965 637h1v1h-1zM967 637h1v1h-1zM969 637h1v1h-1zM971 637h1v1h-1zM973 637h1v1h-1zM975 637h1v1h-1zM977 637h1v1h-1zM979 637h1v1h-1zM981 637h1v1h-1zM983 637h1v1h-1zM985 637h1v1h-1zM987 637h1v1h-1zM989 637h1v1h-1zM991 637h1v1h-1zM993 637h1v1h-1zM995 637h1v1h-1zM997 637h1v1h-1zM999 637h1v1h-1zM1001 637h1v1h-1zM1003 637h1v1h-1zM1005 637h1v1h-1zM1007 637h1v1h-1zM1009 637h1v1h-1zM1011 637h1v1h-1zM1013 637h1v1h-1zM1015 637h1v1h-1zM1017 637h1v1h-1zM1019 637h1v1h-1zM1021 637h1v1h-1zM1023 637h1v1h-1zM1025 637h1v1h-1zM1027 637h1v1h-1zM1029 637h1v1h-1zM1031 637h1v1h-1zM1033 637h1v1h-1zM1035 637h1v1h-1zM1037 637h1v1h-1zM1039 637h1v1h-1zM1041 637h1v1h-1zM1043 637h1v1h-1zM1045 637h1v1h-1zM1047 637h1v1h-1zM1049 637h1v1h-1zM1051 637h1v1h-1zM1053 637h1v1h-1zM1055 637h1v1h-1zM1057 637h1v1h-1zM1059 637h1v1h-1zM1061 637h1v1h-1zM1063 637h1v1h-1zM1065 637h1v1h-1zM1067 637h1v1h-1zM1069 637h1v1h-1zM1071 637h1v1h-1zM1073 637h1v1h-1zM1075 637h1v1h-1zM1077 637h1v1h-1zM1079 637h1v1h-1zM1081 637h1v1h-1zM1083 637h1v1h-1zM1085 637h1v1h-1zM1087 637h1v1h-1zM1089 637h1v1h-1zM1091 637h1v1h-1zM1093 637h1v1h-1zM1095 637h1v1h-1zM1097 637h1v1h-1zM1099 637h1v1h-1zM1101 637h1v1h-1zM1103 637h1v1h-1zM1105 637h1v1h-1zM1107 637h1v1h-1zM1109 637h1v1h-1zM1111 637h1v1h-1zM1113 637h1v1h-1zM1115 637h1v1h-1zM1117 637h1v1h-1zM1119 637h1v1h-1zM1121 637h1v1h-1zM1123 637h1v1h-1zM1125 637h1v1h-1zM1127 637h1v1h-1zM1129 637h1v1h-1zM1131 637h1v1h-1zM1133 637h1v1h-1zM1135 637h1v1h-1zM1137 637h1v1h-1zM1139 637h1v1h-1zM1141 637h1v1h-1zM1143 637h1v1h-1zM1145 637h1v1h-1zM1147 637h1v1h-1zM1149 637h1v1h-1zM1151 637h1v1h-1zM1153 637h1v1h-1zM1155 637h1v1h-1zM1157 637h1v1h-1zM1159 637h1v1h-1zM1161 637h1v1h-1zM1163 637h1v1h-1zM1165 637h1v1h-1zM1167 637h1v1h-1zM1169 637h1v1h-1zM1171 637h1v1h-1zM1173 637h1v1h-1zM1175 637h1v1h-1zM1177 637h1v1h-1zM1179 637h1v1h-1zM1181 637h1v1h-1zM1183 637h1v1h-1zM1185 637h1v1h-1zM1187 637h1v1h-1zM1189 637h1v1h-1zM1191 637h1v1h-1zM1193 637h1v1h-1zM1195 637h1v1h-1zM1197 637h1v1h-1zM1199 637h1v1h-1zM1201 637h1v1h-1zM1203 637h1v1h-1zM1205 637h1v1h-1zM1207 637h1v1h-1zM1209 637h1v1h-1zM1211 637h1v1h-1zM1213 637h1v1h-1zM1215 637h1v1h-1zM1217 637h1v1h-1zM1219 637h1v1h-1zM1221 637h1v1h-1zM1223 637h1v1h-1zM1225 637h1v1h-1zM1227 637h1v1h-1zM1229 637h1v1h-1zM1231 637h1v1h-1zM1233 637h1v1h-1zM1235 637h1v1h-1zM1237 637h1v1h-1zM1239 637h1v1h-1zM1241 637h1v1h-1zM1243 637h1v1h-1zM1245 637h1v1h-1zM1247 637h1v1h-1zM1249 637h1v1h-1zM1251 637h1v1h-1zM1253 637h1v1h-1zM1255 637h1v1h-1zM1257 637h1v1h-1zM1259 637h1v1h-1zM1261 637h1v1h-1zM1263 637h1v1h-1zM1265 637h1v1h-1zM1267 637h1v1h-1zM42 166h1v1h-1zM67 166h1v1h-1zM92 166h1v1h-1zM117 166h1v1h-1zM142 166h1v1h-1zM167 166h1v1h-1zM192 166h1v1h-1zM217 166h1v1h-1zM242 166h1v1h-1zM268 166h1v1h-1zM293 166h1v1h-1zM318 166h1v1h-1zM343 166h1v1h-1zM368 166h1v1h-1zM393 166h1v1h-1zM418 166h1v1h-1zM443 166h1v1h-1zM468 166h1v1h-1zM493 166h1v1h-1zM518 166h1v1h-1zM543 166h1v1h-1zM568 166h1v1h-1zM593 166h1v1h-1zM618 166h1v1h-1zM643 166h1v1h-1zM668 166h1v1h-1zM693 166h1v1h-1zM718 166h1v1h-1zM743 166h1v1h-1zM768 166h1v1h-1zM793 166h1v1h-1zM818 166h1v1h-1zM843 166h1v1h-1zM868 166h1v1h-1zM894 166h1v1h-1zM919 166h1v1h-1zM944 166h1v1h-1zM969 166h1v1h-1zM994 166h1v1h-1zM1019 166h1v1h-1zM1044 166h1v1h-1zM1069 166h1v1h-1zM1094 166h1v1h-1zM1119 166h1v1h-1zM1144 166h1v1h-1zM1169 166h1v1h-1zM1194 166h1v1h-1zM1219 166h1v1h-1zM1244 166h1v1h-1z"/>
<path fill="#9a9a9a" d="M644 39h1v682h-1zM18 380h1251v1h-1251zM18 378h1v5h-1zM43 378h1v5h-1zM68 378h1v5h-1zM93 378h1v5h-1zM118 378h1v5h-1zM143 378h1v5h-1zM168 378h1v5h-1zM193 378h1v5h-1zM218 378h1v5h-1zM243 378h1v5h-1zM268 378h1v5h-1zM293 378h1v5h-1zM318 378h1v5h-1zM343 378h1v5h-1zM368 378h1v5h-1zM393 378h1v5h-1zM418 378h1v5h-1zM443 378h1v5h-1zM468 378h1v5h-1zM493 378h1v5h-1zM518 378h1v5h-1zM543 378h1v5h-1zM568 378h1v5h-1zM593 378h1v5h-1zM618 378h1v5h-1zM669 378h1v5h-1zM694 378h1v5h-1zM719 378h1v5h-1zM744 378h1v5h-1zM769 378h1v5h-1zM794 378h1v5h-1zM819 378h1v5h-1zM844 378h1v5h-1zM869 378h1v5h-1zM894 378h1v5h-1zM919 378h1v5h-1zM944 378h1v5h-1zM969 378h1v5h-1zM994 378h1v5h-1zM1019 378h1v5h-1zM1044 378h1v5h-1zM1069 378h1v5h-1zM1094 378h1v5h-1zM1119 378h1v5h-1zM1144 378h1v5h-1zM1169 378h1v5h-1zM1194 378h1v5h-1zM1219 378h1v5h-1zM1244 378h1v5h-1zM642 55h5v1h-5zM642 72h5v1h-5zM642 89h5v1h-5zM642 106h5v1h-5zM642 124h5v1h-5zM642 141h5v1h-5zM642 158h5v1h-5zM642 175h5v1h-5zM642 192h5v1h-5zM642 209h5v1h-5zM642 226h5v1h-5zM642 243h5v1h-5zM642 260h5v1h-5zM642 277h5v1h-5zM642 295h5v1h-5zM642 312h5v1h-5zM642 329h5v1h-5zM642 346h5v1h-5zM642 363h5v1h-5zM642 397h5v1h-5zM642 414h5v1h-5zM642 431h5v1h-5zM642 448h5v1h-5zM642 466h5v1h-5zM642 483h5v1h-5zM642 500h5v1h-5zM642 517h5v1h-5zM642 534h5v1h-5zM642 551h5v1h-5zM642 568h5v1h-5zM642 585h5v1h-5zM642 602h5v1h-5zM642 619h5v1h-5zM642 637h5v1h-5zM642 654h5v1h-5zM642 671h5v1h-5zM642 688h5v1h-5zM642 705h5v1h-5z"/>
<rect x="17.5" y="38.5" width="1252" height="683" fill="none" stroke="#8c8c8c" stroke-width="1"/>
<path fill="#5a5400" d="M18 66h1251v6h-1251zM681 72h1v2h-1zM116 64h1v2h-1zM766 72h2v1h-2zM94 65h1v2h-1zM510 65h1v2h-1zM1176 65h2v2h-2zM1211 72h2v2h-2zM830 65h1v2h-1zM1158 72h1v1h-1zM313 72h2v1h-2zM1165 72h1v1h-1zM1209 72h1v1h-1zM217 72h1v2h-1zM140 72h1v2h-1zM1106 65h1v2h-1zM1217 72h1v1h-1zM526 72h2v1h-2zM185 72h2v1h-2zM721 72h1v2h-1zM167 65h1v2h-1zM718 65h1v2h-1zM98 72h1v2h-1zM1191 72h1v1h-1zM735 72h2v1h-2zM158 72h1v1h-1zM151 64h1v2h-1zM1201 72h1v1h-1zM808 72h1v1h-1zM963 64h1v2h-1zM1029 65h1v2h-1zM525 65h1v2h-1zM358 64h1v2h-1zM298 72h2v1h-2zM868 72h2v1h-2zM490 65h1v2h-1zM493 72h1v1h-1zM1224 65h1v2h-1zM316 65h2v2h-2zM1177 65h2v2h-2zM1073 72h2v2h-2zM128 64h2v2h-2zM821 65h1v2h-1zM1004 72h1v1h-1zM155 72h1v1h-1zM243 65h1v2h-1zM18 72h2v1h-2zM762 72h1v1h-1zM788 65h1v2h-1zM1251 65h1v2h-1zM1017 72h1v1h-1zM1008 65h1v2h-1zM719 72h1v2h-1zM348 72h1v2h-1zM758 64h1v2h-1zM1099 64h1v2h-1zM552 72h1v1h-1zM474 72h2v1h-2zM474 72h1v1h-1zM838 72h1v1h-1zM1078 64h1v2h-1zM75 72h1v1h-1zM414 72h1v1h-1zM733 72h1v1h-1zM469 65h1v2h-1zM709 64h2v2h-2zM21 64h1v2h-1zM191 72h1v1h-1zM426 65h1v2h-1zM698 64h1v2h-1zM966 65h2v2h-2zM343 65h1v2h-1zM327 72h1v2h-1zM317 72h2v1h-2zM735 64h1v2h-1zM61 64h2v2h-2zM228 72h1v1h-1zM416 72h1v1h-1zM533 64h1v2h-1zM1219 64h1v2h-1zM286 64h1v2h-1zM956 72h2v1h-2zM1045 65h2v2h-2zM1063 65h1v2h-1zM1264 65h1v2h-1zM307 64h1v2h-1zM1157 64h2v2h-2zM1104 72h1v2h-1zM134 65h1v2h-1zM218 72h2v1h-2zM147 64h2v2h-2zM1259 72h2v1h-2zM944 72h1v2h-1zM525 72h1v2h-1zM432 72h1v1h-1zM267 65h1v2h-1zM510 65h2v2h-2zM638 72h1v2h-1zM767 65h1v2h-1zM467 72h1v1h-1zM1015 64h1v2h-1zM348 72h2v1h-2zM712 65h1v2h-1zM206 72h1v1h-1zM1152 64h1v2h-1zM805 64h1v2h-1zM1067 72h1v1h-1zM232 65h1v2h-1zM389 65h1v2h-1zM547 64h2v2h-2zM1186 65h1v2h-1zM589 64h1v2h-1zM889 72h1v1h-1zM199 72h1v2h-1zM473 65h1v2h-1zM41 64h1v2h-1zM566 72h1v2h-1zM506 72h1v1h-1zM121 65h2v2h-2zM642 72h1v1h-1zM930 72h1v1h-1zM728 72h1v1h-1zM49 64h2v2h-2zM406 72h1v1h-1zM235 72h2v1h-2zM1031 72h1v2h-1zM648 72h1v1h-1zM424 72h2v2h-2zM304 65h1v2h-1zM283 64h2v2h-2zM541 65h1v2h-1zM798 72h2v1h-2zM1244 65h1v2h-1zM958 65h1v2h-1zM25 65h2v2h-2zM680 65h1v2h-1zM748 65h1v2h-1zM189 64h2v2h-2zM429 65h1v2h-1zM559 72h1v1h-1zM1219 65h1v2h-1zM641 72h1v2h-1zM1101 72h1v2h-1zM1239 65h2v2h-2zM1030 64h2v2h-2zM314 64h2v2h-2zM897 72h2v1h-2zM1090 72h2v1h-2zM1214 72h2v2h-2zM488 65h1v2h-1zM756 72h1v1h-1zM1161 65h2v2h-2zM1106 72h1v1h-1zM24 65h2v2h-2zM1048 72h1v2h-1zM1095 64h1v2h-1zM534 72h1v1h-1zM438 64h1v2h-1zM1029 72h1v1h-1zM606 72h2v2h-2zM424 65h1v2h-1zM538 72h2v1h-2zM1180 65h1v2h-1zM1012 64h1v2h-1zM463 72h1v2h-1zM1075 65h1v2h-1zM260 72h2v1h-2zM656 72h1v1h-1zM611 64h1v2h-1zM568 65h1v2h-1zM1208 64h2v2h-2zM554 72h1v2h-1zM1059 65h2v2h-2zM765 65h1v2h-1zM68 65h2v2h-2zM941 64h1v2h-1zM870 65h1v2h-1zM696 65h1v2h-1zM263 72h1v2h-1zM42 72h1v1h-1zM780 65h2v2h-2zM174 65h1v2h-1zM116 65h2v2h-2zM602 72h1v1h-1zM562 65h1v2h-1zM782 72h1v1h-1zM837 72h2v2h-2zM434 72h1v2h-1zM859 65h2v2h-2zM604 64h1v2h-1zM367 65h1v2h-1zM627 64h2v2h-2zM550 65h1v2h-1zM1007 72h1v1h-1zM360 72h1v1h-1zM1043 72h1v2h-1zM468 65h1v2h-1zM893 65h1v2h-1zM203 64h1v2h-1zM671 65h2v2h-2zM431 72h2v1h-2zM802 64h1v2h-1zM789 65h1v2h-1zM586 72h1v1h-1zM1048 72h1v1h-1zM573 72h1v1h-1zM931 65h1v2h-1zM278 64h1v2h-1zM1220 65h1v2h-1zM1099 72h1v1h-1zM241 65h2v2h-2zM241 72h2v2h-2zM954 65h1v2h-1zM275 65h2v2h-2zM640 72h2v1h-2zM1099 72h2v1h-2zM221 64h2v2h-2zM410 65h2v2h-2zM20 65h1v2h-1zM588 72h2v1h-2zM991 72h2v1h-2zM77 72h2v2h-2zM647 65h1v2h-1zM878 65h2v2h-2zM887 72h1v1h-1zM87 72h2v1h-2zM760 72h1v1h-1zM616 72h2v1h-2zM438 65h1v2h-1zM415 65h1v2h-1zM622 64h1v2h-1zM1267 65h1v2h-1zM872 72h1v2h-1zM317 72h1v1h-1zM66 72h1v1h-1zM124 72h1v1h-1zM938 72h1v2h-1zM249 72h1v1h-1zM408 64h2v2h-2zM975 64h2v2h-2zM793 72h1v1h-1zM364 65h1v2h-1zM183 65h2v2h-2zM442 65h1v2h-1zM197 65h1v2h-1zM781 72h1v1h-1zM680 65h1v2h-1zM859 64h1v2h-1zM101 65h1v2h-1zM144 64h1v2h-1zM1258 65h1v2h-1zM107 64h2v2h-2zM666 72h1v1h-1zM1237 72h2v1h-2zM67 72h1v1h-1zM971 72h1v1h-1zM898 72h1v1h-1zM392 64h1v2h-1zM327 72h1v1h-1zM961 64h1v2h-1zM1066 65h1v2h-1zM853 65h1v2h-1zM1149 72h1v1h-1zM233 72h1v2h-1zM190 65h1v2h-1zM933 65h1v2h-1zM961 72h2v1h-2zM1120 72h2v1h-2zM619 64h1v2h-1zM781 65h1v2h-1zM917 65h1v2h-1zM332 64h1v2h-1zM686 65h1v2h-1zM1057 72h2v1h-2zM968 72h1v1h-1zM990 72h1v1h-1zM783 65h1v2h-1zM262 64h2v2h-2zM415 72h1v2h-1zM382 65h2v2h-2zM30 64h2v2h-2zM734 65h1v2h-1zM307 65h1v2h-1zM1245 72h1v1h-1zM688 65h1v2h-1zM657 65h1v2h-1zM1140 65h1v2h-1zM827 72h1v2h-1zM1111 65h1v2h-1zM573 65h2v2h-2zM647 65h1v2h-1zM1178 72h1v1h-1zM55 72h1v2h-1zM421 65h1v2h-1zM30 65h1v2h-1zM250 72h1v2h-1zM764 65h1v2h-1zM48 65h2v2h-2zM830 64h1v2h-1zM1051 65h1v2h-1zM349 72h1v1h-1zM803 65h1v2h-1zM277 72h1v1h-1zM662 64h1v2h-1zM194 72h2v2h-2zM346 72h1v2h-1zM846 72h1v1h-1zM392 72h1v1h-1zM1078 65h1v2h-1zM324 64h1v2h-1zM102 72h2v1h-2zM681 64h1v2h-1zM1144 72h1v2h-1zM878 65h1v2h-1zM815 72h1v2h-1zM915 65h2v2h-2zM1020 65h2v2h-2zM956 72h1v1h-1zM237 65h1v2h-1zM766 65h2v2h-2zM1062 72h1v2h-1zM284 64h1v2h-1zM1065 64h1v2h-1zM296 65h2v2h-2zM242 65h1v2h-1zM356 72h2v1h-2zM152 72h2v1h-2zM343 64h1v2h-1zM952 64h1v2h-1zM444 72h2v2h-2zM504 65h1v2h-1zM390 64h1v2h-1zM689 72h1v1h-1zM253 72h1v2h-1zM754 72h1v2h-1zM1085 72h1v1h-1zM1115 72h1v2h-1zM778 65h2v2h-2zM317 65h1v2h-1zM489 64h1v2h-1zM624 72h1v1h-1zM1217 72h1v2h-1zM21 72h1v1h-1zM613 72h1v1h-1zM1067 65h1v2h-1zM1018 64h1v2h-1zM63 64h1v2h-1zM640 65h2v2h-2zM477 65h2v2h-2zM291 64h1v2h-1zM342 65h2v2h-2zM323 65h2v2h-2zM314 72h1v1h-1zM559 72h1v2h-1zM1169 72h2v2h-2zM1202 64h2v2h-2zM1027 65h1v2h-1zM144 72h1v1h-1zM504 65h1v2h-1zM1146 72h1v1h-1zM864 64h2v2h-2zM1056 72h1v2h-1zM375 72h1v1h-1zM117 72h2v1h-2zM1120 65h2v2h-2zM970 64h1v2h-1zM377 65h1v2h-1zM493 72h1v1h-1zM557 72h1v2h-1zM1152 72h2v2h-2zM561 65h1v2h-1zM1057 65h1v2h-1zM433 72h2v1h-2zM411 72h1v2h-1zM507 64h2v2h-2zM1116 64h2v2h-2zM31 72h1v2h-1zM496 72h1v1h-1zM819 72h1v2h-1zM369 65h1v2h-1zM236 72h1v1h-1z"/>
<path fill="#8e8600" d="M18 67h1251v4h-1251z"/>
<path fill="#b2a900" d="M18 68h1251v2h-1251z"/>
<path fill="#7c003e" d="M18 206h374v4h-374zM392 148h1v62h-1zM394 150h1v27h-1zM393 149h7v5h-7zM400 148h869v7h-869zM545 155h1v1h-1zM541 155h2v1h-2zM1113 147h1v2h-1zM1004 155h1v2h-1zM1080 146h1v2h-1zM509 147h1v2h-1zM434 146h1v2h-1zM1244 155h2v1h-2zM888 147h2v2h-2zM609 147h1v2h-1zM667 147h1v2h-1zM449 155h1v1h-1zM1187 155h2v1h-2zM694 155h1v1h-1zM431 147h1v2h-1zM880 155h2v2h-2zM621 155h1v2h-1zM1239 147h1v2h-1zM936 147h1v2h-1zM756 147h2v2h-2zM1215 155h1v2h-1zM755 155h2v1h-2zM991 155h1v1h-1zM1116 147h1v2h-1zM1051 155h1v2h-1zM974 155h2v1h-2zM764 147h2v2h-2zM488 146h1v2h-1zM780 147h1v2h-1zM958 155h1v2h-1zM639 155h1v2h-1zM1008 155h2v2h-2zM434 147h2v2h-2zM559 155h1v2h-1zM967 155h1v1h-1zM849 155h1v2h-1zM636 147h2v2h-2zM1113 147h1v2h-1zM708 155h2v1h-2zM1140 147h2v2h-2zM734 155h1v1h-1zM641 147h1v2h-1zM1146 155h1v2h-1zM504 147h1v2h-1zM1213 147h1v2h-1zM680 146h1v2h-1zM687 147h1v2h-1zM434 147h2v2h-2zM627 155h2v1h-2zM874 147h2v2h-2zM1155 146h1v2h-1zM840 155h2v2h-2zM1062 147h2v2h-2zM1139 155h2v2h-2zM997 155h2v1h-2zM1056 147h1v2h-1zM666 155h1v1h-1zM648 155h2v2h-2zM1044 147h1v2h-1zM866 147h2v2h-2zM1091 155h1v2h-1zM735 155h1v1h-1zM508 146h1v2h-1zM564 155h1v2h-1zM756 146h1v2h-1zM954 147h2v2h-2zM416 155h1v2h-1zM751 147h1v2h-1zM1100 146h1v2h-1zM1146 155h1v2h-1zM457 147h1v2h-1zM462 147h1v2h-1zM1043 155h1v2h-1zM671 147h2v2h-2zM810 155h2v1h-2zM1220 155h1v1h-1zM568 147h2v2h-2zM597 146h2v2h-2zM631 155h1v1h-1zM1082 155h1v1h-1zM701 155h2v1h-2zM1198 155h1v1h-1zM673 155h2v1h-2zM836 155h1v1h-1zM1224 155h1v1h-1zM650 155h1v1h-1zM896 146h1v2h-1zM1075 155h1v1h-1zM794 146h1v2h-1zM1202 155h2v1h-2zM1048 155h2v1h-2zM614 155h2v1h-2zM656 155h2v1h-2zM639 147h1v2h-1zM1203 147h2v2h-2zM571 155h2v2h-2zM1200 146h2v2h-2zM1258 147h2v2h-2zM618 155h2v1h-2zM1087 155h2v1h-2zM670 147h1v2h-1zM904 155h1v1h-1zM547 155h1v1h-1zM568 155h2v1h-2zM564 155h1v2h-1zM976 147h1v2h-1zM783 146h1v2h-1zM584 155h2v2h-2zM429 147h2v2h-2zM1154 155h1v1h-1zM922 147h1v2h-1zM618 155h2v1h-2zM746 146h1v2h-1zM749 146h2v2h-2zM1189 155h1v1h-1zM750 146h1v2h-1zM1246 147h1v2h-1zM813 147h2v2h-2zM753 155h2v1h-2zM1210 147h1v2h-1zM1130 146h2v2h-2zM489 155h1v1h-1zM1140 155h1v2h-1zM987 147h1v2h-1zM406 147h2v2h-2zM1184 155h2v2h-2zM1026 147h2v2h-2zM1089 155h2v2h-2zM484 146h2v2h-2zM868 155h1v1h-1zM1079 147h1v2h-1zM1193 146h1v2h-1zM777 155h1v1h-1zM975 155h1v1h-1zM831 147h1v2h-1zM979 155h1v1h-1zM981 155h1v1h-1zM989 155h1v1h-1zM468 147h2v2h-2zM1006 155h2v1h-2zM886 155h2v1h-2zM484 155h1v1h-1zM1041 147h1v2h-1zM1100 155h1v1h-1zM524 147h1v2h-1zM1136 155h1v2h-1zM1162 147h1v2h-1zM1192 155h2v1h-2zM1147 155h1v2h-1zM970 155h1v2h-1zM660 155h1v2h-1zM432 147h2v2h-2zM1103 155h1v1h-1zM718 146h1v2h-1zM1254 147h1v2h-1zM776 155h2v1h-2zM881 155h1v1h-1zM771 155h1v2h-1zM1221 147h1v2h-1zM678 155h2v1h-2zM699 146h2v2h-2zM1120 155h2v1h-2zM1020 155h1v1h-1zM1015 155h2v1h-2zM652 146h1v2h-1zM1016 155h1v1h-1zM690 155h1v1h-1zM674 146h1v2h-1zM695 155h2v1h-2zM680 155h2v2h-2zM1195 155h1v2h-1zM487 155h1v1h-1zM605 155h2v1h-2zM716 155h2v1h-2zM876 155h1v2h-1zM1169 147h1v2h-1zM953 147h1v2h-1zM638 146h1v2h-1zM1253 155h1v2h-1zM1003 147h1v2h-1zM494 146h1v2h-1zM771 155h1v1h-1zM1198 155h1v1h-1zM445 155h1v1h-1zM508 147h1v2h-1zM559 147h1v2h-1zM687 155h1v1h-1zM434 146h1v2h-1zM1000 155h1v1h-1zM836 147h2v2h-2zM1238 155h1v1h-1zM1263 147h1v2h-1zM787 147h1v2h-1zM970 146h1v2h-1zM898 155h1v2h-1zM1055 147h2v2h-2zM492 146h1v2h-1zM1056 146h2v2h-2zM802 147h1v2h-1zM640 155h1v1h-1zM439 155h1v1h-1zM966 155h1v1h-1zM1205 155h2v2h-2zM1179 155h1v1h-1zM548 147h1v2h-1zM1093 155h2v2h-2zM851 155h1v1h-1zM731 147h1v2h-1zM783 147h1v2h-1zM644 155h2v1h-2zM879 155h1v1h-1zM560 155h1v1h-1zM1033 155h2v1h-2zM1196 147h1v2h-1zM1262 147h1v2h-1zM747 147h1v2h-1zM518 155h1v1h-1zM626 155h1v2h-1zM862 155h1v1h-1zM552 147h1v2h-1zM559 146h1v2h-1zM742 155h1v1h-1zM511 147h1v2h-1zM557 155h1v2h-1zM1206 155h1v2h-1zM888 155h1v1h-1zM1172 147h1v2h-1zM667 155h1v1h-1zM799 147h1v2h-1zM1252 155h1v1h-1zM1055 146h1v2h-1zM923 147h2v2h-2zM693 147h1v2h-1zM818 146h1v2h-1zM541 155h2v1h-2zM1128 146h1v2h-1zM1248 146h2v2h-2zM907 155h1v1h-1zM540 155h2v2h-2zM1231 147h1v2h-1zM410 146h2v2h-2zM817 155h1v2h-1zM1230 147h2v2h-2zM904 147h1v2h-1zM536 155h1v1h-1zM590 155h1v1h-1zM567 155h2v2h-2zM404 147h2v2h-2zM473 146h1v2h-1zM1236 155h1v2h-1zM790 155h1v1h-1zM510 155h1v1h-1zM925 146h1v2h-1zM421 147h1v2h-1zM1033 147h1v2h-1zM656 155h1v1h-1zM498 155h2v1h-2zM667 146h2v2h-2zM990 147h2v2h-2zM854 147h2v2h-2zM109 205h1v2h-1zM270 210h1v1h-1zM80 205h2v2h-2zM321 205h1v2h-1zM360 210h2v1h-2zM102 210h1v2h-1zM217 210h2v2h-2zM287 205h1v2h-1zM191 205h2v2h-2zM241 210h2v1h-2zM223 210h1v1h-1zM282 204h1v2h-1zM145 210h2v2h-2zM23 204h1v2h-1zM53 205h2v2h-2zM360 205h1v2h-1zM221 210h1v2h-1zM41 210h1v1h-1zM346 210h2v2h-2zM157 210h1v2h-1zM69 204h1v2h-1zM240 205h1v2h-1zM75 204h1v2h-1zM79 204h1v2h-1zM61 204h1v2h-1zM243 205h1v2h-1zM226 210h1v1h-1zM62 210h1v1h-1zM330 210h1v2h-1zM215 204h1v2h-1zM253 210h1v2h-1zM262 205h1v2h-1zM142 205h2v2h-2zM297 204h1v2h-1zM24 210h1v1h-1zM183 210h1v1h-1zM163 210h1v1h-1zM47 210h1v2h-1zM52 210h1v1h-1zM354 205h1v2h-1z"/>
<path fill="#ff0088" d="M18 207h374v2h-374zM395 150h5v2h-5zM400 150h869v3h-869z"/>
<path fill="#000088" d="M18 237h1251v4h-1251zM393 241h1v54h-1zM743 241h1v2h-1zM479 241h2v2h-2zM334 235h1v2h-1zM305 241h2v2h-2zM584 241h2v1h-2zM991 235h2v2h-2zM278 236h1v2h-1zM858 241h2v1h-2zM1037 235h1v2h-1zM873 241h1v2h-1zM1261 236h2v2h-2zM955 236h1v2h-1zM740 235h2v2h-2zM805 241h1v2h-1zM1041 236h1v2h-1zM1117 236h1v2h-1zM1196 236h1v2h-1zM694 235h1v2h-1zM685 236h1v2h-1zM70 235h1v2h-1zM632 241h1v2h-1zM913 241h2v2h-2zM898 236h1v2h-1zM1235 241h1v1h-1zM157 241h1v1h-1zM784 241h2v2h-2zM1193 236h1v2h-1zM1014 235h2v2h-2zM721 241h2v1h-2zM367 236h1v2h-1zM654 241h1v2h-1zM621 241h2v1h-2zM338 241h2v1h-2zM1052 241h1v1h-1zM141 241h2v1h-2zM741 241h2v2h-2zM104 241h1v1h-1zM646 241h2v1h-2zM641 236h2v2h-2zM49 241h1v1h-1zM1037 241h2v1h-2zM1106 241h1v2h-1zM424 236h1v2h-1zM339 241h2v1h-2zM77 236h2v2h-2zM1022 241h2v1h-2zM145 241h2v2h-2zM679 236h1v2h-1zM582 236h2v2h-2zM221 241h2v1h-2zM732 235h1v2h-1zM58 236h2v2h-2zM107 235h1v2h-1zM528 236h2v2h-2zM373 236h1v2h-1zM874 241h1v1h-1zM515 241h2v2h-2zM1215 236h1v2h-1zM1010 236h1v2h-1zM373 236h1v2h-1zM33 241h1v1h-1zM1168 236h2v2h-2zM807 235h1v2h-1zM270 236h2v2h-2zM519 236h1v2h-1zM723 236h1v2h-1zM69 236h1v2h-1zM283 236h2v2h-2zM279 241h1v1h-1zM344 236h2v2h-2zM847 235h1v2h-1zM626 241h2v1h-2zM483 241h2v1h-2zM552 241h1v2h-1zM771 241h1v2h-1zM1062 236h2v2h-2zM1068 236h2v2h-2zM806 235h2v2h-2zM315 236h2v2h-2zM194 241h1v1h-1zM403 241h1v1h-1zM1168 241h2v1h-2zM412 236h1v2h-1zM481 235h1v2h-1zM596 236h2v2h-2zM288 241h1v1h-1zM768 241h2v2h-2zM737 241h1v2h-1zM965 236h1v2h-1zM218 236h1v2h-1zM1265 241h2v2h-2zM100 235h1v2h-1zM900 236h1v2h-1zM797 241h2v1h-2zM385 241h1v2h-1zM1037 241h1v1h-1zM1196 236h1v2h-1zM604 241h2v2h-2zM114 241h2v1h-2zM94 241h1v1h-1zM194 235h1v2h-1zM470 236h1v2h-1zM886 236h2v2h-2zM1048 241h2v2h-2zM945 241h2v2h-2zM439 235h1v2h-1zM1020 241h1v2h-1zM1163 235h1v2h-1zM501 241h1v1h-1zM362 236h1v2h-1zM430 241h1v1h-1zM1014 241h1v2h-1zM513 235h1v2h-1zM290 241h1v2h-1zM631 235h1v2h-1zM1221 241h1v2h-1zM259 241h1v2h-1zM335 241h1v1h-1zM440 236h1v2h-1zM756 236h1v2h-1zM593 236h2v2h-2zM650 236h1v2h-1zM682 235h1v2h-1zM610 236h1v2h-1zM40 236h1v2h-1zM697 241h2v1h-2zM240 241h1v1h-1zM406 241h1v1h-1zM753 241h2v1h-2zM532 241h1v1h-1zM74 236h1v2h-1zM624 235h2v2h-2zM363 235h1v2h-1zM687 235h1v2h-1zM673 236h2v2h-2zM774 241h1v1h-1zM136 235h2v2h-2zM843 241h1v1h-1zM884 236h1v2h-1zM1252 241h1v1h-1zM483 236h2v2h-2zM840 236h1v2h-1zM999 235h1v2h-1zM23 235h2v2h-2zM889 236h2v2h-2zM131 241h1v1h-1zM146 235h1v2h-1zM354 236h1v2h-1zM1171 241h2v1h-2zM978 236h2v2h-2zM961 235h2v2h-2zM334 241h2v2h-2zM184 241h1v2h-1zM696 241h1v2h-1zM1187 236h1v2h-1zM298 236h2v2h-2zM75 241h1v2h-1zM934 241h1v2h-1zM1203 235h1v2h-1zM755 241h2v1h-2zM829 236h1v2h-1zM433 241h1v1h-1zM537 241h1v2h-1zM533 241h1v2h-1zM956 235h2v2h-2zM249 241h2v2h-2zM182 241h2v1h-2zM918 235h2v2h-2zM1056 241h1v2h-1zM1073 235h1v2h-1zM1132 236h2v2h-2zM991 241h1v1h-1zM135 236h1v2h-1zM103 235h1v2h-1zM959 235h1v2h-1zM890 241h1v2h-1zM430 241h2v1h-2zM362 236h2v2h-2zM41 241h1v1h-1zM781 241h2v1h-2zM1019 235h1v2h-1zM222 236h2v2h-2zM249 235h1v2h-1zM539 235h1v2h-1zM61 241h2v1h-2zM250 241h1v1h-1zM169 241h1v1h-1zM1153 241h2v2h-2zM797 241h2v1h-2zM1120 241h1v1h-1zM46 236h1v2h-1zM1045 236h1v2h-1zM170 235h2v2h-2zM1246 236h1v2h-1zM936 235h2v2h-2zM173 235h1v2h-1zM655 241h2v2h-2zM107 236h2v2h-2zM975 236h1v2h-1zM742 236h2v2h-2zM1008 236h1v2h-1zM958 241h2v1h-2zM316 241h1v1h-1zM805 235h1v2h-1zM748 241h2v2h-2zM302 241h1v2h-1zM213 241h1v2h-1zM1188 241h1v1h-1zM505 241h1v2h-1zM165 236h2v2h-2zM760 241h2v1h-2zM735 241h2v1h-2zM702 236h2v2h-2zM679 241h1v2h-1zM770 241h1v1h-1zM326 236h2v2h-2zM946 236h2v2h-2zM637 241h2v1h-2zM312 236h1v2h-1zM1189 241h1v1h-1zM407 241h1v2h-1zM384 236h1v2h-1zM749 241h2v1h-2zM156 241h1v1h-1zM582 241h2v1h-2zM355 241h1v2h-1zM59 236h1v2h-1zM428 241h1v2h-1zM221 235h1v2h-1zM282 241h1v1h-1zM1196 236h1v2h-1zM403 235h1v2h-1zM679 241h1v1h-1zM687 241h1v2h-1zM1013 235h1v2h-1zM375 236h1v2h-1zM196 241h1v1h-1zM1242 236h1v2h-1zM70 241h2v2h-2zM659 235h2v2h-2zM692 236h1v2h-1zM449 236h1v2h-1zM758 235h2v2h-2zM1223 241h1v2h-1zM1250 241h1v2h-1zM546 241h1v1h-1zM651 241h2v2h-2zM946 241h1v2h-1zM1102 241h1v1h-1zM36 241h1v2h-1zM760 235h1v2h-1zM838 241h1v1h-1zM292 235h2v2h-2zM437 241h1v1h-1zM1259 236h1v2h-1zM349 241h1v2h-1zM514 236h1v2h-1zM722 241h1v1h-1zM452 236h1v2h-1zM49 235h1v2h-1z"/>
<path fill="#0000ff" d="M18 238h1251v2h-1251z"/>
<path fill="#00e400" d="M18 337h1v2h-1zM20 379h24v3h-24zM45 337h25v2h-25zM71 379h24v3h-24zM96 337h24v2h-24zM121 379h25v3h-25zM147 337h24v2h-24zM172 379h25v3h-25zM198 337h24v2h-24zM223 379h25v3h-25zM249 337h24v2h-24zM274 379h24v3h-24zM299 337h25v2h-25zM325 379h24v3h-24zM350 337h25v2h-25zM376 379h24v3h-24zM401 337h25v2h-25zM427 379h24v3h-24zM452 337h24v2h-24zM477 379h25v3h-25zM503 337h24v2h-24zM528 379h25v3h-25zM554 337h24v2h-24zM579 379h25v3h-25zM605 337h24v2h-24zM630 379h24v3h-24zM655 337h25v2h-25zM681 379h24v3h-24zM706 337h25v2h-25zM732 379h24v3h-24zM757 337h25v2h-25zM783 379h24v3h-24zM808 337h25v2h-25zM834 379h24v3h-24zM859 337h24v2h-24zM884 379h25v3h-25zM910 337h24v2h-24zM935 379h25v3h-25zM961 337h24v2h-24zM986 379h25v3h-25zM1012 337h24v2h-24zM1037 379h24v3h-24zM1062 337h25v2h-25zM1088 379h24v3h-24zM1113 337h25v2h-25zM1139 379h24v3h-24zM1164 337h25v2h-25zM1190 379h24v3h-24zM1215 337h24v2h-24zM1240 379h25v3h-25zM1266 337h3v2h-3z"/>
<path fill="#008a00" d="M18 336h1v1h-1zM20 381h24v1h-24zM32 371h1v14h-1zM45 336h25v1h-25zM57 326h1v19h-1zM52 339h2v1h-2zM55 339h2v1h-2zM54 339h2v1h-2zM63 339h1v1h-1zM71 381h24v1h-24zM83 371h1v15h-1zM96 336h24v1h-24zM108 333h1v11h-1zM102 339h3v1h-3zM97 339h2v1h-2zM109 339h1v1h-1zM117 339h1v1h-1zM121 381h25v1h-25zM133 370h1v15h-1zM147 336h24v1h-24zM159 332h1v11h-1zM167 339h3v1h-3zM157 339h1v1h-1zM153 339h3v1h-3zM148 339h1v1h-1zM172 381h25v1h-25zM184 373h1v15h-1zM198 336h24v1h-24zM210 328h1v18h-1zM205 339h3v1h-3zM218 339h3v1h-3zM214 339h2v1h-2zM200 339h2v1h-2zM223 381h25v1h-25zM235 370h1v15h-1zM249 336h24v1h-24zM261 332h1v13h-1zM259 339h3v1h-3zM269 339h2v1h-2zM266 339h2v1h-2zM272 339h3v1h-3zM274 381h24v1h-24zM286 372h1v16h-1zM299 336h25v1h-25zM311 326h1v18h-1zM321 339h3v1h-3zM306 339h1v1h-1zM301 339h3v1h-3zM321 339h1v1h-1zM325 381h24v1h-24zM337 373h1v14h-1zM350 336h25v1h-25zM362 333h1v12h-1zM357 339h3v1h-3zM361 339h3v1h-3zM362 339h3v1h-3zM369 339h3v1h-3zM376 381h24v1h-24zM388 369h1v17h-1zM401 336h25v1h-25zM413 329h1v15h-1zM417 339h1v1h-1zM412 339h1v1h-1zM405 339h3v1h-3zM406 339h3v1h-3zM427 381h24v1h-24zM439 371h1v17h-1zM452 336h24v1h-24zM464 331h1v14h-1zM460 339h2v1h-2zM466 339h3v1h-3zM466 339h3v1h-3zM475 339h1v1h-1zM477 381h25v1h-25zM489 369h1v17h-1zM503 336h24v1h-24zM515 330h1v13h-1zM503 339h3v1h-3zM504 339h3v1h-3zM512 339h3v1h-3zM513 339h2v1h-2zM528 381h25v1h-25zM540 371h1v17h-1zM554 336h24v1h-24zM566 331h1v12h-1zM565 339h1v1h-1zM567 339h2v1h-2zM565 339h1v1h-1zM572 339h1v1h-1zM579 381h25v1h-25zM591 373h1v14h-1zM605 336h24v1h-24zM617 333h1v10h-1zM619 339h3v1h-3zM618 339h2v1h-2zM607 339h2v1h-2zM620 339h1v1h-1zM630 381h24v1h-24zM642 370h1v16h-1zM655 336h25v1h-25zM667 327h1v17h-1zM658 339h2v1h-2zM679 339h1v1h-1zM656 339h3v1h-3zM677 339h2v1h-2zM681 381h24v1h-24zM693 369h1v19h-1zM706 336h25v1h-25zM718 334h1v9h-1zM722 339h2v1h-2zM716 339h2v1h-2zM727 339h2v1h-2zM722 339h2v1h-2zM732 381h24v1h-24zM744 371h1v16h-1zM757 336h25v1h-25zM769 334h1v11h-1zM779 339h3v1h-3zM768 339h2v1h-2zM771 339h3v1h-3zM780 339h2v1h-2zM783 381h24v1h-24zM795 373h1v12h-1zM808 336h25v1h-25zM820 329h1v17h-1zM814 339h1v1h-1zM813 339h2v1h-2zM809 339h1v1h-1zM827 339h2v1h-2zM834 381h24v1h-24zM846 369h1v17h-1zM859 336h24v1h-24zM871 328h1v16h-1zM873 339h1v1h-1zM861 339h1v1h-1zM866 339h3v1h-3zM881 339h2v1h-2zM884 381h25v1h-25zM896 370h1v15h-1zM910 336h24v1h-24zM922 334h1v10h-1zM920 339h3v1h-3zM914 339h3v1h-3zM922 339h1v1h-1zM922 339h1v1h-1zM935 381h25v1h-25zM947 370h1v15h-1zM961 336h24v1h-24zM973 326h1v19h-1zM981 339h3v1h-3zM970 339h2v1h-2zM961 339h2v1h-2zM967 339h2v1h-2zM986 381h25v1h-25zM998 371h1v14h-1zM1012 336h24v1h-24zM1024 327h1v16h-1zM1016 339h3v1h-3zM1013 339h1v1h-1zM1023 339h2v1h-2zM1019 339h2v1h-2zM1037 381h24v1h-24zM1049 370h1v15h-1zM1062 336h25v1h-25zM1074 328h1v18h-1zM1063 339h1v1h-1zM1075 339h3v1h-3zM1075 339h3v1h-3zM1064 339h2v1h-2zM1088 381h24v1h-24zM1100 371h1v15h-1zM1113 336h25v1h-25zM1125 327h1v17h-1zM1128 339h2v1h-2zM1123 339h2v1h-2zM1118 339h3v1h-3zM1129 339h2v1h-2zM1139 381h24v1h-24zM1151 370h1v17h-1zM1164 336h25v1h-25zM1176 326h1v17h-1zM1186 339h3v1h-3zM1186 339h3v1h-3zM1166 339h1v1h-1zM1172 339h1v1h-1zM1190 381h24v1h-24zM1202 372h1v13h-1zM1215 336h24v1h-24zM1227 334h1v9h-1zM1234 339h2v1h-2zM1216 339h1v1h-1zM1224 339h2v1h-2zM1229 339h3v1h-3zM1240 381h25v1h-25zM1252 369h1v18h-1zM1266 336h3v1h-3zM44 325h1v57h-1zM95 328h1v54h-1zM146 325h1v57h-1zM197 326h1v56h-1zM248 326h1v56h-1zM298 326h1v56h-1zM349 328h1v54h-1zM400 324h1v58h-1zM451 323h1v59h-1zM502 330h1v52h-1zM553 323h1v59h-1zM604 330h1v52h-1zM654 328h1v54h-1zM705 324h1v58h-1zM756 324h1v58h-1zM807 326h1v56h-1zM858 323h1v59h-1zM909 328h1v54h-1zM960 329h1v53h-1zM1011 324h1v58h-1zM1061 328h1v54h-1zM1112 325h1v57h-1zM1163 330h1v52h-1zM1214 330h1v52h-1zM1265 325h1v57h-1zM19 336h1v51h-1zM70 336h1v49h-1zM120 336h1v50h-1zM171 336h1v52h-1zM222 336h1v49h-1zM273 336h1v51h-1zM324 336h1v50h-1zM375 336h1v52h-1zM426 336h1v52h-1zM476 336h1v52h-1zM527 336h1v51h-1zM578 336h1v52h-1zM629 336h1v50h-1zM680 336h1v52h-1zM731 336h1v49h-1zM782 336h1v52h-1zM833 336h1v49h-1zM883 336h1v52h-1zM934 336h1v51h-1zM985 336h1v50h-1zM1036 336h1v50h-1zM1087 336h1v51h-1zM1138 336h1v52h-1zM1189 336h1v51h-1zM1239 336h1v49h-1z"/>
<path fill="#a9b8a9" d="M18 465h1v2h-1zM20 422h24v2h-24zM45 465h25v2h-25zM52 467h1v1h-1zM55 467h2v1h-2zM54 467h1v1h-1zM63 467h2v1h-2zM71 422h24v2h-24zM96 465h24v2h-24zM102 467h2v1h-2zM97 467h1v1h-1zM109 467h2v1h-2zM117 467h1v1h-1zM121 422h25v2h-25zM147 465h24v2h-24zM167 467h2v1h-2zM157 467h1v1h-1zM153 467h1v1h-1zM148 467h1v1h-1zM172 422h25v2h-25zM198 465h24v2h-24zM205 467h1v1h-1zM218 467h1v1h-1zM214 467h2v1h-2zM200 467h1v1h-1zM223 422h25v2h-25zM249 465h24v2h-24zM259 467h1v1h-1zM269 467h2v1h-2zM266 467h2v1h-2zM272 467h2v1h-2zM274 422h24v2h-24zM299 465h25v2h-25zM321 467h2v1h-2zM306 467h1v1h-1zM301 467h1v1h-1zM321 467h2v1h-2zM325 422h24v2h-24zM350 465h25v2h-25zM357 467h2v1h-2zM361 467h1v1h-1zM362 467h2v1h-2zM369 467h2v1h-2zM376 422h24v2h-24zM401 465h25v2h-25zM417 467h1v1h-1zM412 467h1v1h-1zM405 467h2v1h-2zM406 467h1v1h-1zM427 422h24v2h-24zM452 465h24v2h-24zM460 467h2v1h-2zM466 467h1v1h-1zM466 467h2v1h-2zM475 467h1v1h-1zM477 422h25v2h-25zM503 465h24v2h-24zM503 467h2v1h-2zM504 467h1v1h-1zM512 467h2v1h-2zM513 467h1v1h-1zM528 422h25v2h-25zM554 465h24v2h-24zM565 467h2v1h-2zM567 467h2v1h-2zM565 467h2v1h-2zM572 467h1v1h-1zM579 422h25v2h-25zM605 465h24v2h-24zM619 467h2v1h-2zM618 467h1v1h-1zM607 467h2v1h-2zM620 467h1v1h-1zM630 422h24v2h-24zM655 465h25v2h-25zM658 467h1v1h-1zM679 467h2v1h-2zM656 467h1v1h-1zM677 467h2v1h-2zM681 422h24v2h-24zM706 465h25v2h-25zM722 467h1v1h-1zM716 467h2v1h-2zM727 467h2v1h-2zM722 467h1v1h-1zM732 422h24v2h-24zM757 465h25v2h-25zM779 467h1v1h-1zM768 467h1v1h-1zM771 467h1v1h-1zM780 467h1v1h-1zM783 422h24v2h-24zM808 465h25v2h-25zM814 467h1v1h-1zM813 467h1v1h-1zM809 467h1v1h-1zM827 467h1v1h-1zM834 422h24v2h-24zM859 465h24v2h-24zM873 467h1v1h-1zM861 467h2v1h-2zM866 467h2v1h-2zM881 467h2v1h-2zM884 422h25v2h-25zM910 465h24v2h-24zM920 467h1v1h-1zM914 467h1v1h-1zM922 467h2v1h-2zM922 467h2v1h-2zM935 422h25v2h-25zM961 465h24v2h-24zM981 467h1v1h-1zM970 467h2v1h-2zM961 467h1v1h-1zM967 467h2v1h-2zM986 422h25v2h-25zM1012 465h24v2h-24zM1016 467h2v1h-2zM1013 467h2v1h-2zM1023 467h2v1h-2zM1019 467h2v1h-2zM1037 422h24v2h-24zM1062 465h25v2h-25zM1063 467h1v1h-1zM1075 467h1v1h-1zM1075 467h2v1h-2zM1064 467h1v1h-1zM1088 422h24v2h-24zM1113 465h25v2h-25zM1128 467h1v1h-1zM1123 467h1v1h-1zM1118 467h1v1h-1zM1129 467h2v1h-2zM1139 422h24v2h-24zM1164 465h25v2h-25zM1186 467h1v1h-1zM1186 467h1v1h-1zM1166 467h1v1h-1zM1172 467h2v1h-2zM1190 422h24v2h-24zM1215 465h24v2h-24zM1234 467h1v1h-1zM1216 467h1v1h-1zM1224 467h1v1h-1zM1229 467h1v1h-1zM1240 422h25v2h-25zM1266 465h3v2h-3z"/>
<path fill="#566e56" d="M18 464h1v1h-1zM20 421h24v1h-24zM32 410h1v22h-1zM32 424h2v1h-2zM32 424h3v1h-3zM40 424h1v1h-1zM20 424h2v1h-2zM45 464h25v1h-25zM57 455h1v15h-1zM71 421h24v1h-24zM83 415h1v15h-1zM80 424h1v1h-1zM81 424h1v1h-1zM86 424h1v1h-1zM76 424h2v1h-2zM96 464h24v1h-24zM108 456h1v13h-1zM121 421h25v1h-25zM133 410h1v20h-1zM125 424h3v1h-3zM144 424h2v1h-2zM124 424h1v1h-1zM135 424h3v1h-3zM147 464h24v1h-24zM159 455h1v16h-1zM172 421h25v1h-25zM184 414h1v14h-1zM195 424h1v1h-1zM173 424h2v1h-2zM174 424h1v1h-1zM175 424h2v1h-2zM198 464h24v1h-24zM210 452h1v18h-1zM223 421h25v1h-25zM235 411h1v18h-1zM223 424h2v1h-2zM231 424h1v1h-1zM224 424h1v1h-1zM239 424h1v1h-1zM249 464h24v1h-24zM261 454h1v15h-1zM274 421h24v1h-24zM286 411h1v21h-1zM287 424h2v1h-2zM278 424h2v1h-2zM286 424h2v1h-2zM278 424h3v1h-3zM299 464h25v1h-25zM311 456h1v15h-1zM325 421h24v1h-24zM337 414h1v17h-1zM342 424h3v1h-3zM335 424h2v1h-2zM343 424h1v1h-1zM340 424h3v1h-3zM350 464h25v1h-25zM362 456h1v16h-1zM376 421h24v1h-24zM388 413h1v17h-1zM384 424h2v1h-2zM399 424h2v1h-2zM392 424h3v1h-3zM391 424h3v1h-3zM401 464h25v1h-25zM413 452h1v19h-1zM427 421h24v1h-24zM439 411h1v20h-1zM430 424h2v1h-2zM431 424h3v1h-3zM435 424h2v1h-2zM430 424h2v1h-2zM452 464h24v1h-24zM464 455h1v14h-1zM477 421h25v1h-25zM489 411h1v20h-1zM493 424h3v1h-3zM484 424h3v1h-3zM488 424h3v1h-3zM487 424h2v1h-2zM503 464h24v1h-24zM515 456h1v14h-1zM528 421h25v1h-25zM540 409h1v23h-1zM548 424h2v1h-2zM530 424h1v1h-1zM532 424h2v1h-2zM537 424h3v1h-3zM554 464h24v1h-24zM566 455h1v17h-1zM579 421h25v1h-25zM591 409h1v20h-1zM589 424h1v1h-1zM581 424h2v1h-2zM591 424h2v1h-2zM595 424h2v1h-2zM605 464h24v1h-24zM617 452h1v20h-1zM630 421h24v1h-24zM642 412h1v20h-1zM631 424h3v1h-3zM639 424h3v1h-3zM640 424h2v1h-2zM644 424h1v1h-1zM655 464h25v1h-25zM667 452h1v17h-1zM681 421h24v1h-24zM693 415h1v17h-1zM685 424h2v1h-2zM682 424h3v1h-3zM685 424h2v1h-2zM691 424h1v1h-1zM706 464h25v1h-25zM718 453h1v18h-1zM732 421h24v1h-24zM744 410h1v21h-1zM745 424h3v1h-3zM740 424h2v1h-2zM738 424h1v1h-1zM733 424h1v1h-1zM757 464h25v1h-25zM769 455h1v17h-1zM783 421h24v1h-24zM795 412h1v20h-1zM793 424h1v1h-1zM791 424h1v1h-1zM797 424h2v1h-2zM789 424h3v1h-3zM808 464h25v1h-25zM820 455h1v17h-1zM834 421h24v1h-24zM846 412h1v17h-1zM855 424h3v1h-3zM855 424h3v1h-3zM843 424h1v1h-1zM851 424h1v1h-1zM859 464h24v1h-24zM871 456h1v13h-1zM884 421h25v1h-25zM896 414h1v15h-1zM885 424h1v1h-1zM898 424h2v1h-2zM908 424h1v1h-1zM902 424h2v1h-2zM910 464h24v1h-24zM922 454h1v17h-1zM935 421h25v1h-25zM947 410h1v21h-1zM939 424h3v1h-3zM940 424h2v1h-2zM945 424h3v1h-3zM947 424h1v1h-1zM961 464h24v1h-24zM973 452h1v18h-1zM986 421h25v1h-25zM998 410h1v19h-1zM1001 424h2v1h-2zM1010 424h1v1h-1zM1004 424h2v1h-2zM987 424h3v1h-3zM1012 464h24v1h-24zM1024 454h1v16h-1zM1037 421h24v1h-24zM1049 415h1v15h-1zM1039 424h3v1h-3zM1054 424h2v1h-2zM1040 424h3v1h-3zM1054 424h1v1h-1zM1062 464h25v1h-25zM1074 455h1v14h-1zM1088 421h24v1h-24zM1100 414h1v14h-1zM1098 424h1v1h-1zM1108 424h2v1h-2zM1097 424h1v1h-1zM1096 424h1v1h-1zM1113 464h25v1h-25zM1125 452h1v18h-1zM1139 421h24v1h-24zM1151 412h1v20h-1zM1145 424h1v1h-1zM1146 424h3v1h-3zM1156 424h3v1h-3zM1146 424h1v1h-1zM1164 464h25v1h-25zM1176 452h1v20h-1zM1190 421h24v1h-24zM1202 411h1v21h-1zM1193 424h1v1h-1zM1211 424h3v1h-3zM1196 424h1v1h-1zM1197 424h3v1h-3zM1215 464h24v1h-24zM1227 453h1v16h-1zM1240 421h25v1h-25zM1252 412h1v19h-1zM1241 424h1v1h-1zM1247 424h1v1h-1zM1263 424h3v1h-3zM1261 424h1v1h-1zM1266 464h3v1h-3zM44 415h1v56h-1zM95 415h1v56h-1zM146 415h1v56h-1zM197 415h1v56h-1zM248 415h1v56h-1zM298 415h1v56h-1zM349 415h1v56h-1zM400 415h1v56h-1zM451 415h1v56h-1zM502 415h1v56h-1zM553 415h1v56h-1zM604 415h1v56h-1zM654 415h1v56h-1zM705 415h1v56h-1zM756 415h1v56h-1zM807 415h1v56h-1zM858 415h1v56h-1zM909 415h1v56h-1zM960 415h1v56h-1zM1011 415h1v56h-1zM1061 415h1v56h-1zM1112 415h1v56h-1zM1163 415h1v56h-1zM1214 415h1v56h-1zM1265 415h1v56h-1zM19 415h1v57h-1zM70 416h1v57h-1zM120 416h1v57h-1zM171 415h1v57h-1zM222 413h1v57h-1zM273 414h1v57h-1zM324 414h1v57h-1zM375 414h1v57h-1zM426 413h1v57h-1zM476 416h1v57h-1zM527 416h1v57h-1zM578 413h1v57h-1zM629 415h1v57h-1zM680 415h1v57h-1zM731 415h1v57h-1zM782 413h1v57h-1zM833 416h1v57h-1zM883 416h1v57h-1zM934 416h1v57h-1zM985 415h1v57h-1zM1036 413h1v57h-1zM1087 416h1v57h-1zM1138 413h1v57h-1zM1189 415h1v57h-1zM1239 415h1v57h-1z"/>
<path fill="#0000c8" d="M18 588h381v1h-381zM43 587h1v1h-1zM45 587h1v1h-1zM68 587h1v1h-1zM72 587h1v1h-1zM75 587h1v1h-1zM84 587h1v1h-1zM97 587h1v1h-1zM100 587h1v1h-1zM110 587h1v1h-1zM115 587h1v1h-1zM136 587h1v1h-1zM143 587h1v1h-1zM149 587h1v1h-1zM157 587h1v1h-1zM166 587h1v1h-1zM176 587h1v1h-1zM194 587h1v1h-1zM195 587h1v1h-1zM210 587h1v1h-1zM229 587h1v1h-1zM230 587h1v1h-1zM242 587h1v1h-1zM264 587h1v1h-1zM265 587h1v1h-1zM271 587h1v1h-1zM284 587h1v1h-1zM287 587h1v1h-1zM289 587h1v1h-1zM299 587h1v1h-1zM302 587h1v1h-1zM314 587h1v1h-1zM318 587h1v1h-1zM326 587h1v1h-1zM348 587h1v1h-1zM351 587h1v1h-1zM354 587h1v1h-1zM365 587h1v1h-1zM369 587h1v1h-1zM389 587h1v1h-1zM395 587h1v1h-1zM400 525h1v131h-1zM402 539h24v118h-24zM403 538h1v1h-1zM404 538h1v1h-1zM406 657h1v2h-1zM407 538h1v1h-1zM410 538h1v1h-1zM411 538h1v1h-1zM411 657h1v2h-1zM412 657h1v1h-1zM416 538h1v1h-1zM419 538h1v1h-1zM421 538h1v1h-1zM423 538h1v1h-1zM424 538h1v1h-1zM425 657h1v2h-1zM429 525h23v118h-23zM431 524h1v1h-1zM431 643h1v1h-1zM433 524h1v1h-1zM434 643h1v1h-1zM435 643h1v1h-1zM436 643h1v1h-1zM439 524h1v1h-1zM441 524h1v1h-1zM442 524h1v1h-1zM442 643h1v1h-1zM446 643h1v1h-1zM449 523h1v2h-1zM450 643h1v1h-1zM451 524h1v1h-1zM454 539h22v118h-22zM454 538h1v1h-1zM455 538h1v1h-1zM455 657h1v2h-1zM456 657h1v1h-1zM458 538h1v1h-1zM458 657h1v2h-1zM459 657h1v2h-1zM460 657h1v2h-1zM462 538h1v1h-1zM463 538h1v1h-1zM466 538h1v1h-1zM467 657h1v2h-1zM468 538h1v1h-1zM470 657h1v1h-1zM471 538h1v1h-1zM472 538h1v1h-1zM473 538h1v1h-1zM475 538h1v1h-1zM479 525h24v118h-24zM482 523h1v2h-1zM482 643h1v1h-1zM484 643h1v1h-1zM485 643h1v1h-1zM486 523h1v2h-1zM487 523h1v2h-1zM491 643h1v1h-1zM493 524h1v1h-1zM497 643h1v1h-1zM505 539h22v118h-22zM505 657h1v1h-1zM506 538h1v1h-1zM507 657h1v1h-1zM509 657h1v1h-1zM510 538h1v1h-1zM510 657h1v2h-1zM512 657h1v1h-1zM513 657h1v2h-1zM514 538h1v1h-1zM515 657h1v2h-1zM517 538h1v1h-1zM517 657h1v2h-1zM521 657h1v2h-1zM522 538h1v1h-1zM523 538h1v1h-1zM525 538h1v1h-1zM530 525h24v118h-24zM531 523h1v2h-1zM536 524h1v1h-1zM537 643h1v1h-1zM541 523h1v2h-1zM543 524h1v1h-1zM543 643h1v1h-1zM547 524h1v1h-1zM548 643h1v1h-1zM550 523h1v2h-1zM551 524h1v1h-1zM552 643h1v1h-1zM556 539h22v118h-22zM558 538h1v1h-1zM561 538h1v1h-1zM563 657h1v1h-1zM567 538h1v1h-1zM569 657h1v2h-1zM571 538h1v1h-1zM573 538h1v1h-1zM573 657h1v1h-1zM575 538h1v1h-1zM576 657h1v1h-1zM577 657h1v1h-1zM581 525h24v118h-24zM581 643h1v1h-1zM582 643h1v1h-1zM585 524h1v1h-1zM586 643h1v1h-1zM587 524h1v1h-1zM589 524h1v1h-1zM594 523h1v2h-1zM595 524h1v1h-1zM595 643h1v1h-1zM596 523h1v2h-1zM596 643h1v1h-1zM597 524h1v1h-1zM597 643h1v1h-1zM598 524h1v1h-1zM598 643h1v1h-1zM599 524h1v1h-1zM601 524h1v1h-1zM602 523h1v2h-1zM603 643h1v1h-1zM607 539h22v118h-22zM607 538h1v1h-1zM611 538h1v1h-1zM611 657h1v2h-1zM614 657h1v2h-1zM618 538h1v1h-1zM618 657h1v2h-1zM621 657h1v2h-1zM622 657h1v2h-1zM623 657h1v1h-1zM624 657h1v2h-1zM625 538h1v1h-1zM627 538h1v1h-1zM632 525h23v118h-23zM632 523h1v2h-1zM633 643h1v1h-1zM635 643h1v1h-1zM638 524h1v1h-1zM643 524h1v1h-1zM645 643h1v1h-1zM646 643h1v1h-1zM647 524h1v1h-1zM648 524h1v1h-1zM651 524h1v1h-1zM652 523h1v2h-1zM653 643h1v1h-1zM657 539h23v118h-23zM657 657h1v2h-1zM658 538h1v1h-1zM658 657h1v1h-1zM659 538h1v1h-1zM661 657h1v1h-1zM665 538h1v1h-1zM666 538h1v1h-1zM667 538h1v1h-1zM668 657h1v2h-1zM669 538h1v1h-1zM670 538h1v1h-1zM670 657h1v2h-1zM672 538h1v1h-1zM672 657h1v2h-1zM674 538h1v1h-1zM674 657h1v1h-1zM676 538h1v1h-1zM676 657h1v1h-1zM678 657h1v2h-1zM679 538h1v1h-1zM683 525h23v118h-23zM683 523h1v2h-1zM685 523h1v2h-1zM686 524h1v1h-1zM688 523h1v2h-1zM689 524h1v1h-1zM695 643h1v1h-1zM696 643h1v1h-1zM697 524h1v1h-1zM701 524h1v1h-1zM702 524h1v1h-1zM704 643h1v1h-1zM705 643h1v1h-1zM708 539h23v118h-23zM708 657h1v1h-1zM709 538h1v1h-1zM710 657h1v2h-1zM712 538h1v1h-1zM712 657h1v2h-1zM713 657h1v2h-1zM716 538h1v1h-1zM719 657h1v1h-1zM722 657h1v1h-1zM724 657h1v2h-1zM725 538h1v1h-1zM726 538h1v1h-1zM726 657h1v2h-1zM729 538h1v1h-1zM729 657h1v1h-1zM730 657h1v1h-1zM734 525h23v118h-23zM739 523h1v2h-1zM740 643h1v1h-1zM741 643h1v1h-1zM747 523h1v2h-1zM749 643h1v1h-1zM751 643h1v1h-1zM753 523h1v2h-1zM754 523h1v2h-1zM755 643h1v1h-1zM759 539h23v118h-23zM759 538h1v1h-1zM760 657h1v1h-1zM761 657h1v1h-1zM763 538h1v1h-1zM763 657h1v1h-1zM766 538h1v1h-1zM766 657h1v2h-1zM769 538h1v1h-1zM770 657h1v1h-1zM772 657h1v1h-1zM773 538h1v1h-1zM774 657h1v2h-1zM777 538h1v1h-1zM779 538h1v1h-1zM780 657h1v2h-1zM785 525h23v118h-23zM785 523h1v2h-1zM786 643h1v1h-1zM790 643h1v1h-1zM791 524h1v1h-1zM792 523h1v2h-1zM793 523h1v2h-1zM793 643h1v1h-1zM794 643h1v1h-1zM796 523h1v2h-1zM798 643h1v1h-1zM800 643h1v1h-1zM802 524h1v1h-1zM802 643h1v1h-1zM804 524h1v1h-1zM806 643h1v1h-1zM810 539h23v118h-23zM811 538h1v1h-1zM811 657h1v1h-1zM813 657h1v1h-1zM816 538h1v1h-1zM816 657h1v2h-1zM817 538h1v1h-1zM817 657h1v1h-1zM823 657h1v2h-1zM824 538h1v1h-1zM828 538h1v1h-1zM829 538h1v1h-1zM829 657h1v1h-1zM836 525h23v118h-23zM836 523h1v2h-1zM839 643h1v1h-1zM841 643h1v1h-1zM843 523h1v2h-1zM844 523h1v2h-1zM846 524h1v1h-1zM847 523h1v2h-1zM850 643h1v1h-1zM851 523h1v2h-1zM852 523h1v2h-1zM852 643h1v1h-1zM853 643h1v1h-1zM854 643h1v1h-1zM855 524h1v1h-1zM857 523h1v2h-1zM857 643h1v1h-1zM858 523h1v2h-1zM861 539h22v118h-22zM861 657h1v2h-1zM864 538h1v1h-1zM864 657h1v2h-1zM865 538h1v1h-1zM865 657h1v2h-1zM866 657h1v2h-1zM868 538h1v1h-1zM870 538h1v1h-1zM871 538h1v1h-1zM872 538h1v1h-1zM875 538h1v1h-1zM877 657h1v2h-1zM878 657h1v2h-1zM880 538h1v1h-1zM882 657h1v2h-1zM886 525h24v118h-24zM886 523h1v2h-1zM887 523h1v2h-1zM887 643h1v1h-1zM889 643h1v1h-1zM890 643h1v1h-1zM893 523h1v2h-1zM895 523h1v2h-1zM897 524h1v1h-1zM897 643h1v1h-1zM900 643h1v1h-1zM906 524h1v1h-1zM909 524h1v1h-1zM912 539h22v118h-22zM912 538h1v1h-1zM916 538h1v1h-1zM916 657h1v1h-1zM918 538h1v1h-1zM921 657h1v1h-1zM923 657h1v1h-1zM924 657h1v1h-1zM928 538h1v1h-1zM929 657h1v2h-1zM931 538h1v1h-1zM931 657h1v1h-1zM937 525h24v118h-24zM939 523h1v2h-1zM940 523h1v2h-1zM941 523h1v2h-1zM942 524h1v1h-1zM943 523h1v2h-1zM949 523h1v2h-1zM950 524h1v1h-1zM953 643h1v1h-1zM954 643h1v1h-1zM956 643h1v1h-1zM957 524h1v1h-1zM958 523h1v2h-1zM960 524h1v1h-1zM963 539h22v118h-22zM963 538h1v1h-1zM967 538h1v1h-1zM968 657h1v1h-1zM969 538h1v1h-1zM971 657h1v2h-1zM973 538h1v1h-1zM973 657h1v2h-1zM974 538h1v1h-1zM976 538h1v1h-1zM978 657h1v1h-1zM979 657h1v2h-1zM980 657h1v2h-1zM981 538h1v1h-1zM983 538h1v1h-1zM983 657h1v1h-1zM988 525h24v118h-24zM988 643h1v1h-1zM990 643h1v1h-1zM992 523h1v2h-1zM994 523h1v2h-1zM996 523h1v2h-1zM998 523h1v2h-1zM1005 643h1v1h-1zM1007 524h1v1h-1zM1008 643h1v1h-1zM1011 524h1v1h-1zM1011 643h1v1h-1zM1014 539h22v118h-22zM1014 657h1v2h-1zM1015 538h1v1h-1zM1018 538h1v1h-1zM1018 657h1v1h-1zM1020 538h1v1h-1zM1023 538h1v1h-1zM1024 657h1v1h-1zM1025 538h1v1h-1zM1025 657h1v1h-1zM1027 657h1v2h-1zM1034 657h1v1h-1zM1039 525h23v118h-23zM1039 643h1v1h-1zM1041 643h1v1h-1zM1042 643h1v1h-1zM1043 643h1v1h-1zM1044 524h1v1h-1zM1045 524h1v1h-1zM1046 524h1v1h-1zM1046 643h1v1h-1zM1047 643h1v1h-1zM1049 523h1v2h-1zM1050 523h1v2h-1zM1051 524h1v1h-1zM1052 523h1v2h-1zM1052 643h1v1h-1zM1054 523h1v2h-1zM1057 523h1v2h-1zM1057 643h1v1h-1zM1060 524h1v1h-1zM1060 643h1v1h-1zM1064 539h23v118h-23zM1065 657h1v1h-1zM1066 538h1v1h-1zM1066 657h1v1h-1zM1067 657h1v2h-1zM1071 538h1v1h-1zM1071 657h1v1h-1zM1072 538h1v1h-1zM1076 538h1v1h-1zM1083 538h1v1h-1zM1083 657h1v1h-1zM1085 538h1v1h-1zM1085 657h1v1h-1zM1090 525h23v118h-23zM1090 524h1v1h-1zM1090 643h1v1h-1zM1091 523h1v2h-1zM1091 643h1v1h-1zM1092 524h1v1h-1zM1093 523h1v2h-1zM1095 523h1v2h-1zM1095 643h1v1h-1zM1097 643h1v1h-1zM1098 524h1v1h-1zM1098 643h1v1h-1zM1101 643h1v1h-1zM1102 524h1v1h-1zM1104 523h1v2h-1zM1104 643h1v1h-1zM1112 643h1v1h-1zM1115 539h23v118h-23zM1115 538h1v1h-1zM1115 657h1v1h-1zM1116 538h1v1h-1zM1116 657h1v1h-1zM1120 538h1v1h-1zM1120 657h1v1h-1zM1123 657h1v1h-1zM1124 657h1v1h-1zM1125 657h1v2h-1zM1126 657h1v2h-1zM1127 538h1v1h-1zM1127 657h1v2h-1zM1129 538h1v1h-1zM1131 538h1v1h-1zM1134 538h1v1h-1zM1134 657h1v2h-1zM1137 657h1v2h-1zM1141 525h23v118h-23zM1141 643h1v1h-1zM1143 643h1v1h-1zM1144 524h1v1h-1zM1144 643h1v1h-1zM1145 523h1v2h-1zM1147 643h1v1h-1zM1151 523h1v2h-1zM1152 524h1v1h-1zM1152 643h1v1h-1zM1155 643h1v1h-1zM1156 524h1v1h-1zM1157 523h1v2h-1zM1157 643h1v1h-1zM1158 523h1v2h-1zM1159 643h1v1h-1zM1161 523h1v2h-1zM1163 523h1v2h-1zM1163 643h1v1h-1zM1166 539h23v118h-23zM1167 538h1v1h-1zM1168 538h1v1h-1zM1169 657h1v1h-1zM1171 657h1v2h-1zM1172 538h1v1h-1zM1173 657h1v2h-1zM1175 538h1v1h-1zM1176 657h1v2h-1zM1177 657h1v2h-1zM1178 538h1v1h-1zM1180 538h1v1h-1zM1182 538h1v1h-1zM1182 657h1v2h-1zM1183 538h1v1h-1zM1186 657h1v2h-1zM1187 657h1v1h-1zM1188 657h1v1h-1zM1192 525h23v118h-23zM1196 643h1v1h-1zM1197 523h1v2h-1zM1198 643h1v1h-1zM1199 523h1v2h-1zM1200 524h1v1h-1zM1204 643h1v1h-1zM1205 643h1v1h-1zM1207 524h1v1h-1zM1210 643h1v1h-1zM1213 524h1v1h-1zM1217 539h22v118h-22zM1217 538h1v1h-1zM1217 657h1v2h-1zM1220 657h1v2h-1zM1221 538h1v1h-1zM1221 657h1v2h-1zM1223 538h1v1h-1zM1223 657h1v1h-1zM1224 538h1v1h-1zM1225 657h1v2h-1zM1228 657h1v1h-1zM1229 538h1v1h-1zM1229 657h1v1h-1zM1233 657h1v1h-1zM1235 657h1v1h-1zM1238 538h1v1h-1zM1242 525h24v118h-24zM1242 643h1v1h-1zM1245 524h1v1h-1zM1248 643h1v1h-1zM1249 643h1v1h-1zM1251 523h1v2h-1zM1253 643h1v1h-1zM1256 643h1v1h-1zM1257 523h1v2h-1zM1258 524h1v1h-1zM1258 643h1v1h-1zM1259 524h1v1h-1zM1260 523h1v2h-1zM1262 523h1v2h-1zM1263 643h1v1h-1zM1264 643h1v1h-1zM1268 539h1v118h-1z"/>
<path fill="#2a4cf0" d="M18 589h381v1h-381zM402 541h24v1h-24zM402 592h24v1h-24zM429 588h23v1h-23zM429 639h23v1h-23zM454 541h22v1h-22zM454 592h22v1h-22zM479 588h24v1h-24zM479 639h24v1h-24zM505 541h22v1h-22zM505 592h22v1h-22zM530 588h24v1h-24zM530 639h24v1h-24zM556 541h22v1h-22zM556 592h22v1h-22zM581 588h24v1h-24zM581 639h24v1h-24zM607 541h22v1h-22zM607 592h22v1h-22zM632 588h23v1h-23zM632 639h23v1h-23zM657 541h23v1h-23zM657 592h23v1h-23zM683 588h23v1h-23zM683 639h23v1h-23zM708 541h23v1h-23zM708 592h23v1h-23zM734 588h23v1h-23zM734 639h23v1h-23zM759 541h23v1h-23zM759 592h23v1h-23zM785 588h23v1h-23zM785 639h23v1h-23zM810 541h23v1h-23zM810 592h23v1h-23zM836 588h23v1h-23zM836 639h23v1h-23zM861 541h22v1h-22zM861 592h22v1h-22zM886 588h24v1h-24zM886 639h24v1h-24zM912 541h22v1h-22zM912 592h22v1h-22zM937 588h24v1h-24zM937 639h24v1h-24zM963 541h22v1h-22zM963 592h22v1h-22zM988 588h24v1h-24zM988 639h24v1h-24zM1014 541h22v1h-22zM1014 592h22v1h-22zM1039 588h23v1h-23zM1039 639h23v1h-23zM1064 541h23v1h-23zM1064 592h23v1h-23zM1090 588h23v1h-23zM1090 639h23v1h-23zM1115 541h23v1h-23zM1115 592h23v1h-23zM1141 588h23v1h-23zM1141 639h23v1h-23zM1166 541h23v1h-23zM1166 592h23v1h-23zM1192 588h23v1h-23zM1192 639h23v1h-23zM1217 541h22v1h-22zM1217 592h22v1h-22zM1242 588h24v1h-24zM1242 639h24v1h-24zM1268 541h1v1h-1zM1268 592h1v1h-1z"/>
<path fill="#1428dc" d="M402 650h24v1h-24zM429 530h23v1h-23zM454 650h22v1h-22zM479 530h24v1h-24zM505 650h22v1h-22zM530 530h24v1h-24zM556 650h22v1h-22zM581 530h24v1h-24zM607 650h22v1h-22zM632 530h23v1h-23zM657 650h23v1h-23zM683 530h23v1h-23zM708 650h23v1h-23zM734 530h23v1h-23zM759 650h23v1h-23zM785 530h23v1h-23zM810 650h23v1h-23zM836 530h23v1h-23zM861 650h22v1h-22zM886 530h24v1h-24zM912 650h22v1h-22zM937 530h24v1h-24zM963 650h22v1h-22zM988 530h24v1h-24zM1014 650h22v1h-22zM1039 530h23v1h-23zM1064 650h23v1h-23zM1090 530h23v1h-23zM1115 650h23v1h-23zM1141 530h23v1h-23zM1166 650h23v1h-23zM1192 530h23v1h-23zM1217 650h22v1h-22zM1242 530h24v1h-24zM1268 650h1v1h-1z"/>
<path fill="#8c0000" d="M18 590h381v4h-381zM398 593h1v16h-1zM401 593h1v88h-1zM402 502h1v18h-1zM403 502h1v18h-1zM404 503h1v18h-1zM405 504h1v16h-1zM406 504h1v16h-1zM407 504h1v16h-1zM408 504h1v16h-1zM409 504h1v16h-1zM410 504h1v17h-1zM411 504h1v16h-1zM412 504h1v17h-1zM413 504h1v15h-1zM414 501h1v18h-1zM415 501h1v20h-1zM416 501h1v17h-1zM417 503h1v15h-1zM418 503h1v16h-1zM419 501h1v18h-1zM420 502h1v16h-1zM421 502h1v14h-1zM422 501h1v16h-1zM423 501h1v15h-1zM424 500h1v14h-1zM425 499h1v14h-1zM426 499h1v13h-1zM426 500h1v66h-1zM427 566h1v40h-1zM428 606h1v36h-1zM429 642h1v25h-1zM429 661h1v17h-1zM430 661h1v17h-1zM431 659h1v19h-1zM432 660h1v18h-1zM433 662h1v18h-1zM434 662h1v16h-1zM435 661h1v20h-1zM436 663h1v18h-1zM437 662h1v19h-1zM438 662h1v18h-1zM439 663h1v17h-1zM440 662h1v18h-1zM441 664h1v17h-1zM442 665h1v16h-1zM443 664h1v18h-1zM444 664h1v17h-1zM445 666h1v16h-1zM446 667h1v17h-1zM447 667h1v15h-1zM448 668h1v15h-1zM449 669h1v15h-1zM450 667h1v16h-1zM451 668h1v16h-1zM453 504h1v18h-1zM454 502h1v20h-1zM455 504h1v17h-1zM456 502h1v20h-1zM457 502h1v19h-1zM458 503h1v17h-1zM459 504h1v17h-1zM460 502h1v18h-1zM461 504h1v16h-1zM462 502h1v19h-1zM463 502h1v18h-1zM464 503h1v18h-1zM465 503h1v17h-1zM466 503h1v18h-1zM467 503h1v16h-1zM468 503h1v15h-1zM469 500h1v19h-1zM470 502h1v16h-1zM471 502h1v15h-1zM472 501h1v14h-1zM473 501h1v14h-1zM474 500h1v14h-1zM475 500h1v14h-1zM476 499h1v13h-1zM453 505h1v75h-1zM452 580h1v103h-1zM476 500h1v66h-1zM477 566h1v40h-1zM478 606h1v36h-1zM479 642h1v25h-1zM479 661h1v16h-1zM480 661h1v16h-1zM481 660h1v18h-1zM482 661h1v17h-1zM483 662h1v16h-1zM484 662h1v16h-1zM485 660h1v19h-1zM486 662h1v17h-1zM487 663h1v16h-1zM488 663h1v18h-1zM489 664h1v16h-1zM490 664h1v17h-1zM491 664h1v17h-1zM492 664h1v18h-1zM493 664h1v18h-1zM494 666h1v17h-1zM495 664h1v20h-1zM496 667h1v15h-1zM497 666h1v18h-1zM498 667h1v15h-1zM499 666h1v19h-1zM500 668h1v15h-1zM501 669h1v14h-1zM502 669h1v16h-1zM504 504h1v16h-1zM505 503h1v18h-1zM506 504h1v16h-1zM507 503h1v17h-1zM508 504h1v16h-1zM509 504h1v16h-1zM510 504h1v16h-1zM511 504h1v17h-1zM512 502h1v20h-1zM513 503h1v18h-1zM514 503h1v16h-1zM515 503h1v17h-1zM516 502h1v17h-1zM517 503h1v17h-1zM518 503h1v15h-1zM519 501h1v18h-1zM520 500h1v17h-1zM521 501h1v16h-1zM522 502h1v16h-1zM523 501h1v14h-1zM524 501h1v16h-1zM525 499h1v15h-1zM526 499h1v14h-1zM527 499h1v13h-1zM504 505h1v75h-1zM503 580h1v103h-1zM527 500h1v66h-1zM528 566h1v40h-1zM529 606h1v36h-1zM530 642h1v25h-1zM530 661h1v16h-1zM531 661h1v16h-1zM532 661h1v17h-1zM533 661h1v18h-1zM534 660h1v18h-1zM535 662h1v18h-1zM536 661h1v18h-1zM537 661h1v18h-1zM538 661h1v18h-1zM539 661h1v21h-1zM540 664h1v18h-1zM541 664h1v17h-1zM542 664h1v16h-1zM543 665h1v16h-1zM544 663h1v18h-1zM545 666h1v15h-1zM546 666h1v16h-1zM547 667h1v15h-1zM548 667h1v16h-1zM549 668h1v16h-1zM550 668h1v15h-1zM551 668h1v15h-1zM552 669h1v16h-1zM553 670h1v14h-1zM555 503h1v17h-1zM556 503h1v17h-1zM557 504h1v16h-1zM558 502h1v18h-1zM559 503h1v17h-1zM560 503h1v17h-1zM561 504h1v16h-1zM562 503h1v17h-1zM563 504h1v17h-1zM564 504h1v18h-1zM565 502h1v18h-1zM566 503h1v16h-1zM567 501h1v20h-1zM568 501h1v18h-1zM569 503h1v15h-1zM570 503h1v16h-1zM571 502h1v15h-1zM572 502h1v17h-1zM573 502h1v14h-1zM574 501h1v16h-1zM575 499h1v16h-1zM576 500h1v14h-1zM577 500h1v15h-1zM578 497h1v15h-1zM555 505h1v75h-1zM554 580h1v103h-1zM578 500h1v66h-1zM579 566h1v40h-1zM580 606h1v36h-1zM581 642h1v25h-1zM581 660h1v18h-1zM582 660h1v18h-1zM583 660h1v18h-1zM584 661h1v17h-1zM585 660h1v20h-1zM586 661h1v17h-1zM587 661h1v19h-1zM588 663h1v16h-1zM589 663h1v16h-1zM590 663h1v17h-1zM591 664h1v16h-1zM592 664h1v18h-1zM593 664h1v16h-1zM594 663h1v18h-1zM595 664h1v17h-1zM596 666h1v16h-1zM597 666h1v17h-1zM598 667h1v15h-1zM599 667h1v15h-1zM600 668h1v15h-1zM601 668h1v15h-1zM602 669h1v14h-1zM603 669h1v14h-1zM604 670h1v16h-1zM606 503h1v17h-1zM607 503h1v19h-1zM608 504h1v17h-1zM609 504h1v17h-1zM610 504h1v16h-1zM611 502h1v18h-1zM612 504h1v18h-1zM613 503h1v17h-1zM614 504h1v16h-1zM615 504h1v16h-1zM616 503h1v17h-1zM617 503h1v16h-1zM618 502h1v19h-1zM619 503h1v16h-1zM620 503h1v15h-1zM621 503h1v15h-1zM622 500h1v17h-1zM623 502h1v15h-1zM624 500h1v16h-1zM625 501h1v16h-1zM626 500h1v15h-1zM627 500h1v15h-1zM628 500h1v13h-1zM629 499h1v13h-1zM606 505h1v75h-1zM605 580h1v103h-1zM629 500h1v66h-1zM630 566h1v40h-1zM631 606h1v36h-1zM632 642h1v25h-1zM632 661h1v17h-1zM633 661h1v16h-1zM634 660h1v18h-1zM635 659h1v19h-1zM636 661h1v19h-1zM637 660h1v18h-1zM638 662h1v17h-1zM639 662h1v17h-1zM640 663h1v16h-1zM641 663h1v19h-1zM642 664h1v18h-1zM643 663h1v18h-1zM644 664h1v18h-1zM645 665h1v16h-1zM646 666h1v16h-1zM647 665h1v17h-1zM648 665h1v18h-1zM649 667h1v15h-1zM650 668h1v14h-1zM651 667h1v16h-1zM652 669h1v14h-1zM653 669h1v15h-1zM654 668h1v16h-1zM656 503h1v17h-1zM657 504h1v16h-1zM658 503h1v19h-1zM659 503h1v17h-1zM660 504h1v18h-1zM661 504h1v16h-1zM662 502h1v18h-1zM663 503h1v17h-1zM664 504h1v17h-1zM665 504h1v17h-1zM666 502h1v18h-1zM667 503h1v16h-1zM668 501h1v18h-1zM669 501h1v18h-1zM670 503h1v15h-1zM671 503h1v16h-1zM672 503h1v17h-1zM673 501h1v16h-1zM674 502h1v16h-1zM675 502h1v14h-1zM676 499h1v18h-1zM677 501h1v14h-1zM678 498h1v16h-1zM679 499h1v14h-1zM680 499h1v13h-1zM656 505h1v75h-1zM655 580h1v103h-1zM680 500h1v66h-1zM681 566h1v40h-1zM682 606h1v36h-1zM683 642h1v25h-1zM683 661h1v18h-1zM684 661h1v17h-1zM685 660h1v18h-1zM686 659h1v20h-1zM687 662h1v17h-1zM688 662h1v16h-1zM689 661h1v19h-1zM690 661h1v20h-1zM691 663h1v16h-1zM692 661h1v20h-1zM693 664h1v16h-1zM694 664h1v17h-1zM695 663h1v20h-1zM696 664h1v18h-1zM697 666h1v15h-1zM698 664h1v17h-1zM699 667h1v15h-1zM700 665h1v17h-1zM701 668h1v16h-1zM702 668h1v16h-1zM703 669h1v14h-1zM704 669h1v14h-1zM705 670h1v15h-1zM707 504h1v16h-1zM708 504h1v16h-1zM709 503h1v17h-1zM710 504h1v18h-1zM711 503h1v17h-1zM712 504h1v16h-1zM713 504h1v18h-1zM714 504h1v17h-1zM715 504h1v18h-1zM716 504h1v17h-1zM717 504h1v16h-1zM718 504h1v15h-1zM719 503h1v17h-1zM720 502h1v18h-1zM721 503h1v15h-1zM722 503h1v15h-1zM723 503h1v17h-1zM724 502h1v17h-1zM725 501h1v17h-1zM726 500h1v16h-1zM727 500h1v15h-1zM728 501h1v14h-1zM729 500h1v15h-1zM730 500h1v13h-1zM731 498h1v14h-1zM707 505h1v75h-1zM706 580h1v103h-1zM731 500h1v66h-1zM732 566h1v40h-1zM733 606h1v36h-1zM734 642h1v25h-1zM734 660h1v17h-1zM735 661h1v16h-1zM736 660h1v19h-1zM737 661h1v17h-1zM738 662h1v16h-1zM739 662h1v16h-1zM740 661h1v19h-1zM741 663h1v17h-1zM742 663h1v16h-1zM743 662h1v19h-1zM744 663h1v17h-1zM745 664h1v16h-1zM746 664h1v17h-1zM747 665h1v16h-1zM748 664h1v19h-1zM749 666h1v15h-1zM750 667h1v17h-1zM751 665h1v17h-1zM752 668h1v16h-1zM753 667h1v17h-1zM754 668h1v17h-1zM755 669h1v15h-1zM756 668h1v16h-1zM758 503h1v18h-1zM759 502h1v19h-1zM760 503h1v17h-1zM761 502h1v18h-1zM762 504h1v16h-1zM763 504h1v16h-1zM764 502h1v20h-1zM765 502h1v18h-1zM766 503h1v19h-1zM767 502h1v18h-1zM768 504h1v15h-1zM769 503h1v18h-1zM770 503h1v17h-1zM771 503h1v17h-1zM772 503h1v15h-1zM773 502h1v16h-1zM774 501h1v17h-1zM775 502h1v15h-1zM776 502h1v15h-1zM777 501h1v15h-1zM778 501h1v14h-1zM779 501h1v16h-1zM780 499h1v16h-1zM781 500h1v13h-1zM782 499h1v13h-1zM758 505h1v75h-1zM757 580h1v103h-1zM782 500h1v66h-1zM783 566h1v40h-1zM784 606h1v36h-1zM785 642h1v25h-1zM785 659h1v19h-1zM786 661h1v18h-1zM787 659h1v19h-1zM788 661h1v17h-1zM789 661h1v17h-1zM790 662h1v16h-1zM791 662h1v17h-1zM792 662h1v17h-1zM793 663h1v16h-1zM794 663h1v19h-1zM795 664h1v18h-1zM796 664h1v16h-1zM797 664h1v18h-1zM798 665h1v16h-1zM799 666h1v15h-1zM800 666h1v16h-1zM801 667h1v15h-1zM802 667h1v16h-1zM803 666h1v16h-1zM804 668h1v17h-1zM805 667h1v16h-1zM806 668h1v15h-1zM807 669h1v15h-1zM809 504h1v17h-1zM810 503h1v18h-1zM811 502h1v18h-1zM812 504h1v17h-1zM813 504h1v16h-1zM814 504h1v18h-1zM815 504h1v16h-1zM816 503h1v19h-1zM817 502h1v18h-1zM818 503h1v17h-1zM819 504h1v15h-1zM820 504h1v16h-1zM821 503h1v16h-1zM822 501h1v18h-1zM823 503h1v15h-1zM824 503h1v15h-1zM825 502h1v16h-1zM826 500h1v17h-1zM827 502h1v17h-1zM828 502h1v14h-1zM829 501h1v16h-1zM830 501h1v15h-1zM831 500h1v14h-1zM832 498h1v17h-1zM833 499h1v13h-1zM809 505h1v75h-1zM808 580h1v103h-1zM833 500h1v66h-1zM834 566h1v40h-1zM835 606h1v36h-1zM836 642h1v25h-1zM836 660h1v17h-1zM837 661h1v16h-1zM838 661h1v17h-1zM839 660h1v18h-1zM840 661h1v19h-1zM841 661h1v17h-1zM842 662h1v17h-1zM843 663h1v17h-1zM844 663h1v18h-1zM845 663h1v17h-1zM846 664h1v18h-1zM847 664h1v18h-1zM848 665h1v17h-1zM849 665h1v18h-1zM850 666h1v16h-1zM851 666h1v15h-1zM852 667h1v15h-1zM853 667h1v15h-1zM854 666h1v16h-1zM855 667h1v16h-1zM856 667h1v17h-1zM857 669h1v16h-1zM858 670h1v16h-1zM860 503h1v17h-1zM861 502h1v18h-1zM862 504h1v16h-1zM863 503h1v18h-1zM864 504h1v16h-1zM865 504h1v16h-1zM866 504h1v17h-1zM867 502h1v18h-1zM868 504h1v16h-1zM869 504h1v16h-1zM870 502h1v17h-1zM871 501h1v20h-1zM872 501h1v18h-1zM873 501h1v18h-1zM874 502h1v16h-1zM875 501h1v17h-1zM876 502h1v17h-1zM877 502h1v15h-1zM878 502h1v15h-1zM879 500h1v15h-1zM880 499h1v17h-1zM881 500h1v14h-1zM882 499h1v16h-1zM883 497h1v15h-1zM860 505h1v75h-1zM859 580h1v103h-1zM883 500h1v66h-1zM884 566h1v40h-1zM885 606h1v36h-1zM886 642h1v25h-1zM886 661h1v16h-1zM887 661h1v18h-1zM888 661h1v17h-1zM889 659h1v20h-1zM890 660h1v18h-1zM891 661h1v19h-1zM892 661h1v18h-1zM893 661h1v20h-1zM894 663h1v18h-1zM895 662h1v19h-1zM896 663h1v17h-1zM897 662h1v20h-1zM898 662h1v20h-1zM899 663h1v19h-1zM900 665h1v18h-1zM901 666h1v16h-1zM902 664h1v18h-1zM903 667h1v16h-1zM904 665h1v17h-1zM905 667h1v15h-1zM906 667h1v18h-1zM907 667h1v17h-1zM908 668h1v15h-1zM909 670h1v16h-1zM911 504h1v16h-1zM912 503h1v17h-1zM913 502h1v18h-1zM914 504h1v16h-1zM915 503h1v17h-1zM916 504h1v16h-1zM917 502h1v18h-1zM918 504h1v17h-1zM919 502h1v20h-1zM920 503h1v17h-1zM921 504h1v15h-1zM922 503h1v16h-1zM923 503h1v16h-1zM924 503h1v16h-1zM925 501h1v19h-1zM926 503h1v17h-1zM927 501h1v18h-1zM928 502h1v16h-1zM929 502h1v14h-1zM930 501h1v14h-1zM931 500h1v16h-1zM932 499h1v16h-1zM933 498h1v15h-1zM934 499h1v13h-1zM911 505h1v75h-1zM910 580h1v103h-1zM934 500h1v66h-1zM935 566h1v40h-1zM936 606h1v36h-1zM937 642h1v25h-1zM937 661h1v16h-1zM938 661h1v16h-1zM939 660h1v18h-1zM940 661h1v17h-1zM941 660h1v18h-1zM942 662h1v16h-1zM943 660h1v19h-1zM944 663h1v16h-1zM945 663h1v16h-1zM946 662h1v18h-1zM947 663h1v17h-1zM948 664h1v18h-1zM949 663h1v17h-1zM950 665h1v16h-1zM951 665h1v17h-1zM952 664h1v17h-1zM953 664h1v18h-1zM954 667h1v16h-1zM955 665h1v17h-1zM956 666h1v18h-1zM957 668h1v15h-1zM958 667h1v17h-1zM959 669h1v14h-1zM960 670h1v14h-1zM962 504h1v16h-1zM963 504h1v16h-1zM964 504h1v16h-1zM965 504h1v16h-1zM966 502h1v19h-1zM967 503h1v19h-1zM968 503h1v17h-1zM969 502h1v19h-1zM970 504h1v16h-1zM971 504h1v17h-1zM972 504h1v17h-1zM973 503h1v16h-1zM974 503h1v16h-1zM975 503h1v16h-1zM976 502h1v18h-1zM977 503h1v16h-1zM978 502h1v17h-1zM979 502h1v15h-1zM980 502h1v14h-1zM981 499h1v16h-1zM982 501h1v15h-1zM983 499h1v15h-1zM984 498h1v17h-1zM985 499h1v13h-1zM962 505h1v75h-1zM961 580h1v103h-1zM985 500h1v66h-1zM986 566h1v40h-1zM987 606h1v36h-1zM988 642h1v25h-1zM988 661h1v16h-1zM989 661h1v16h-1zM990 660h1v19h-1zM991 661h1v17h-1zM992 662h1v17h-1zM993 660h1v18h-1zM994 662h1v18h-1zM995 663h1v18h-1zM996 663h1v18h-1zM997 663h1v17h-1zM998 664h1v16h-1zM999 664h1v16h-1zM1000 664h1v18h-1zM1001 665h1v16h-1zM1002 663h1v18h-1zM1003 666h1v16h-1zM1004 666h1v17h-1zM1005 667h1v17h-1zM1006 665h1v17h-1zM1007 668h1v14h-1zM1008 668h1v15h-1zM1009 669h1v14h-1zM1010 669h1v14h-1zM1011 670h1v14h-1zM1013 502h1v18h-1zM1014 504h1v18h-1zM1015 502h1v18h-1zM1016 504h1v17h-1zM1017 502h1v18h-1zM1018 504h1v18h-1zM1019 504h1v17h-1zM1020 503h1v17h-1zM1021 502h1v19h-1zM1022 502h1v20h-1zM1023 502h1v18h-1zM1024 503h1v16h-1zM1025 503h1v16h-1zM1026 503h1v17h-1zM1027 503h1v15h-1zM1028 501h1v17h-1zM1029 502h1v15h-1zM1030 502h1v15h-1zM1031 502h1v14h-1zM1032 500h1v15h-1zM1033 501h1v16h-1zM1034 498h1v16h-1zM1035 500h1v13h-1zM1036 498h1v14h-1zM1013 505h1v75h-1zM1012 580h1v103h-1zM1036 500h1v66h-1zM1037 566h1v40h-1zM1038 606h1v36h-1zM1039 642h1v25h-1zM1039 661h1v16h-1zM1040 660h1v19h-1zM1041 659h1v20h-1zM1042 661h1v17h-1zM1043 662h1v16h-1zM1044 661h1v17h-1zM1045 662h1v18h-1zM1046 661h1v18h-1zM1047 663h1v17h-1zM1048 663h1v18h-1zM1049 664h1v16h-1zM1050 664h1v16h-1zM1051 663h1v19h-1zM1052 663h1v18h-1zM1053 666h1v15h-1zM1054 665h1v16h-1zM1055 667h1v15h-1zM1056 666h1v18h-1zM1057 666h1v16h-1zM1058 668h1v15h-1zM1059 667h1v17h-1zM1060 669h1v14h-1zM1061 668h1v16h-1zM1063 502h1v20h-1zM1064 502h1v18h-1zM1065 504h1v18h-1zM1066 504h1v16h-1zM1067 504h1v17h-1zM1068 504h1v16h-1zM1069 504h1v16h-1zM1070 504h1v16h-1zM1071 503h1v17h-1zM1072 504h1v16h-1zM1073 503h1v16h-1zM1074 504h1v15h-1zM1075 502h1v19h-1zM1076 502h1v17h-1zM1077 503h1v15h-1zM1078 503h1v17h-1zM1079 501h1v19h-1zM1080 502h1v15h-1zM1081 501h1v18h-1zM1082 502h1v16h-1zM1083 501h1v16h-1zM1084 501h1v16h-1zM1085 499h1v15h-1zM1086 500h1v14h-1zM1087 499h1v15h-1zM1063 505h1v75h-1zM1062 580h1v103h-1zM1087 500h1v66h-1zM1088 566h1v40h-1zM1089 606h1v36h-1zM1090 642h1v25h-1zM1090 661h1v18h-1zM1091 660h1v17h-1zM1092 661h1v17h-1zM1093 661h1v17h-1zM1094 662h1v16h-1zM1095 660h1v18h-1zM1096 660h1v20h-1zM1097 663h1v18h-1zM1098 661h1v18h-1zM1099 662h1v18h-1zM1100 664h1v16h-1zM1101 662h1v19h-1zM1102 665h1v16h-1zM1103 663h1v20h-1zM1104 666h1v17h-1zM1105 666h1v15h-1zM1106 666h1v16h-1zM1107 667h1v17h-1zM1108 666h1v16h-1zM1109 668h1v16h-1zM1110 668h1v15h-1zM1111 668h1v15h-1zM1112 668h1v16h-1zM1114 503h1v18h-1zM1115 503h1v17h-1zM1116 504h1v18h-1zM1117 502h1v18h-1zM1118 502h1v18h-1zM1119 504h1v16h-1zM1120 504h1v17h-1zM1121 504h1v16h-1zM1122 503h1v18h-1zM1123 503h1v17h-1zM1124 504h1v15h-1zM1125 503h1v16h-1zM1126 502h1v17h-1zM1127 503h1v16h-1zM1128 501h1v17h-1zM1129 502h1v17h-1zM1130 502h1v16h-1zM1131 502h1v17h-1zM1132 502h1v17h-1zM1133 501h1v15h-1zM1134 500h1v15h-1zM1135 501h1v15h-1zM1136 499h1v17h-1zM1137 499h1v16h-1zM1138 499h1v13h-1zM1114 505h1v75h-1zM1113 580h1v103h-1zM1138 500h1v66h-1zM1139 566h1v40h-1zM1140 606h1v36h-1zM1141 642h1v25h-1zM1141 661h1v16h-1zM1142 660h1v17h-1zM1143 661h1v19h-1zM1144 661h1v17h-1zM1145 662h1v16h-1zM1146 662h1v18h-1zM1147 660h1v21h-1zM1148 662h1v18h-1zM1149 663h1v16h-1zM1150 663h1v17h-1zM1151 663h1v19h-1zM1152 664h1v16h-1zM1153 665h1v18h-1zM1154 665h1v17h-1zM1155 665h1v16h-1zM1156 665h1v17h-1zM1157 665h1v18h-1zM1158 665h1v18h-1zM1159 668h1v14h-1zM1160 668h1v15h-1zM1161 669h1v14h-1zM1162 667h1v16h-1zM1163 670h1v14h-1zM1165 503h1v17h-1zM1166 504h1v16h-1zM1167 503h1v19h-1zM1168 503h1v17h-1zM1169 504h1v18h-1zM1170 504h1v16h-1zM1171 502h1v19h-1zM1172 504h1v16h-1zM1173 503h1v17h-1zM1174 503h1v17h-1zM1175 504h1v15h-1zM1176 503h1v18h-1zM1177 502h1v17h-1zM1178 503h1v18h-1zM1179 503h1v15h-1zM1180 503h1v15h-1zM1181 502h1v18h-1zM1182 500h1v17h-1zM1183 502h1v15h-1zM1184 501h1v15h-1zM1185 501h1v14h-1zM1186 501h1v14h-1zM1187 498h1v16h-1zM1188 500h1v14h-1zM1189 498h1v16h-1zM1165 505h1v75h-1zM1164 580h1v103h-1zM1189 500h1v66h-1zM1190 566h1v40h-1zM1191 606h1v36h-1zM1192 642h1v25h-1zM1192 659h1v20h-1zM1193 659h1v18h-1zM1194 660h1v20h-1zM1195 661h1v17h-1zM1196 660h1v18h-1zM1197 660h1v18h-1zM1198 660h1v20h-1zM1199 663h1v16h-1zM1200 663h1v17h-1zM1201 663h1v17h-1zM1202 664h1v16h-1zM1203 664h1v16h-1zM1204 664h1v17h-1zM1205 665h1v16h-1zM1206 666h1v15h-1zM1207 664h1v17h-1zM1208 667h1v16h-1zM1209 666h1v16h-1zM1210 666h1v16h-1zM1211 668h1v16h-1zM1212 668h1v15h-1zM1213 669h1v14h-1zM1214 670h1v14h-1zM1216 503h1v17h-1zM1217 504h1v17h-1zM1218 503h1v17h-1zM1219 504h1v16h-1zM1220 502h1v18h-1zM1221 504h1v18h-1zM1222 503h1v17h-1zM1223 502h1v20h-1zM1224 502h1v18h-1zM1225 504h1v16h-1zM1226 503h1v17h-1zM1227 502h1v17h-1zM1228 503h1v17h-1zM1229 503h1v16h-1zM1230 503h1v15h-1zM1231 501h1v17h-1zM1232 502h1v15h-1zM1233 501h1v17h-1zM1234 502h1v15h-1zM1235 501h1v15h-1zM1236 499h1v16h-1zM1237 498h1v16h-1zM1238 500h1v13h-1zM1239 499h1v13h-1zM1216 505h1v75h-1zM1215 580h1v103h-1zM1239 500h1v66h-1zM1240 566h1v40h-1zM1241 606h1v36h-1zM1242 642h1v25h-1zM1242 661h1v16h-1zM1243 661h1v17h-1zM1244 660h1v20h-1zM1245 659h1v19h-1zM1246 662h1v16h-1zM1247 660h1v20h-1zM1248 661h1v18h-1zM1249 663h1v17h-1zM1250 661h1v18h-1zM1251 663h1v17h-1zM1252 663h1v18h-1zM1253 662h1v19h-1zM1254 662h1v20h-1zM1255 663h1v18h-1zM1256 665h1v16h-1zM1257 666h1v16h-1zM1258 666h1v16h-1zM1259 667h1v17h-1zM1260 666h1v17h-1zM1261 666h1v16h-1zM1262 668h1v17h-1zM1263 669h1v14h-1zM1264 667h1v16h-1zM1265 670h1v15h-1zM1267 502h1v18h-1zM1268 497h1v15h-1zM1267 505h1v75h-1zM1266 580h1v103h-1z"/>
<path fill="#e81010" d="M18 591h381v2h-381zM402 516h1v2h-1zM403 516h1v2h-1zM404 516h1v2h-1zM405 516h1v2h-1zM406 516h1v2h-1zM407 516h1v2h-1zM408 516h1v2h-1zM409 516h1v2h-1zM410 516h1v2h-1zM411 515h1v2h-1zM412 515h1v2h-1zM413 515h1v2h-1zM414 515h1v2h-1zM415 514h1v2h-1zM416 514h1v2h-1zM417 513h1v2h-1zM418 513h1v2h-1zM419 512h1v2h-1zM420 512h1v2h-1zM421 511h1v2h-1zM422 510h1v2h-1zM423 509h1v2h-1zM424 508h1v2h-1zM425 507h1v2h-1zM426 506h1v2h-1zM429 666h1v2h-1zM430 666h1v2h-1zM431 667h1v2h-1zM432 667h1v2h-1zM433 668h1v2h-1zM434 668h1v2h-1zM435 668h1v2h-1zM436 669h1v2h-1zM437 669h1v2h-1zM438 670h1v2h-1zM439 670h1v2h-1zM440 670h1v2h-1zM441 671h1v2h-1zM442 671h1v2h-1zM443 672h1v2h-1zM444 672h1v2h-1zM445 673h1v2h-1zM446 673h1v2h-1zM447 673h1v2h-1zM448 674h1v2h-1zM449 674h1v2h-1zM450 675h1v2h-1zM451 675h1v2h-1zM453 516h1v2h-1zM454 516h1v2h-1zM455 516h1v2h-1zM456 516h1v2h-1zM457 516h1v2h-1zM458 516h1v2h-1zM459 516h1v2h-1zM460 516h1v2h-1zM461 516h1v2h-1zM462 515h1v2h-1zM463 515h1v2h-1zM464 515h1v2h-1zM465 515h1v2h-1zM466 514h1v2h-1zM467 514h1v2h-1zM468 513h1v2h-1zM469 512h1v2h-1zM470 512h1v2h-1zM471 511h1v2h-1zM472 510h1v2h-1zM473 509h1v2h-1zM474 508h1v2h-1zM475 507h1v2h-1zM476 506h1v2h-1zM479 666h1v2h-1zM480 666h1v2h-1zM481 667h1v2h-1zM482 667h1v2h-1zM483 668h1v2h-1zM484 668h1v2h-1zM485 668h1v2h-1zM486 669h1v2h-1zM487 669h1v2h-1zM488 670h1v2h-1zM489 670h1v2h-1zM490 670h1v2h-1zM491 671h1v2h-1zM492 671h1v2h-1zM493 671h1v2h-1zM494 672h1v2h-1zM495 672h1v2h-1zM496 673h1v2h-1zM497 673h1v2h-1zM498 673h1v2h-1zM499 674h1v2h-1zM500 674h1v2h-1zM501 675h1v2h-1zM502 675h1v2h-1zM504 516h1v2h-1zM505 516h1v2h-1zM506 516h1v2h-1zM507 516h1v2h-1zM508 516h1v2h-1zM509 516h1v2h-1zM510 516h1v2h-1zM511 516h1v2h-1zM512 516h1v2h-1zM513 515h1v2h-1zM514 515h1v2h-1zM515 515h1v2h-1zM516 515h1v2h-1zM517 514h1v2h-1zM518 514h1v2h-1zM519 513h1v2h-1zM520 512h1v2h-1zM521 512h1v2h-1zM522 511h1v2h-1zM523 510h1v2h-1zM524 509h1v2h-1zM525 508h1v2h-1zM526 507h1v2h-1zM527 506h1v2h-1zM530 666h1v2h-1zM531 666h1v2h-1zM532 667h1v2h-1zM533 667h1v2h-1zM534 668h1v2h-1zM535 668h1v2h-1zM536 668h1v2h-1zM537 669h1v2h-1zM538 669h1v2h-1zM539 670h1v2h-1zM540 670h1v2h-1zM541 670h1v2h-1zM542 671h1v2h-1zM543 671h1v2h-1zM544 671h1v2h-1zM545 672h1v2h-1zM546 672h1v2h-1zM547 673h1v2h-1zM548 673h1v2h-1zM549 673h1v2h-1zM550 674h1v2h-1zM551 674h1v2h-1zM552 675h1v2h-1zM553 675h1v2h-1zM555 516h1v2h-1zM556 516h1v2h-1zM557 516h1v2h-1zM558 516h1v2h-1zM559 516h1v2h-1zM560 516h1v2h-1zM561 516h1v2h-1zM562 516h1v2h-1zM563 516h1v2h-1zM564 515h1v2h-1zM565 515h1v2h-1zM566 515h1v2h-1zM567 515h1v2h-1zM568 514h1v2h-1zM569 514h1v2h-1zM570 513h1v2h-1zM571 512h1v2h-1zM572 512h1v2h-1zM573 511h1v2h-1zM574 510h1v2h-1zM575 509h1v2h-1zM576 508h1v2h-1zM577 507h1v2h-1zM578 506h1v2h-1zM581 666h1v2h-1zM582 666h1v2h-1zM583 667h1v2h-1zM584 667h1v2h-1zM585 668h1v2h-1zM586 668h1v2h-1zM587 668h1v2h-1zM588 669h1v2h-1zM589 669h1v2h-1zM590 670h1v2h-1zM591 670h1v2h-1zM592 670h1v2h-1zM593 671h1v2h-1zM594 671h1v2h-1zM595 671h1v2h-1zM596 672h1v2h-1zM597 672h1v2h-1zM598 673h1v2h-1zM599 673h1v2h-1zM600 673h1v2h-1zM601 674h1v2h-1zM602 674h1v2h-1zM603 675h1v2h-1zM604 675h1v2h-1zM606 516h1v2h-1zM607 516h1v2h-1zM608 516h1v2h-1zM609 516h1v2h-1zM610 516h1v2h-1zM611 516h1v2h-1zM612 516h1v2h-1zM613 516h1v2h-1zM614 516h1v2h-1zM615 515h1v2h-1zM616 515h1v2h-1zM617 515h1v2h-1zM618 515h1v2h-1zM619 514h1v2h-1zM620 514h1v2h-1zM621 513h1v2h-1zM622 512h1v2h-1zM623 512h1v2h-1zM624 511h1v2h-1zM625 510h1v2h-1zM626 509h1v2h-1zM627 508h1v2h-1zM628 507h1v2h-1zM629 506h1v2h-1zM632 666h1v2h-1zM633 666h1v2h-1zM634 667h1v2h-1zM635 667h1v2h-1zM636 668h1v2h-1zM637 668h1v2h-1zM638 668h1v2h-1zM639 669h1v2h-1zM640 669h1v2h-1zM641 670h1v2h-1zM642 670h1v2h-1zM643 670h1v2h-1zM644 671h1v2h-1zM645 671h1v2h-1zM646 672h1v2h-1zM647 672h1v2h-1zM648 673h1v2h-1zM649 673h1v2h-1zM650 673h1v2h-1zM651 674h1v2h-1zM652 674h1v2h-1zM653 675h1v2h-1zM654 675h1v2h-1zM656 516h1v2h-1zM657 516h1v2h-1zM658 516h1v2h-1zM659 516h1v2h-1zM660 516h1v2h-1zM661 516h1v2h-1zM662 516h1v2h-1zM663 516h1v2h-1zM664 516h1v2h-1zM665 515h1v2h-1zM666 515h1v2h-1zM667 515h1v2h-1zM668 515h1v2h-1zM669 514h1v2h-1zM670 514h1v2h-1zM671 513h1v2h-1zM672 513h1v2h-1zM673 512h1v2h-1zM674 512h1v2h-1zM675 511h1v2h-1zM676 510h1v2h-1zM677 509h1v2h-1zM678 508h1v2h-1zM679 507h1v2h-1zM680 506h1v2h-1zM683 666h1v2h-1zM684 666h1v2h-1zM685 667h1v2h-1zM686 667h1v2h-1zM687 668h1v2h-1zM688 668h1v2h-1zM689 668h1v2h-1zM690 669h1v2h-1zM691 669h1v2h-1zM692 670h1v2h-1zM693 670h1v2h-1zM694 670h1v2h-1zM695 671h1v2h-1zM696 671h1v2h-1zM697 672h1v2h-1zM698 672h1v2h-1zM699 673h1v2h-1zM700 673h1v2h-1zM701 673h1v2h-1zM702 674h1v2h-1zM703 674h1v2h-1zM704 675h1v2h-1zM705 675h1v2h-1zM707 516h1v2h-1zM708 516h1v2h-1zM709 516h1v2h-1zM710 516h1v2h-1zM711 516h1v2h-1zM712 516h1v2h-1zM713 516h1v2h-1zM714 516h1v2h-1zM715 516h1v2h-1zM716 515h1v2h-1zM717 515h1v2h-1zM718 515h1v2h-1zM719 515h1v2h-1zM720 514h1v2h-1zM721 514h1v2h-1zM722 513h1v2h-1zM723 513h1v2h-1zM724 512h1v2h-1zM725 512h1v2h-1zM726 511h1v2h-1zM727 510h1v2h-1zM728 509h1v2h-1zM729 508h1v2h-1zM730 507h1v2h-1zM731 506h1v2h-1zM734 666h1v2h-1zM735 666h1v2h-1zM736 667h1v2h-1zM737 667h1v2h-1zM738 668h1v2h-1zM739 668h1v2h-1zM740 668h1v2h-1zM741 669h1v2h-1zM742 669h1v2h-1zM743 670h1v2h-1zM744 670h1v2h-1zM745 670h1v2h-1zM746 671h1v2h-1zM747 671h1v2h-1zM748 672h1v2h-1zM749 672h1v2h-1zM750 673h1v2h-1zM751 673h1v2h-1zM752 673h1v2h-1zM753 674h1v2h-1zM754 674h1v2h-1zM755 675h1v2h-1zM756 675h1v2h-1zM758 516h1v2h-1zM759 516h1v2h-1zM760 516h1v2h-1zM761 516h1v2h-1zM762 516h1v2h-1zM763 516h1v2h-1zM764 516h1v2h-1zM765 516h1v2h-1zM766 516h1v2h-1zM767 515h1v2h-1zM768 515h1v2h-1zM769 515h1v2h-1zM770 515h1v2h-1zM771 514h1v2h-1zM772 514h1v2h-1zM773 513h1v2h-1zM774 513h1v2h-1zM775 512h1v2h-1zM776 512h1v2h-1zM777 511h1v2h-1zM778 510h1v2h-1zM779 509h1v2h-1zM780 508h1v2h-1zM781 507h1v2h-1zM782 506h1v2h-1zM785 666h1v2h-1zM786 666h1v2h-1zM787 667h1v2h-1zM788 667h1v2h-1zM789 668h1v2h-1zM790 668h1v2h-1zM791 668h1v2h-1zM792 669h1v2h-1zM793 669h1v2h-1zM794 670h1v2h-1zM795 670h1v2h-1zM796 670h1v2h-1zM797 671h1v2h-1zM798 671h1v2h-1zM799 672h1v2h-1zM800 672h1v2h-1zM801 673h1v2h-1zM802 673h1v2h-1zM803 673h1v2h-1zM804 674h1v2h-1zM805 674h1v2h-1zM806 675h1v2h-1zM807 675h1v2h-1zM809 516h1v2h-1zM810 516h1v2h-1zM811 516h1v2h-1zM812 516h1v2h-1zM813 516h1v2h-1zM814 516h1v2h-1zM815 516h1v2h-1zM816 516h1v2h-1zM817 516h1v2h-1zM818 515h1v2h-1zM819 515h1v2h-1zM820 515h1v2h-1zM821 515h1v2h-1zM822 514h1v2h-1zM823 514h1v2h-1zM824 513h1v2h-1zM825 513h1v2h-1zM826 512h1v2h-1zM827 512h1v2h-1zM828 511h1v2h-1zM829 510h1v2h-1zM830 509h1v2h-1zM831 508h1v2h-1zM832 507h1v2h-1zM833 506h1v2h-1zM836 666h1v2h-1zM837 666h1v2h-1zM838 667h1v2h-1zM839 667h1v2h-1zM840 668h1v2h-1zM841 668h1v2h-1zM842 668h1v2h-1zM843 669h1v2h-1zM844 669h1v2h-1zM845 670h1v2h-1zM846 670h1v2h-1zM847 670h1v2h-1zM848 671h1v2h-1zM849 671h1v2h-1zM850 672h1v2h-1zM851 672h1v2h-1zM852 673h1v2h-1zM853 673h1v2h-1zM854 673h1v2h-1zM855 674h1v2h-1zM856 674h1v2h-1zM857 675h1v2h-1zM858 675h1v2h-1zM860 516h1v2h-1zM861 516h1v2h-1zM862 516h1v2h-1zM863 516h1v2h-1zM864 516h1v2h-1zM865 516h1v2h-1zM866 516h1v2h-1zM867 516h1v2h-1zM868 516h1v2h-1zM869 515h1v2h-1zM870 515h1v2h-1zM871 515h1v2h-1zM872 515h1v2h-1zM873 514h1v2h-1zM874 514h1v2h-1zM875 513h1v2h-1zM876 512h1v2h-1zM877 512h1v2h-1zM878 511h1v2h-1zM879 510h1v2h-1zM880 509h1v2h-1zM881 508h1v2h-1zM882 507h1v2h-1zM883 506h1v2h-1zM886 666h1v2h-1zM887 666h1v2h-1zM888 667h1v2h-1zM889 667h1v2h-1zM890 668h1v2h-1zM891 668h1v2h-1zM892 668h1v2h-1zM893 669h1v2h-1zM894 669h1v2h-1zM895 670h1v2h-1zM896 670h1v2h-1zM897 670h1v2h-1zM898 671h1v2h-1zM899 671h1v2h-1zM900 671h1v2h-1zM901 672h1v2h-1zM902 672h1v2h-1zM903 673h1v2h-1zM904 673h1v2h-1zM905 673h1v2h-1zM906 674h1v2h-1zM907 674h1v2h-1zM908 675h1v2h-1zM909 675h1v2h-1zM911 516h1v2h-1zM912 516h1v2h-1zM913 516h1v2h-1zM914 516h1v2h-1zM915 516h1v2h-1zM916 516h1v2h-1zM917 516h1v2h-1zM918 516h1v2h-1zM919 516h1v2h-1zM920 515h1v2h-1zM921 515h1v2h-1zM922 515h1v2h-1zM923 515h1v2h-1zM924 514h1v2h-1zM925 514h1v2h-1zM926 513h1v2h-1zM927 512h1v2h-1zM928 512h1v2h-1zM929 511h1v2h-1zM930 510h1v2h-1zM931 509h1v2h-1zM932 508h1v2h-1zM933 507h1v2h-1zM934 506h1v2h-1zM937 666h1v2h-1zM938 666h1v2h-1zM939 667h1v2h-1zM940 667h1v2h-1zM941 668h1v2h-1zM942 668h1v2h-1zM943 668h1v2h-1zM944 669h1v2h-1zM945 669h1v2h-1zM946 670h1v2h-1zM947 670h1v2h-1zM948 670h1v2h-1zM949 671h1v2h-1zM950 671h1v2h-1zM951 671h1v2h-1zM952 672h1v2h-1zM953 672h1v2h-1zM954 673h1v2h-1zM955 673h1v2h-1zM956 673h1v2h-1zM957 674h1v2h-1zM958 674h1v2h-1zM959 675h1v2h-1zM960 675h1v2h-1zM962 516h1v2h-1zM963 516h1v2h-1zM964 516h1v2h-1zM965 516h1v2h-1zM966 516h1v2h-1zM967 516h1v2h-1zM968 516h1v2h-1zM969 516h1v2h-1zM970 516h1v2h-1zM971 515h1v2h-1zM972 515h1v2h-1zM973 515h1v2h-1zM974 515h1v2h-1zM975 514h1v2h-1zM976 514h1v2h-1zM977 513h1v2h-1zM978 512h1v2h-1zM979 512h1v2h-1zM980 511h1v2h-1zM981 510h1v2h-1zM982 509h1v2h-1zM983 508h1v2h-1zM984 507h1v2h-1zM985 506h1v2h-1zM988 666h1v2h-1zM989 666h1v2h-1zM990 667h1v2h-1zM991 667h1v2h-1zM992 668h1v2h-1zM993 668h1v2h-1zM994 668h1v2h-1zM995 669h1v2h-1zM996 669h1v2h-1zM997 670h1v2h-1zM998 670h1v2h-1zM999 670h1v2h-1zM1000 671h1v2h-1zM1001 671h1v2h-1zM1002 671h1v2h-1zM1003 672h1v2h-1zM1004 672h1v2h-1zM1005 673h1v2h-1zM1006 673h1v2h-1zM1007 673h1v2h-1zM1008 674h1v2h-1zM1009 674h1v2h-1zM1010 675h1v2h-1zM1011 675h1v2h-1zM1013 516h1v2h-1zM1014 516h1v2h-1zM1015 516h1v2h-1zM1016 516h1v2h-1zM1017 516h1v2h-1zM1018 516h1v2h-1zM1019 516h1v2h-1zM1020 516h1v2h-1zM1021 516h1v2h-1zM1022 515h1v2h-1zM1023 515h1v2h-1zM1024 515h1v2h-1zM1025 515h1v2h-1zM1026 514h1v2h-1zM1027 514h1v2h-1zM1028 513h1v2h-1zM1029 512h1v2h-1zM1030 512h1v2h-1zM1031 511h1v2h-1zM1032 510h1v2h-1zM1033 509h1v2h-1zM1034 508h1v2h-1zM1035 507h1v2h-1zM1036 506h1v2h-1zM1039 666h1v2h-1zM1040 666h1v2h-1zM1041 667h1v2h-1zM1042 667h1v2h-1zM1043 668h1v2h-1zM1044 668h1v2h-1zM1045 668h1v2h-1zM1046 669h1v2h-1zM1047 669h1v2h-1zM1048 670h1v2h-1zM1049 670h1v2h-1zM1050 670h1v2h-1zM1051 671h1v2h-1zM1052 671h1v2h-1zM1053 672h1v2h-1zM1054 672h1v2h-1zM1055 673h1v2h-1zM1056 673h1v2h-1zM1057 673h1v2h-1zM1058 674h1v2h-1zM1059 674h1v2h-1zM1060 675h1v2h-1zM1061 675h1v2h-1zM1063 516h1v2h-1zM1064 516h1v2h-1zM1065 516h1v2h-1zM1066 516h1v2h-1zM1067 516h1v2h-1zM1068 516h1v2h-1zM1069 516h1v2h-1zM1070 516h1v2h-1zM1071 516h1v2h-1zM1072 515h1v2h-1zM1073 515h1v2h-1zM1074 515h1v2h-1zM1075 515h1v2h-1zM1076 514h1v2h-1zM1077 514h1v2h-1zM1078 513h1v2h-1zM1079 513h1v2h-1zM1080 512h1v2h-1zM1081 512h1v2h-1zM1082 511h1v2h-1zM1083 510h1v2h-1zM1084 509h1v2h-1zM1085 508h1v2h-1zM1086 507h1v2h-1zM1087 506h1v2h-1zM1090 666h1v2h-1zM1091 666h1v2h-1zM1092 667h1v2h-1zM1093 667h1v2h-1zM1094 668h1v2h-1zM1095 668h1v2h-1zM1096 668h1v2h-1zM1097 669h1v2h-1zM1098 669h1v2h-1zM1099 670h1v2h-1zM1100 670h1v2h-1zM1101 670h1v2h-1zM1102 671h1v2h-1zM1103 671h1v2h-1zM1104 672h1v2h-1zM1105 672h1v2h-1zM1106 673h1v2h-1zM1107 673h1v2h-1zM1108 673h1v2h-1zM1109 674h1v2h-1zM1110 674h1v2h-1zM1111 675h1v2h-1zM1112 675h1v2h-1zM1114 516h1v2h-1zM1115 516h1v2h-1zM1116 516h1v2h-1zM1117 516h1v2h-1zM1118 516h1v2h-1zM1119 516h1v2h-1zM1120 516h1v2h-1zM1121 516h1v2h-1zM1122 516h1v2h-1zM1123 515h1v2h-1zM1124 515h1v2h-1zM1125 515h1v2h-1zM1126 515h1v2h-1zM1127 514h1v2h-1zM1128 514h1v2h-1zM1129 513h1v2h-1zM1130 513h1v2h-1zM1131 512h1v2h-1zM1132 512h1v2h-1zM1133 511h1v2h-1zM1134 510h1v2h-1zM1135 509h1v2h-1zM1136 508h1v2h-1zM1137 507h1v2h-1zM1138 506h1v2h-1zM1141 666h1v2h-1zM1142 666h1v2h-1zM1143 667h1v2h-1zM1144 667h1v2h-1zM1145 668h1v2h-1zM1146 668h1v2h-1zM1147 668h1v2h-1zM1148 669h1v2h-1zM1149 669h1v2h-1zM1150 670h1v2h-1zM1151 670h1v2h-1zM1152 670h1v2h-1zM1153 671h1v2h-1zM1154 671h1v2h-1zM1155 672h1v2h-1zM1156 672h1v2h-1zM1157 673h1v2h-1zM1158 673h1v2h-1zM1159 673h1v2h-1zM1160 674h1v2h-1zM1161 674h1v2h-1zM1162 675h1v2h-1zM1163 675h1v2h-1zM1165 516h1v2h-1zM1166 516h1v2h-1zM1167 516h1v2h-1zM1168 516h1v2h-1zM1169 516h1v2h-1zM1170 516h1v2h-1zM1171 516h1v2h-1zM1172 516h1v2h-1zM1173 516h1v2h-1zM1174 515h1v2h-1zM1175 515h1v2h-1zM1176 515h1v2h-1zM1177 515h1v2h-1zM1178 514h1v2h-1zM1179 514h1v2h-1zM1180 513h1v2h-1zM1181 513h1v2h-1zM1182 512h1v2h-1zM1183 512h1v2h-1zM1184 511h1v2h-1zM1185 510h1v2h-1zM1186 509h1v2h-1zM1187 508h1v2h-1zM1188 507h1v2h-1zM1189 506h1v2h-1zM1192 666h1v2h-1zM1193 666h1v2h-1zM1194 667h1v2h-1zM1195 667h1v2h-1zM1196 668h1v2h-1zM1197 668h1v2h-1zM1198 668h1v2h-1zM1199 669h1v2h-1zM1200 669h1v2h-1zM1201 670h1v2h-1zM1202 670h1v2h-1zM1203 670h1v2h-1zM1204 671h1v2h-1zM1205 671h1v2h-1zM1206 672h1v2h-1zM1207 672h1v2h-1zM1208 673h1v2h-1zM1209 673h1v2h-1zM1210 673h1v2h-1zM1211 674h1v2h-1zM1212 674h1v2h-1zM1213 675h1v2h-1zM1214 675h1v2h-1zM1216 516h1v2h-1zM1217 516h1v2h-1zM1218 516h1v2h-1zM1219 516h1v2h-1zM1220 516h1v2h-1zM1221 516h1v2h-1zM1222 516h1v2h-1zM1223 516h1v2h-1zM1224 516h1v2h-1zM1225 515h1v2h-1zM1226 515h1v2h-1zM1227 515h1v2h-1zM1228 515h1v2h-1zM1229 514h1v2h-1zM1230 514h1v2h-1zM1231 513h1v2h-1zM1232 512h1v2h-1zM1233 512h1v2h-1zM1234 511h1v2h-1zM1235 510h1v2h-1zM1236 509h1v2h-1zM1237 508h1v2h-1zM1238 507h1v2h-1zM1239 506h1v2h-1zM1242 666h1v2h-1zM1243 666h1v2h-1zM1244 667h1v2h-1zM1245 667h1v2h-1zM1246 668h1v2h-1zM1247 668h1v2h-1zM1248 668h1v2h-1zM1249 669h1v2h-1zM1250 669h1v2h-1zM1251 670h1v2h-1zM1252 670h1v2h-1zM1253 670h1v2h-1zM1254 671h1v2h-1zM1255 671h1v2h-1zM1256 671h1v2h-1zM1257 672h1v2h-1zM1258 672h1v2h-1zM1259 673h1v2h-1zM1260 673h1v2h-1zM1261 673h1v2h-1zM1262 674h1v2h-1zM1263 674h1v2h-1zM1264 675h1v2h-1zM1265 675h1v2h-1zM1267 516h1v2h-1zM1268 506h1v2h-1z"/>
<path d="M393 722l4 7h-8z" fill="#ff0088"/>
<path d="M1270 177L1278 173V181z" fill="#ff0088" shape-rendering="auto"/>
</svg>
<div style="position:absolute;left:18px;top:79px;width:130px;height:28px;background:#fff"></div><div style="position:absolute;left:18px;top:172px;width:170px;height:30px;background:#fff"></div><div style="position:absolute;left:18px;top:245px;width:172px;height:29px;background:#fff"></div><div style="position:absolute;left:18px;top:304px;width:136px;height:29px;background:#fff"></div><div style="position:absolute;left:18px;top:385px;width:136px;height:29px;background:#fff"></div><div style="position:absolute;left:18px;top:551px;width:177px;height:28px;background:#fff"></div><div style="position:absolute;left:18px;top:601px;width:188px;height:28px;background:#fff"></div>
<div class="lb" style="left:18.5px;top:83.4px;font-size:22.8px;letter-spacing:0.0px;transform:scaleY(1.07);transform-origin:0 19.30px">VM: 20V/div.</div><div class="lb" style="left:19.5px;top:177.2px;font-size:22.5px;letter-spacing:0.0px;transform:scaleY(1.07);transform-origin:0 19.05px">nSLEEP: 5V/div.</div><div class="lb" style="left:23.5px;top:249.6px;font-size:22.5px;letter-spacing:0.55px;transform:scaleY(1.07);transform-origin:0 19.05px">nFAULT: 5V/div.</div><div class="lb" style="left:23.8px;top:308.7px;font-size:22.5px;letter-spacing:0.1px;transform:scaleY(1.07);transform-origin:0 19.05px">IN1: 10V/div.</div><div class="lb" style="left:23.8px;top:389.6px;font-size:22.5px;letter-spacing:0.1px;transform:scaleY(1.07);transform-origin:0 19.05px">IN2: 10V/div.</div><div class="lb" style="left:23.8px;top:554.9px;font-size:22.5px;letter-spacing:0.25px;transform:scaleY(1.07);transform-origin:0 19.05px">OUT12: 20V/div.</div><div class="lb" style="left:23.8px;top:605.5px;font-size:22.5px;letter-spacing:0.1px;transform:scaleY(1.07);transform-origin:0 19.05px">IOUT12: 0.5A/div.</div>
<div class="mk" style="top:583px;left:10.5px;color:#9c9cff">6</div><div class="mk" style="top:113px;color:#d8c800">C1</div><div style="position:absolute;left:7px;top:123px;width:10px;height:2px;background:#b3aa00"></div><div style="position:absolute;left:7px;top:124px;width:1px;height:3px;background:#b3aa00"></div><div class="mk" style="top:197px;color:#ff0088">C2</div><div style="position:absolute;left:7px;top:207px;width:10px;height:2px;background:#ff0088"></div><div style="position:absolute;left:7px;top:208px;width:1px;height:3px;background:#ff0088"></div><div class="mk" style="top:284px;color:#0000ff">C3</div><div style="position:absolute;left:7px;top:294px;width:10px;height:2px;background:#0000ff"></div><div style="position:absolute;left:7px;top:295px;width:1px;height:3px;background:#0000ff"></div><div class="mk" style="top:369px;color:#00e400">C4</div><div style="position:absolute;left:7px;top:379px;width:10px;height:2px;background:#00e400"></div><div style="position:absolute;left:7px;top:380px;width:1px;height:3px;background:#00e400"></div><div class="mk" style="top:455px;color:#a9b8a9">C5</div><div style="position:absolute;left:7px;top:465px;width:10px;height:2px;background:#a9b8a9"></div><div style="position:absolute;left:7px;top:466px;width:1px;height:3px;background:#a9b8a9"></div><div class="mk" style="top:583px;color:#ff0000">C7</div><div style="position:absolute;left:7px;top:593px;width:10px;height:2px;background:#ff0000"></div><div style="position:absolute;left:7px;top:594px;width:1px;height:3px;background:#ff0000"></div>
<div id="menu">
<svg style="position:absolute;left:0;top:0" width="900" height="34">
<g fill="none" stroke="#d4d4d4" stroke-width="2">
 <rect x="9" y="13" width="9" height="10" rx="1"/>
</g>
<path d="M11 12l2-3h2l2 3z" fill="#d4d4d4"/>
<rect x="11" y="15" width="5" height="4" fill="#8a8a8a"/>
<path d="M72.5 9.5l4 3.5h-2.5v7h2.5l-4 3.5l-4-3.5h2.5v-7h-2.5z" fill="#f4f4f4"/>
<path d="M147 16.5l4-4v2.5h6v-2.5l4 4l-4 4v-2.5h-6v2.5z" fill="#d4d4d4"/>
<path d="M247 10h2l3.5 3l-3.5 2.5v7.5h-2z" fill="#d4d4d4"/>
<rect x="320" y="13.5" width="11" height="8.5" rx="1.5" fill="none" stroke="#d4d4d4" stroke-width="1.8"/>
<path d="M322 19l1.5-2l1 1l2-2.5l2.5 3.5z" fill="#d4d4d4"/>
<path d="M411.2 11.6L403.6 13.6L405.6 15.6L402.6 18.8L404.6 20.8L407.6 17.6L409.4 19.4Z" fill="#d4d4d4" stroke="#d4d4d4" stroke-width="0.6" stroke-linejoin="round"/>
<rect x="486" y="10.5" width="7.5" height="12" rx="1" fill="none" stroke="#d4d4d4" stroke-width="1.5"/>
<path d="M487 12.5h2M487 14.5h2M487 16.5h3.5M487 18.5h2M487 20.5h2" stroke="#d4d4d4" stroke-width="1"/>
<rect x="571.3" y="11.3" width="11.4" height="11.7" rx="1.8" fill="#d4d4d4"/>
<rect x="573.3" y="13" width="7.4" height="2.8" fill="#000"/>
<g fill="#222"><rect x="573.2" y="17" width="2" height="1.1"/><rect x="576.1" y="17" width="2" height="1.1"/><rect x="579" y="17" width="2" height="1.1"/><rect x="573.2" y="19" width="2" height="1.1"/><rect x="576.1" y="19" width="2" height="1.1"/><rect x="579" y="19" width="2" height="1.1"/><rect x="573.2" y="21" width="2" height="1.1"/><rect x="576.1" y="21" width="2" height="1.1"/><rect x="579" y="21" width="2" height="1.1"/></g>
<path d="M638 12v10.5h12" fill="none" stroke="#d4d4d4" stroke-width="1.6"/>
<path d="M639.5 19l3-2l2 1.5l3.5-3.5" fill="none" stroke="#d4d4d4" stroke-width="1.6"/>
<path d="M646 13h4.5v4.5z" fill="#d4d4d4"/>
<path d="M737.2 12.2L734.2 15.2" stroke="#d4d4d4" stroke-width="3.4" stroke-linecap="round"/>
<path d="M733.2 16.2L727 22.4" stroke="#d4d4d4" stroke-width="1.9" stroke-linecap="round"/>
<path d="M730.5 15.6L735.8 20.9" stroke="#d4d4d4" stroke-width="3.2" stroke-linecap="round"/>
<circle cx="729" cy="14" r="3.1" fill="#d4d4d4"/>
<path d="M725.6 12.6L727.6 10.6L729.6 12.8L728.4 14Z" fill="#1b1b1b"/>
<circle cx="735.6" cy="20.7" r="0.8" fill="#1b1b1b"/>
<circle cx="813" cy="17" r="6.2" fill="#d4d4d4"/>
<rect x="812" y="13.5" width="2" height="1.6" fill="#000"/><rect x="812" y="16" width="2" height="4.5" fill="#000"/>
</svg><div class="mi" style="left:25.5px">File</div><div class="mi" style="left:85px">Vertical</div><div class="mi" style="left:165.5px">Timebase</div><div class="mi" style="left:259.5px">Trigger</div><div class="mi" style="left:336.5px">Display</div><div class="mi" style="left:417.5px">Cursors</div><div class="mi" style="left:500.5px">Measure</div><div class="mi" style="left:588.5px">Math</div><div class="mi" style="left:655.5px">Analysis</div><div class="mi" style="left:743.5px">Utilities</div><div class="mi" style="left:824.5px">Support</div><div class="sep" style="left:59px"></div><div class="sep" style="left:140px"></div><div class="sep" style="left:234px"></div><div class="sep" style="left:311px"></div><div class="sep" style="left:392px"></div><div class="sep" style="left:475px"></div><div class="sep" style="left:563px"></div><div class="sep" style="left:630px"></div><div class="sep" style="left:718px"></div><div class="sep" style="left:799px"></div><div class="sep" style="left:882px"></div>
<div style="position:absolute;left:1079px;top:0;width:31px;height:31px;background:#5c5c5c"></div>
<div style="position:absolute;left:1081px;top:2px;width:27px;height:27px;background:#6a6a6a"></div>
<svg style="position:absolute;left:1083px;top:6px" width="25" height="20"><rect x="0" y="0" width="25" height="20" fill="#3a3a3a"/><rect x="1" y="1" width="23" height="18" fill="#000"/><rect x="2.5" y="2.5" width="20" height="15" fill="none" stroke="#008c8c"/><path d="M3 10.5h19M12.5 3v14" stroke="#008c8c"/><path d="M12.5 5.5v1.5M12.5 13.5v1.5M5.5 10.5h1.5M18 10.5h1.5" stroke="#00b0b0" stroke-width="2"/></svg>
<div style="position:absolute;left:1110px;top:0;width:65px;height:31px;background:#262626"></div>
<div style="position:absolute;left:1111px;top:24px;width:1px;height:7px;background:#8a8a8a"></div>
<div style="position:absolute;left:1111px;top:30px;width:64px;height:1px;background:#8a8a8a"></div>
<svg style="position:absolute;left:1167px;top:21px" width="8" height="8"><path d="M7 0v7h-7z" fill="#8a8a8a"/></svg>
<div style="position:absolute;left:1117.5px;top:3px;color:#f4f4f4;font-size:14px;line-height:14px;letter-spacing:-0.55px">Normal</div>
<div style="position:absolute;left:1197px;top:12px;color:#f4f4f4;font-size:13.5px;line-height:14px;letter-spacing:-0.5px">Gesture</div>
<div style="position:absolute;left:1247px;top:2px;width:33px;height:30px;background:#4c4c4c;border:2px solid #6a6a6a"></div>
<div style="position:absolute;left:1252.5px;top:8px;color:#f4f4f4;font-size:10px;line-height:10px;letter-spacing:-0.4px">Undo</div>
<svg style="position:absolute;left:1254px;top:17px" width="18" height="12"><path d="M3 3.2V8.2H8z" fill="#f4f4f4"/><path d="M4.5 6.8L7.2 4.4C9 2.6 12.6 2.6 13.6 4.8C14.2 6.2 13.6 8 12.8 9.4" stroke="#f4f4f4" stroke-width="1.3" fill="none"/></svg>
</div>
<div class="box" style="left:4px;background:#404040;"><div class="hd" style="background:#b3aa00"></div><div class="cn" style="color:#2a2600">C1</div><div class="bd" style="left:58px;width:36px;color:#d8cc00">DC1M</div><div class="v1">20.0 V/div</div><div class="v2">60.000 V</div></div><div class="box" style="left:104px;background:#404040;"><div class="hd" style="background:#ff0088"></div><div class="cn" style="color:#3a0020">C2</div><div class="bd" style="left:58px;width:36px;color:#ff0088">DC1M</div><div class="v1">5.00 V/div</div><div class="v2">10.000 V</div></div><div class="box" style="left:204px;background:#404040;"><div class="hd" style="background:#0000ff"></div><div class="cn" style="color:#000040">C3</div><div class="bd" style="left:58px;width:36px;color:#0000ff">DC1M</div><div class="v1">5.00 V/div</div><div class="v2">5.000 V</div></div><div class="box" style="left:304px;background:#404040;"><div class="hd" style="background:#00e800"></div><div class="cn" style="color:#003000">C4</div><div class="bd" style="left:58px;width:36px;color:#00e800">DC1M</div><div class="bd" style="left:31px;width:26px;color:#00e800">BwL</div><div class="v1">10.0 V/div</div><div class="v2">0 mV offset</div></div><div class="box" style="left:404px;background:#28486a;outline:2px solid #2e8ee8;outline-offset:-1px"><div class="hd" style="background:#a8b4a8"></div><div class="cn" style="color:#302a20">C5</div><div class="bd" style="left:58px;width:36px;color:#a8b4a8">DC1M</div><div class="bd" style="left:31px;width:26px;color:#a8b4a8">BwL</div><div class="v1">10.0 V/div</div><div class="v2">-10.000 V</div></div><div class="box" style="left:504px;background:#404040;"><div class="hd" style="background:#8c8cff"></div><div class="cn" style="color:#101040">C6</div><div class="bd" style="left:58px;width:36px;color:#8c8cff">DC1M</div><div class="bd" style="left:31px;width:26px;color:#8c8cff">BwL</div><div class="v1">20.0 V/div</div><div class="v2">-50.000 V</div></div><div class="box" style="left:604px;background:#404040;"><div class="hd" style="background:#ff0000"></div><div class="cn" style="color:#300000">C7</div><div class="bd" style="left:74px;width:20px;color:#ff0000">DC</div><div class="bd" style="left:47px;width:26px;color:#ff0000">BwL</div><div class="v1">500 mA/div</div><div class="v2">-1.2500 A</div></div><div style="position:absolute;left:704px;top:732px;width:97px;height:49px;border:1.5px dashed #505050"></div><div style="position:absolute;left:1003px;top:732px;width:57px;height:49px;background:#404040"><div style="position:absolute;left:0;top:0;width:57px;height:15px;background:#00e600"></div><div style="position:absolute;left:0;top:1px;width:57px;text-align:center;font-weight:bold;font-size:13.5px;line-height:14px;color:#000">HD</div><div style="position:absolute;left:0;top:24px;width:57px;text-align:center;font-size:13px;line-height:14px;color:#fff">12 Bits</div></div><div style="position:absolute;left:1063px;top:732px;width:112px;height:49px;background:#404040;color:#fff;font-size:13px;line-height:14px"><div style="position:absolute;left:0;top:0;width:112px;height:15px;background:#c8c8c8"></div><div style="position:absolute;left:3px;top:1.5px;color:#201000">Tbase</div><div style="position:absolute;right:1px;top:1.5px;color:#201000">-40.0 ms</div><div style="position:absolute;right:1px;top:18px">20.0 ms/div</div><div style="position:absolute;left:3px;top:33px">5 MS</div><div style="position:absolute;right:1px;top:33px">25 MS/s</div></div><div style="position:absolute;left:1178px;top:732px;width:97px;height:49px;background:#404040;color:#fff;font-size:13px;line-height:14px"><div style="position:absolute;left:0;top:0;width:97px;height:15px;background:#c8c8c8"></div><div style="position:absolute;left:3px;top:1.5px;color:#201000">Trigger</div><div class="bd" style="left:51px;width:19px;color:#000;-webkit-text-stroke:0.6px #ddd;font-size:12px">C2</div><div class="bd" style="left:73px;width:21px;color:#000;-webkit-text-stroke:0.6px #ddd;font-size:12px">DC</div><div style="position:absolute;left:3px;top:18px">Normal</div><div style="position:absolute;right:3px;top:18px">1.85 V</div><div style="position:absolute;left:3px;top:33px">Edge</div><div style="position:absolute;right:2px;top:33px">Positive</div></div><div style="position:absolute;left:0;top:783px;width:1280px;height:1px;background:#5a5a5a"></div><div style="position:absolute;left:1006px;top:784px;width:33px;height:15px;background:#c00000"></div><div style="position:absolute;left:1008.5px;top:785px;font-size:12px;line-height:13px;color:#000">Waiting for Trigger</div><div style="position:absolute;left:1132.5px;top:785px;font-size:12px;line-height:13px;color:#000">10/11/2018 10:27:30 AM</div><div style="position:absolute;left:1263px;top:784px;width:1px;height:15px;background:#000"></div><div style="position:absolute;left:6.5px;top:784.5px;font-size:14.5px;line-height:14px;color:#1a1a1a;transform:scaleX(0.84);transform-origin:0 0;white-space:nowrap"><b>TELEDYNE</b> LECROY</div>
</body></html>
